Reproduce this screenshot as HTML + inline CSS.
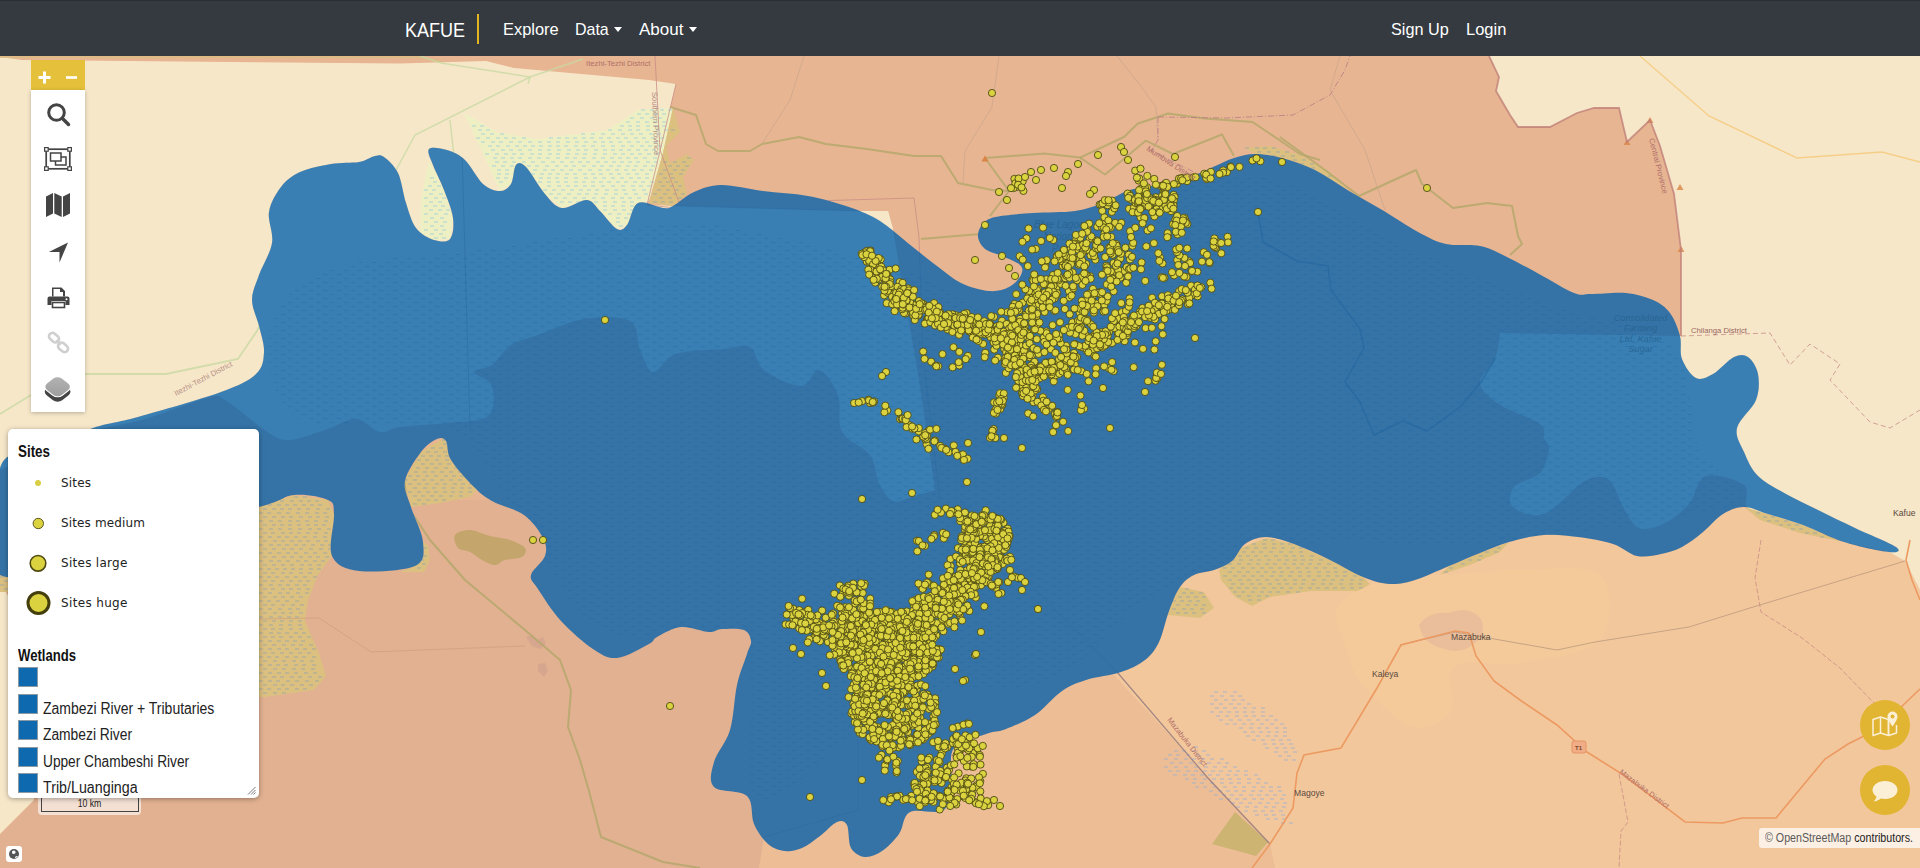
<!DOCTYPE html>
<html lang="en">
<head>
<meta charset="utf-8">
<title>Kafue</title>
<style>
html,body{margin:0;padding:0;}
body{width:1920px;height:868px;overflow:hidden;position:relative;background:#e7b592;font-family:"Liberation Sans",sans-serif;}
#map{position:absolute;left:0;top:0;display:block;}
#nav{position:absolute;left:0;top:0;width:1920px;height:56px;background:#343a40;border-top:1px solid #2a2e33;box-sizing:border-box;}
#nav span{position:absolute;color:#fff;white-space:nowrap;transform-origin:0 50%;line-height:20px;}
#nav .brand{font-size:20px;left:405px;top:18.5px;transform:scaleX(.9);}
#nav .lnk{font-size:17px;top:19px;}
#nav .bar{left:477px;top:12.5px;width:2px;height:30px;background:#e2b420;}
.caret{position:absolute;top:25.5px;width:0;height:0;border-left:4.5px solid transparent;border-right:4.5px solid transparent;border-top:5px solid #fff;}
#tools{position:absolute;left:31px;top:60px;width:54px;}
#zoom{height:30px;background:#e5c03b;position:relative;}
#panel{height:322px;background:#fff;box-shadow:0 1px 4px rgba(0,0,0,.25);position:relative;}
#panel svg{position:absolute;}
#legend{position:absolute;left:8px;top:429px;width:251px;height:369px;background:#fff;border-radius:5px;box-shadow:0 1px 5px rgba(0,0,0,.35);overflow:hidden;}
#legend span{position:absolute;white-space:nowrap;transform-origin:0 50%;}
#legend .h{font-weight:bold;font-size:16px;color:#111;line-height:18px;}
#legend .t{font-size:16px;color:#222;line-height:18px;transform:scaleX(.874);}
#legend .d{font-family:"DejaVu Sans",sans-serif;font-size:12px;color:#222;line-height:14px;letter-spacing:.1px;}
#legend i{position:absolute;left:10px;width:19px;height:19px;background:#0f69af;border:1px solid #8c9aa5;box-sizing:border-box;width:20px;height:20px;}
#scale{position:absolute;left:38px;top:797px;width:103px;height:18px;background:rgba(255,255,255,.6);border-radius:0 0 4px 4px;}
#scale div{position:absolute;left:3px;top:0;width:96px;height:14px;border:1px solid #444;border-top:none;}
#scale span{position:absolute;left:0;width:103px;top:1px;text-align:center;font-size:10px;color:#222;line-height:12px;transform:scaleX(.87);}
#attr{position:absolute;left:1759px;top:828px;width:161px;height:20px;background:rgba(255,255,255,.72);border-radius:3px 0 0 3px;}
#attr span{position:absolute;left:6px;top:3px;font-size:12px;line-height:14px;white-space:nowrap;color:#222;transform:scaleX(.89);transform-origin:0 50%;}
#attr b{font-weight:normal;color:#5a5a5a;}
.fab{position:absolute;left:1860px;width:50px;height:50px;border-radius:25px;background:#e1b431;}
#globe{position:absolute;left:6px;top:846px;width:16px;height:16px;background:#fff;border-radius:3px;}
</style>
</head>
<body>
<svg id="map" width="1920" height="868" viewBox="0 0 1920 868">
<rect width="1920" height="868" fill="#e7b592"/>
<polygon points="0,575 258,500 500,500 858,568 858,810 764,837 759,868 0,868" fill="#e1b191"/>
<polygon points="759,868 764,837 858,810 858,600 1025,579 1270,844 1275,868" fill="#edbd95"/>
<polygon points="1025,579 1100,520 1300,500 1480,470 1513,507 1544,514 1585,481 1609,480 1623,507 1639,528 1665,523 1689,504 1706,476 1744,485 1747,507 1768,514 1803,525 1844,542 1889,552 1905,561 1920,590 1920,868 1275,868 1270,844" fill="#f3c79c"/>
<polygon points="0,580 10,600 34,800 0,834" fill="#f6e7c9"/>
<polygon points="861,211 888,211 893,229 861,229" fill="#f6e7c9"/>
<path d="M93,430 L0,470 L0,57 L22,60 L400,63.5 L486,61 L514,68 L649,80 L676,84 L647,205 L861,211 L888,211 L893,230 L919,380 L935,490 C931.2,491.2 919.0,495.2 912.0,497.0C905.0,498.8 898.5,503.3 893.0,501.0C887.5,498.7 882.8,490.7 879.0,483.0C875.2,475.3 876.2,463.5 870.0,455.0C863.8,446.5 847.3,442.0 842.0,432.0C836.7,422.0 841.8,405.3 838.0,395.0C834.2,384.7 825.2,371.5 819.0,370.0C812.8,368.5 810.2,386.0 801.0,386.0C791.8,386.0 772.5,376.5 764.0,370.0C755.5,363.5 756.8,350.5 750.0,347.0C743.2,343.5 735.3,347.8 723.0,349.0C710.7,350.2 687.7,350.2 676.0,354.0C664.3,357.8 659.0,372.8 653.0,372.0C647.0,371.2 643.8,357.5 640.0,349.0C636.2,340.5 639.3,326.0 630.0,321.0C620.7,316.0 599.3,316.7 584.0,319.0C568.7,321.3 550.2,330.7 538.0,335.0C525.8,339.3 518.7,340.0 511.0,345.0C503.3,350.0 498.2,360.5 492.0,365.0C485.8,369.5 474.0,368.5 474.0,372.0C474.0,375.5 489.7,378.7 492.0,386.0C494.3,393.3 495.7,409.8 488.0,416.0C480.3,422.2 460.7,421.2 446.0,423.0C431.3,424.8 411.0,425.5 400.0,427.0C389.0,428.5 387.3,433.3 380.0,432.0C372.7,430.7 365.2,419.3 356.0,419.0C346.8,418.7 336.5,426.5 325.0,430.0C313.5,433.5 297.5,440.3 287.0,440.0C276.5,439.7 272.3,434.7 262.0,428.0C251.7,421.3 234.2,405.0 225.0,400.0C215.8,395.0 220.3,394.8 207.0,398.0C193.7,401.2 164.0,413.7 145.0,419.0C126.0,424.3 101.7,428.2 93.0,430.0Z" fill="#f6e7c9"/>
<path d="M1768,514 L1803,525 L1844,542 L1889,552 L1905,561 L1920,590 L1920,56 L1489,56 L1499,77 L1496,91 L1510,115 L1518,127 L1550,127 L1577,113 L1594,108 L1619,108 L1627,142 L1650,120 L1660,146 L1674,194 L1681,250 L1681,336 L1500,333 C1499.2,337.3 1498.3,350.7 1495.0,359.0C1491.7,367.3 1479.3,375.5 1480.0,383.0C1480.7,390.5 1489.0,397.2 1499.0,404.0C1509.0,410.8 1532.5,418.3 1540.0,424.0C1547.5,429.7 1542.5,433.8 1544.0,438.0C1545.5,442.2 1549.7,443.2 1549.0,449.0C1548.3,454.8 1545.8,466.7 1540.0,473.0C1534.2,479.3 1518.5,481.3 1514.0,487.0C1509.5,492.7 1508.0,502.5 1513.0,507.0C1518.0,511.5 1532.0,518.3 1544.0,514.0C1556.0,509.7 1574.2,486.7 1585.0,481.0C1595.8,475.3 1602.7,475.7 1609.0,480.0C1615.3,484.3 1618.0,499.0 1623.0,507.0C1628.0,515.0 1632.0,525.3 1639.0,528.0C1646.0,530.7 1656.7,527.0 1665.0,523.0C1673.3,519.0 1682.2,511.8 1689.0,504.0C1695.8,496.2 1696.8,479.2 1706.0,476.0C1715.2,472.8 1737.2,479.8 1744.0,485.0C1750.8,490.2 1743.0,502.2 1747.0,507.0C1751.0,511.8 1764.5,512.8 1768.0,514.0Z" fill="#f6e7c9"/>
<polygon points="464,113 497,132 538,139 607,130 638,110 673,108 663,153 649,201 638,203 627,225 617,229 600,211 587,200 562,208 545,194 526,167 516,165 511,184 500,191" fill="#eef0c4"/>
<path d="M641,110h4M650,110h4M660,110h4M668,110h4M637,114h4M645,114h4M654,114h4M662,114h4M630,118h4M640,118h4M650,118h4M658,118h4M626,122h4M636,122h4M645,122h4M653,122h4M662,122h4M472,126h4M480,126h4M620,126h4M628,126h4M636,126h4M646,126h4M654,126h4M662,126h4M478,130h4M486,130h4M608,130h4M618,130h4M628,130h4M636,130h4M646,130h4M656,130h4M664,130h4M481,134h4M490,134h4M500,134h4M581,134h4M591,134h4M601,134h4M611,134h4M621,134h4M630,134h4M639,134h4M649,134h4M657,134h4M476,138h4M486,138h4M496,138h4M504,138h4M512,138h4M522,138h4M549,138h4M557,138h4M565,138h4M573,138h4M582,138h4M590,138h4M599,138h4M607,138h4M616,138h4M624,138h4M634,138h4M642,138h4M651,138h4M660,138h4M481,142h4M491,142h4M499,142h4M509,142h4M518,142h4M528,142h4M538,142h4M547,142h4M556,142h4M566,142h4M575,142h4M584,142h4M593,142h4M601,142h4M609,142h4M618,142h4M627,142h4M636,142h4M645,142h4M653,142h4M488,146h4M496,146h4M506,146h4M515,146h4M523,146h4M531,146h4M539,146h4M548,146h4M556,146h4M564,146h4M574,146h4M582,146h4M591,146h4M601,146h4M611,146h4M621,146h4M630,146h4M640,146h4M648,146h4M658,146h4M491,150h4M501,150h4M509,150h4M518,150h4M528,150h4M538,150h4M547,150h4M557,150h4M567,150h4M576,150h4M584,150h4M594,150h4M603,150h4M611,150h4M619,150h4M627,150h4M636,150h4M644,150h4M652,150h4M485,154h4M495,154h4M504,154h4M512,154h4M520,154h4M530,154h4M538,154h4M548,154h4M556,154h4M566,154h4M575,154h4M583,154h4M593,154h4M603,154h4M613,154h4M621,154h4M630,154h4M638,154h4M647,154h4M655,154h4M493,158h4M501,158h4M510,158h4M518,158h4M528,158h4M537,158h4M546,158h4M556,158h4M565,158h4M573,158h4M582,158h4M592,158h4M601,158h4M610,158h4M618,158h4M626,158h4M634,158h4M643,158h4M653,158h4M495,162h4M503,162h4M512,162h4M522,162h4M531,162h4M541,162h4M551,162h4M560,162h4M570,162h4M578,162h4M586,162h4M596,162h4M604,162h4M612,162h4M620,162h4M628,162h4M636,162h4M646,162h4M654,162h4M492,166h4M501,166h4M510,166h4M527,166h4M535,166h4M545,166h4M555,166h4M564,166h4M572,166h4M582,166h4M592,166h4M600,166h4M609,166h4M617,166h4M626,166h4M634,166h4M643,166h4M651,166h4M497,170h4M505,170h4M533,170h4M543,170h4M551,170h4M560,170h4M569,170h4M578,170h4M588,170h4M598,170h4M606,170h4M615,170h4M624,170h4M632,170h4M640,170h4M649,170h4M497,174h4M505,174h4M531,174h4M540,174h4M548,174h4M556,174h4M565,174h4M573,174h4M583,174h4M591,174h4M599,174h4M609,174h4M617,174h4M626,174h4M635,174h4M645,174h4M496,178h4M504,178h4M539,178h4M547,178h4M555,178h4M564,178h4M574,178h4M584,178h4M593,178h4M602,178h4M611,178h4M620,178h4M629,178h4M637,178h4M645,178h4M499,182h4M538,182h4M547,182h4M556,182h4M564,182h4M574,182h4M582,182h4M591,182h4M599,182h4M607,182h4M616,182h4M624,182h4M633,182h4M641,182h4M650,182h4M547,186h4M557,186h4M566,186h4M574,186h4M583,186h4M591,186h4M601,186h4M611,186h4M621,186h4M631,186h4M639,186h4M647,186h4M543,190h4M552,190h4M561,190h4M570,190h4M579,190h4M587,190h4M595,190h4M605,190h4M614,190h4M622,190h4M632,190h4M642,190h4M549,194h4M557,194h4M567,194h4M577,194h4M585,194h4M594,194h4M604,194h4M614,194h4M624,194h4M634,194h4M644,194h4M554,198h4M563,198h4M573,198h4M582,198h4M592,198h4M601,198h4M611,198h4M620,198h4M628,198h4M637,198h4M560,202h4M568,202h4M576,202h4M594,202h4M603,202h4M613,202h4M622,202h4M630,202h4M603,206h4M611,206h4M621,206h4M630,206h4M603,210h4M613,210h4M622,210h4M630,210h4M608,214h4M617,214h4M627,214h4M616,218h4M624,218h4M616,222h4M619,226h4" stroke="#a9d3d6" stroke-width="1" fill="none"/>
<polygon points="429,160 444,190 453,218 450,239 434,240 420,232 421,200" fill="#eef0c4"/>
<path d="M430,178h4M433,182h4M428,186h4M437,186h4M424,190h4M432,190h4M429,194h4M439,194h4M424,198h4M434,198h4M442,198h4M429,202h4M438,202h4M424,206h4M433,206h4M441,206h4M429,210h4M438,210h4M446,210h4M424,214h4M434,214h4M444,214h4M430,218h4M440,218h4M424,222h4M434,222h4M443,222h4M430,226h4M440,226h4M424,230h4M434,230h4M442,230h4M430,234h4M439,234h4M434,238h4M442,238h4" stroke="#a9d3d6" stroke-width="1" fill="none"/>
<polygon points="673,108 680,132 666,146 670,163 687,154 694,160 683,177 687,194 673,206 649,203 663,153" fill="#dcc080"/>
<path d="M671,130h4M687,158h4M663,162h4M673,162h4M682,162h4M668,166h4M676,166h4M685,166h4M663,170h4M673,170h4M681,170h4M659,174h4M669,174h4M679,174h4M663,178h4M671,178h4M658,182h4M666,182h4M674,182h4M661,186h4M670,186h4M678,186h4M657,190h4M666,190h4M675,190h4M653,194h4M663,194h4M673,194h4M681,194h4M659,198h4M668,198h4M678,198h4M653,202h4M661,202h4M669,202h4" stroke="#a3a9a0" stroke-width="1" fill="none"/>
<polygon points="259,507 294,495 328,500 334,514 332,556 318,575 308,600 305,621 319,653 326,676 314,690 264,697 259,697" fill="#dcc080"/>
<path d="M294,497h4M303,497h4M280,501h4M290,501h4M299,501h4M307,501h4M315,501h4M268,505h4M277,505h4M285,505h4M293,505h4M302,505h4M310,505h4M318,505h4M263,509h4M272,509h4M280,509h4M288,509h4M297,509h4M306,509h4M316,509h4M326,509h4M259,513h4M267,513h4M277,513h4M286,513h4M296,513h4M305,513h4M315,513h4M323,513h4M263,517h4M272,517h4M281,517h4M289,517h4M299,517h4M308,517h4M316,517h4M325,517h4M259,521h4M269,521h4M278,521h4M288,521h4M296,521h4M305,521h4M314,521h4M324,521h4M263,525h4M272,525h4M280,525h4M288,525h4M297,525h4M306,525h4M314,525h4M322,525h4M259,529h4M269,529h4M278,529h4M288,529h4M298,529h4M308,529h4M317,529h4M327,529h4M263,533h4M271,533h4M281,533h4M289,533h4M297,533h4M306,533h4M314,533h4M324,533h4M259,537h4M268,537h4M277,537h4M285,537h4M294,537h4M303,537h4M313,537h4M323,537h4M263,541h4M273,541h4M281,541h4M290,541h4M298,541h4M306,541h4M316,541h4M324,541h4M259,545h4M269,545h4M277,545h4M285,545h4M294,545h4M302,545h4M311,545h4M320,545h4M328,545h4M263,549h4M272,549h4M282,549h4M290,549h4M299,549h4M309,549h4M319,549h4M328,549h4M259,553h4M268,553h4M277,553h4M286,553h4M294,553h4M304,553h4M313,553h4M323,553h4M263,557h4M272,557h4M282,557h4M290,557h4M299,557h4M308,557h4M316,557h4M325,557h4M259,561h4M269,561h4M277,561h4M286,561h4M296,561h4M304,561h4M313,561h4M321,561h4M263,565h4M272,565h4M281,565h4M290,565h4M300,565h4M308,565h4M317,565h4M259,569h4M267,569h4M275,569h4M283,569h4M291,569h4M299,569h4M309,569h4M317,569h4M263,573h4M271,573h4M281,573h4M289,573h4M299,573h4M308,573h4M259,577h4M267,577h4M275,577h4M285,577h4M294,577h4M303,577h4M313,577h4M263,581h4M271,581h4M280,581h4M289,581h4M298,581h4M306,581h4M259,585h4M269,585h4M278,585h4M286,585h4M295,585h4M303,585h4M263,589h4M271,589h4M281,589h4M289,589h4M297,589h4M306,589h4M259,593h4M268,593h4M278,593h4M286,593h4M296,593h4M305,593h4M263,597h4M273,597h4M281,597h4M290,597h4M299,597h4M259,601h4M267,601h4M276,601h4M285,601h4M295,601h4M263,605h4M271,605h4M281,605h4M291,605h4M300,605h4M259,609h4M268,609h4M278,609h4M288,609h4M296,609h4M263,613h4M273,613h4M281,613h4M289,613h4M299,613h4M259,617h4M269,617h4M278,617h4M287,617h4M295,617h4M263,621h4M272,621h4M280,621h4M289,621h4M298,621h4M259,625h4M269,625h4M279,625h4M288,625h4M298,625h4M263,629h4M271,629h4M279,629h4M289,629h4M299,629h4M259,633h4M269,633h4M277,633h4M285,633h4M294,633h4M302,633h4M263,637h4M271,637h4M279,637h4M289,637h4M298,637h4M307,637h4M259,641h4M268,641h4M277,641h4M285,641h4M293,641h4M301,641h4M263,645h4M272,645h4M282,645h4M291,645h4M299,645h4M309,645h4M259,649h4M268,649h4M277,649h4M285,649h4M295,649h4M303,649h4M312,649h4M263,653h4M271,653h4M280,653h4M289,653h4M298,653h4M307,653h4M259,657h4M267,657h4M275,657h4M285,657h4M294,657h4M302,657h4M312,657h4M263,661h4M273,661h4M282,661h4M292,661h4M300,661h4M310,661h4M259,665h4M268,665h4M276,665h4M284,665h4M294,665h4M302,665h4M312,665h4M263,669h4M273,669h4M282,669h4M292,669h4M301,669h4M311,669h4M259,673h4M268,673h4M277,673h4M285,673h4M294,673h4M304,673h4M313,673h4M263,677h4M272,677h4M280,677h4M290,677h4M298,677h4M308,677h4M318,677h4M259,681h4M268,681h4M276,681h4M286,681h4M295,681h4M305,681h4M315,681h4M263,685h4M273,685h4M281,685h4M290,685h4M300,685h4M309,685h4M259,689h4M267,689h4M277,689h4M285,689h4M295,689h4M303,689h4M263,693h4M273,693h4M282,693h4" stroke="#a3a9a0" stroke-width="1" fill="none"/>
<polygon points="404,480 421,452 444,438 453,445 480,487 470,497 440,503 411,507" fill="#dcc080"/>
<path d="M442,440h4M443,444h4M431,448h4M439,448h4M449,448h4M426,452h4M434,452h4M443,452h4M451,452h4M421,456h4M429,456h4M437,456h4M445,456h4M453,456h4M417,460h4M425,460h4M435,460h4M445,460h4M455,460h4M421,464h4M430,464h4M438,464h4M447,464h4M456,464h4M416,468h4M425,468h4M434,468h4M444,468h4M454,468h4M462,468h4M414,472h4M423,472h4M431,472h4M440,472h4M449,472h4M458,472h4M408,476h4M416,476h4M425,476h4M434,476h4M444,476h4M452,476h4M460,476h4M404,480h4M413,480h4M422,480h4M430,480h4M440,480h4M449,480h4M458,480h4M467,480h4M408,484h4M417,484h4M425,484h4M435,484h4M443,484h4M453,484h4M461,484h4M469,484h4M413,488h4M423,488h4M432,488h4M442,488h4M451,488h4M460,488h4M468,488h4M408,492h4M417,492h4M426,492h4M434,492h4M443,492h4M451,492h4M459,492h4M468,492h4M413,496h4M421,496h4M430,496h4M439,496h4M449,496h4M459,496h4M417,500h4M426,500h4M434,500h4M442,500h4M413,504h4M422,504h4" stroke="#a3a9a0" stroke-width="1" fill="none"/>
<polygon points="1219,570 1238,549 1266,538 1294,544 1328,559 1363,577 1370,584 1359,591 1311,591 1270,597 1252,606 1235,597 1221,580" fill="#dcc080"/>
<path d="M1263,540h4M1271,540h4M1252,544h4M1262,544h4M1272,544h4M1280,544h4M1288,544h4M1245,548h4M1254,548h4M1263,548h4M1272,548h4M1281,548h4M1291,548h4M1299,548h4M1242,552h4M1251,552h4M1259,552h4M1269,552h4M1279,552h4M1289,552h4M1299,552h4M1238,556h4M1246,556h4M1254,556h4M1264,556h4M1274,556h4M1284,556h4M1292,556h4M1300,556h4M1310,556h4M1231,560h4M1239,560h4M1249,560h4M1257,560h4M1267,560h4M1277,560h4M1285,560h4M1293,560h4M1301,560h4M1309,560h4M1319,560h4M1228,564h4M1237,564h4M1247,564h4M1256,564h4M1265,564h4M1273,564h4M1283,564h4M1292,564h4M1300,564h4M1308,564h4M1317,564h4M1327,564h4M1223,568h4M1231,568h4M1241,568h4M1251,568h4M1260,568h4M1269,568h4M1278,568h4M1286,568h4M1296,568h4M1305,568h4M1314,568h4M1323,568h4M1333,568h4M1228,572h4M1237,572h4M1246,572h4M1256,572h4M1264,572h4M1272,572h4M1280,572h4M1290,572h4M1298,572h4M1307,572h4M1317,572h4M1326,572h4M1334,572h4M1343,572h4M1223,576h4M1233,576h4M1242,576h4M1251,576h4M1260,576h4M1270,576h4M1279,576h4M1288,576h4M1298,576h4M1307,576h4M1317,576h4M1326,576h4M1335,576h4M1343,576h4M1353,576h4M1228,580h4M1238,580h4M1247,580h4M1256,580h4M1265,580h4M1275,580h4M1283,580h4M1293,580h4M1302,580h4M1312,580h4M1322,580h4M1331,580h4M1340,580h4M1350,580h4M1359,580h4M1231,584h4M1240,584h4M1250,584h4M1258,584h4M1268,584h4M1277,584h4M1285,584h4M1293,584h4M1301,584h4M1311,584h4M1321,584h4M1329,584h4M1339,584h4M1349,584h4M1358,584h4M1229,588h4M1237,588h4M1245,588h4M1253,588h4M1262,588h4M1272,588h4M1280,588h4M1289,588h4M1299,588h4M1308,588h4M1316,588h4M1325,588h4M1333,588h4M1341,588h4M1350,588h4M1359,588h4M1233,592h4M1241,592h4M1251,592h4M1260,592h4M1268,592h4M1276,592h4M1286,592h4M1296,592h4M1237,596h4M1247,596h4M1257,596h4M1265,596h4M1248,600h4M1257,600h4" stroke="#a3a9a0" stroke-width="1" fill="none"/>
<polygon points="1180,587 1204,592 1214,608 1200,618 1168,615 1169,605" fill="#dcc080"/>
<path d="M1185,589h4M1182,593h4M1190,593h4M1199,593h4M1178,597h4M1186,597h4M1194,597h4M1202,597h4M1172,601h4M1180,601h4M1188,601h4M1196,601h4M1176,605h4M1186,605h4M1194,605h4M1202,605h4M1172,609h4M1182,609h4M1190,609h4M1200,609h4M1176,613h4M1184,613h4M1192,613h4M1202,613h4" stroke="#a3a9a0" stroke-width="1" fill="none"/>
<polygon points="1449,566 1480,553 1509,542 1500,552 1470,565 1440,575" fill="#dcc080"/>
<path d="M1497,548h4M1485,552h4M1494,552h4M1479,556h4M1468,560h4M1477,560h4M1461,564h4M1449,568h4M1444,572h4" stroke="#a3a9a0" stroke-width="1" fill="none"/>
<polygon points="1744,507 1768,514 1803,525 1844,542 1800,533 1760,520" fill="#dcc080"/>
<path d="M1756,513h4M1763,517h4M1771,517h4M1767,521h4M1775,521h4M1784,521h4M1779,525h4M1787,525h4M1795,525h4M1791,529h4M1799,529h4M1805,533h4M1813,533h4M1820,537h4" stroke="#a3a9a0" stroke-width="1" fill="none"/>
<polygon points="1255,154 1282,158 1315,170 1349,191 1330,172 1300,155 1270,146 1245,148" fill="#dcc080"/>
<path d="M1245,148h4M1255,148h4M1263,148h4M1272,148h4M1257,152h4M1267,152h4M1276,152h4M1285,152h4M1272,156h4M1281,156h4M1291,156h4M1293,160h4M1302,160h4M1300,164h4M1310,164h4M1311,168h4M1328,176h4" stroke="#a3a9a0" stroke-width="1" fill="none"/>
<polygon points="0,575 10,575 10,592 0,592" fill="#dcc080"/>
<path d="M0,577h4M4,581h4M0,585h4M4,589h4" stroke="#a3a9a0" stroke-width="1" fill="none"/>
<polygon points="415,566 423,542 428,545 430,560 424,572 400,572" fill="#dcc080"/>
<path d="M423,548h4M423,556h4M420,560h4M422,564h4M417,568h4" stroke="#a3a9a0" stroke-width="1" fill="none"/>
<path d="M455.0,535.0C457.0,532.0 464.2,529.8 470.0,530.0C475.8,530.2 483.3,534.3 490.0,536.0C496.7,537.7 504.2,538.0 510.0,540.0C515.8,542.0 523.0,545.2 525.0,548.0C527.0,550.8 525.3,555.0 522.0,557.0C518.7,559.0 509.5,558.7 505.0,560.0C500.5,561.3 498.8,565.0 495.0,565.0C491.2,565.0 486.2,562.2 482.0,560.0C477.8,557.8 474.0,554.0 470.0,552.0C466.0,550.0 460.5,550.8 458.0,548.0C455.5,545.2 453.0,538.0 455.0,535.0Z" fill="#c4a56c"/>
<polygon points="1235,812 1268,842 1256,856 1212,844" fill="#cdb473"/>
<path d="M1338.0,606.0C1344.5,595.3 1364.5,586.3 1384.0,581.0C1403.5,575.7 1432.3,575.8 1455.0,574.0C1477.7,572.2 1495.8,569.8 1520.0,570.0C1544.2,570.2 1586.7,563.3 1600.0,575.0C1613.3,586.7 1613.3,625.3 1600.0,640.0C1586.7,654.7 1544.2,658.7 1520.0,663.0C1495.8,667.3 1466.5,657.8 1455.0,666.0C1443.5,674.2 1458.2,701.8 1451.0,712.0C1443.8,722.2 1426.8,731.7 1412.0,727.0C1397.2,722.3 1373.2,697.7 1362.0,684.0C1350.8,670.3 1349.0,658.0 1345.0,645.0C1341.0,632.0 1331.5,616.7 1338.0,606.0Z" fill="#f4ca9a"/>
<path d="M1214,692h4M1223,692h4M1233,692h4M1210,696h4M1220,696h4M1230,696h4M1238,696h4M1214,700h4M1224,700h4M1232,700h4M1241,700h4M1210,704h4M1219,704h4M1229,704h4M1237,704h4M1247,704h4M1215,708h4M1223,708h4M1233,708h4M1243,708h4M1252,708h4M1261,708h4M1210,712h4M1219,712h4M1227,712h4M1235,712h4M1243,712h4M1251,712h4M1261,712h4M1216,716h4M1225,716h4M1235,716h4M1244,716h4M1252,716h4M1261,716h4M1269,716h4M1219,720h4M1229,720h4M1238,720h4M1247,720h4M1256,720h4M1265,720h4M1274,720h4M1225,724h4M1233,724h4M1242,724h4M1250,724h4M1260,724h4M1270,724h4M1280,724h4M1239,728h4M1249,728h4M1257,728h4M1265,728h4M1275,728h4M1283,728h4M1243,732h4M1251,732h4M1259,732h4M1267,732h4M1275,732h4M1283,732h4M1246,736h4M1256,736h4M1266,736h4M1274,736h4M1283,736h4M1252,740h4M1261,740h4M1271,740h4M1279,740h4M1287,740h4M1263,744h4M1272,744h4M1280,744h4M1289,744h4M1265,748h4M1275,748h4M1283,748h4M1291,748h4M1274,752h4M1284,752h4M1293,752h4M1278,756h4M1287,756h4M1284,760h4M1292,760h4" stroke="#a9b3c4" stroke-width="1" fill="none"/>
<path d="M1194,747h4M1174,751h4M1182,751h4M1192,751h4M1202,751h4M1168,755h4M1176,755h4M1186,755h4M1196,755h4M1206,755h4M1164,759h4M1174,759h4M1184,759h4M1192,759h4M1201,759h4M1210,759h4M1220,759h4M1170,763h4M1179,763h4M1189,763h4M1198,763h4M1207,763h4M1217,763h4M1225,763h4M1164,767h4M1174,767h4M1184,767h4M1194,767h4M1204,767h4M1213,767h4M1223,767h4M1233,767h4M1168,771h4M1176,771h4M1186,771h4M1194,771h4M1203,771h4M1211,771h4M1219,771h4M1228,771h4M1236,771h4M1244,771h4M1173,775h4M1183,775h4M1191,775h4M1200,775h4M1208,775h4M1216,775h4M1226,775h4M1234,775h4M1244,775h4M1254,775h4M1185,779h4M1193,779h4M1203,779h4M1212,779h4M1220,779h4M1228,779h4M1237,779h4M1247,779h4M1257,779h4M1192,783h4M1200,783h4M1210,783h4M1220,783h4M1229,783h4M1237,783h4M1247,783h4M1256,783h4M1264,783h4M1195,787h4M1203,787h4M1213,787h4M1223,787h4M1233,787h4M1242,787h4M1252,787h4M1261,787h4M1269,787h4M1277,787h4M1209,791h4M1218,791h4M1226,791h4M1234,791h4M1242,791h4M1251,791h4M1259,791h4M1269,791h4M1278,791h4M1214,795h4M1222,795h4M1230,795h4M1239,795h4M1249,795h4M1257,795h4M1265,795h4M1273,795h4M1282,795h4M1219,799h4M1227,799h4M1235,799h4M1243,799h4M1252,799h4M1260,799h4M1270,799h4M1280,799h4M1231,803h4M1239,803h4M1248,803h4M1258,803h4M1266,803h4M1275,803h4M1283,803h4M1236,807h4M1245,807h4M1254,807h4M1264,807h4M1272,807h4M1282,807h4M1244,811h4M1253,811h4M1261,811h4M1270,811h4M1279,811h4M1255,815h4M1264,815h4M1272,815h4M1281,815h4M1266,819h4M1274,819h4M1282,819h4M1281,823h4M1289,823h4" stroke="#a9b3c4" stroke-width="1" fill="none"/>
<path d="M1419,625q10,-14 30,-12q20,-8 32,6q6,14 -6,24q-14,12 -30,6q-22,-4 -26,-24z" fill="#e6b99a" opacity=".7"/>
<path d="M526,637l6,-2l5,5l6,-3l3,7l-6,5l-8,-3zM538,664l7,-1l3,8l-4,6l-6,-6z" fill="#cfa08c" opacity=".6"/>

<path d="M0,57.200H420L441,61" stroke="#d9be7c" stroke-width="1.600" fill="none" stroke-opacity=".8"/>
<g fill="none" stroke="#b3a76a" stroke-width="2" stroke-opacity=".82" stroke-linejoin="round">
<polyline points="670,107 696,115 706,144 718,151 750,151 762,144 799,137 826,144 867,149 914,156 941,156 958,183 992,190 1009,191 990,216"/>
<polyline points="1009,191 985,158 1044,153.500 1080,157.600 1105,174.500 1146,140.600 1173,154 1222,134.500 1234,156"/>
<polyline points="1080,157.600 1124,137 1137.500,123.700 1168,113.500 1205,118.600 1252.600,122 1300,154 1320,160"/>
<polyline points="921,239 980,234"/>
<polyline points="1280,137 1325,170 1359,196 1394,180 1416,170 1422,184 1453,208 1487,203 1512,206 1518,236 1522,244 1510,255"/>
<polyline points="408,507 430,540 465,580 525,630 560,660 571,690 568,727 580,760 589,791 601,837 663,862 700,868" stroke-width="2"/>
<polyline points="409,452 404,480 408,507"/>
</g>
<path d="M985,155.500l3.500,6h-7z" fill="#d98445"/>
<path d="M1627,139l3.500,6h-7zM1650,117l3.500,6h-7zM1680,184l3.500,6h-7zM1681,246l3.500,6h-7z" fill="#d98445" opacity=".8"/>
<g fill="none" stroke="#c9a58c" stroke-width="1" stroke-opacity=".7">
<polyline points="804,56 790,100 762,144"/>
<polyline points="999,56 992,107 965,151 963,183"/>
<polyline points="1117,56 1140,85 1156,107 1158,140"/>
<polyline points="1340,56 1330,90 1365,150 1385,210"/>
</g>
<g fill="none" stroke="#b97c84" stroke-width="1" stroke-opacity=".8" stroke-dasharray="6 2 1 2">
<polyline points="1158,117 1158,140 1151,151 1198,174"/>
<polyline points="1158,117 1226,118 1293,115 1330,95 1345,70 1350,56"/>
</g>
<g fill="none" stroke="#c9d9a4" stroke-width="1.5" stroke-opacity=".8">
<polyline points="583,59 530,77 415,135 395,172"/>
<polyline points="420,56 441,63 530,77 528,84"/>
<polyline points="450,120 455,165"/>
<polyline points="0,414 31,395 85,374 166,374 238,359 257,331 262,320" stroke-width="1.8"/>
</g>
<g fill="none" stroke="#c98d86" stroke-width="1" stroke-opacity=".8">
<polyline points="676,84 647,205 892,230"/>
<polyline points="655,56 660,150 680,205 914,198 919,237 923,356"/>
<polyline points="1489,56 1499,77 1496,91 1510,115 1518,127 1550,127 1577,113 1594,108 1619,108 1627,142 1650,120 1660,146 1674,194 1681,250 1681,336" stroke-width="1.8" stroke="#c08078"/>
<polyline points="1640,56 1709,116 1797,158 1882,152 1920,162" stroke="#f6c878" stroke-width="1.4" stroke-opacity=".8"/>
<polyline points="1681,336 1770,333 1790,365 1810,344 1840,364 1830,380 1870,422 1890,428 1920,410" stroke-dasharray="5 3"/>
<polyline points="1117,672 1207,777 1270,844" stroke="#8d767c" stroke-width="1.2"/>
<polyline points="1400,645 1455,632 1500,640 1557,650 1595,642 1689,627 1750,608 1905,561" stroke="#b99a7e"/>
<polyline points="1761,540 1755,578 1761,612 1802,638 1840,668 1874,703" stroke-dasharray="5 2"/>
<polyline points="1619,774 1628,822 1621,831 1619,868" stroke-dasharray="5 2"/>
<polyline points="259,619 319,618 371,652 525,646" stroke="#cfa083"/>
</g>
<g fill="none" stroke="#ec9a62" stroke-width="1.6">
<polyline points="1252,868 1270,844 1293,808 1297,773 1304,755 1341,748 1377,688 1401,645 1455,631 1469,633 1476,656 1494,681 1520,700 1557,725 1587,752 1625,776 1685,822 1723,823 1742,818 1776,818 1825,759 1848,744 1878,729 1920,689"/>
<polyline points="1920,600 1912,580 1906,560 1910,540"/>
</g>
<rect x="1572" y="741" width="14" height="12" rx="2" fill="#f1ad85" stroke="#e59467" stroke-width="1"/>

<clipPath id="bc"><path d="M0.0,468.0C6.7,447.2 24.5,456.7 40.0,450.0C55.5,443.3 76.7,433.5 93.0,428.0C109.3,422.5 116.7,423.0 138.0,417.0C159.3,411.0 201.3,399.2 221.0,392.0C240.7,384.8 248.8,380.7 256.0,374.0C263.2,367.3 263.5,360.0 264.0,352.0C264.5,344.0 261.0,334.7 259.0,326.0C257.0,317.3 252.0,308.5 252.0,300.0C252.0,291.5 255.7,284.5 259.0,275.0C262.3,265.5 270.3,253.5 272.0,243.0C273.7,232.5 267.5,221.3 269.0,212.0C270.5,202.7 275.8,193.7 281.0,187.0C286.2,180.3 291.7,175.8 300.0,172.0C308.3,168.2 321.2,165.7 331.0,164.0C340.8,162.3 351.7,163.3 359.0,162.0C366.3,160.7 370.8,156.8 375.0,156.0C379.2,155.2 380.2,154.2 384.0,157.0C387.8,159.8 394.3,165.3 398.0,173.0C401.7,180.7 403.0,193.8 406.0,203.0C409.0,212.2 411.3,221.8 416.0,228.0C420.7,234.2 428.3,238.2 434.0,240.0C439.7,241.8 446.8,242.7 450.0,239.0C453.2,235.3 454.0,226.2 453.0,218.0C452.0,209.8 447.3,198.8 444.0,190.0C440.7,181.2 435.5,171.8 433.0,165.0C430.5,158.2 426.7,151.5 429.0,149.0C431.3,146.5 441.0,148.2 447.0,150.0C453.0,151.8 459.0,154.3 465.0,160.0C471.0,165.7 477.2,178.8 483.0,184.0C488.8,189.2 495.3,191.0 500.0,191.0C504.7,191.0 508.3,188.3 511.0,184.0C513.7,179.7 513.5,167.8 516.0,165.0C518.5,162.2 521.2,162.2 526.0,167.0C530.8,171.8 539.0,187.2 545.0,194.0C551.0,200.8 555.0,207.0 562.0,208.0C569.0,209.0 580.7,199.5 587.0,200.0C593.3,200.5 595.0,206.2 600.0,211.0C605.0,215.8 612.5,226.7 617.0,229.0C621.5,231.3 623.5,229.3 627.0,225.0C630.5,220.7 632.0,205.8 638.0,203.0C644.0,200.2 657.2,207.5 663.0,208.0C668.8,208.5 667.8,208.7 673.0,206.0C678.2,203.3 686.0,195.5 694.0,192.0C702.0,188.5 709.5,185.2 721.0,185.0C732.5,184.8 748.5,189.2 763.0,191.0C777.5,192.8 793.7,193.3 808.0,196.0C822.3,198.7 837.0,202.8 849.0,207.0C861.0,211.2 870.0,214.8 880.0,221.0C890.0,227.2 899.5,236.5 909.0,244.0C918.5,251.5 928.3,259.5 937.0,266.0C945.7,272.5 952.3,278.8 961.0,283.0C969.7,287.2 981.0,290.3 989.0,291.0C997.0,291.7 1003.7,289.7 1009.0,287.0C1014.3,284.3 1019.2,278.7 1021.0,275.0C1022.8,271.3 1023.2,268.2 1020.0,265.0C1016.8,261.8 1007.8,258.7 1002.0,256.0C996.2,253.3 989.0,252.2 985.0,249.0C981.0,245.8 978.5,241.0 978.0,237.0C977.5,233.0 979.2,228.3 982.0,225.0C984.8,221.7 986.5,219.0 995.0,217.0C1003.5,215.0 1019.7,214.0 1033.0,213.0C1046.3,212.0 1063.3,212.7 1075.0,211.0C1086.7,209.3 1094.3,206.3 1103.0,203.0C1111.7,199.7 1119.0,193.8 1127.0,191.0C1135.0,188.2 1141.3,188.0 1151.0,186.0C1160.7,184.0 1174.7,182.2 1185.0,179.0C1195.3,175.8 1204.8,170.5 1213.0,167.0C1221.2,163.5 1227.0,160.2 1234.0,158.0C1241.0,155.8 1247.0,154.0 1255.0,154.0C1263.0,154.0 1272.0,155.3 1282.0,158.0C1292.0,160.7 1303.8,164.5 1315.0,170.0C1326.2,175.5 1337.5,184.2 1349.0,191.0C1360.5,197.8 1372.5,204.2 1384.0,211.0C1395.5,217.8 1407.7,226.5 1418.0,232.0C1428.3,237.5 1435.7,241.7 1446.0,244.0C1456.3,246.3 1470.2,244.0 1480.0,246.0C1489.8,248.0 1495.2,251.3 1505.0,256.0C1514.8,260.7 1527.5,267.8 1539.0,274.0C1550.5,280.2 1565.3,289.7 1574.0,293.0C1582.7,296.3 1582.3,294.0 1591.0,294.0C1599.7,294.0 1615.7,292.0 1626.0,293.0C1636.3,294.0 1645.7,296.7 1653.0,300.0C1660.3,303.3 1665.5,307.0 1670.0,313.0C1674.5,319.0 1678.0,328.3 1680.0,336.0C1682.0,343.7 1679.3,352.0 1682.0,359.0C1684.7,366.0 1690.8,375.5 1696.0,378.0C1701.2,380.5 1706.7,377.5 1713.0,374.0C1719.3,370.5 1728.2,359.8 1734.0,357.0C1739.8,354.2 1744.0,354.2 1748.0,357.0C1752.0,359.8 1756.7,366.8 1758.0,374.0C1759.3,381.2 1759.5,391.0 1756.0,400.0C1752.5,409.0 1739.0,419.3 1737.0,428.0C1735.0,436.7 1740.5,444.0 1744.0,452.0C1747.5,460.0 1751.0,469.0 1758.0,476.0C1765.0,483.0 1775.7,488.2 1786.0,494.0C1796.3,499.8 1808.5,505.3 1820.0,511.0C1831.5,516.7 1842.3,522.0 1855.0,528.0C1867.7,534.0 1890.3,543.0 1896.0,547.0C1901.7,551.0 1897.7,552.8 1889.0,552.0C1880.3,551.2 1858.3,546.5 1844.0,542.0C1829.7,537.5 1815.7,529.7 1803.0,525.0C1790.3,520.3 1777.8,517.0 1768.0,514.0C1758.2,511.0 1751.5,507.0 1744.0,507.0C1736.5,507.0 1729.8,509.8 1723.0,514.0C1716.2,518.2 1709.8,526.5 1703.0,532.0C1696.2,537.5 1689.0,543.3 1682.0,547.0C1675.0,550.7 1668.5,552.5 1661.0,554.0C1653.5,555.5 1645.0,557.7 1637.0,556.0C1629.0,554.3 1622.8,547.2 1613.0,544.0C1603.2,540.8 1589.5,538.5 1578.0,537.0C1566.5,535.5 1555.5,534.2 1544.0,535.0C1532.5,535.8 1519.7,539.0 1509.0,542.0C1498.3,545.0 1490.0,549.0 1480.0,553.0C1470.0,557.0 1459.8,561.5 1449.0,566.0C1438.2,570.5 1424.8,577.0 1415.0,580.0C1405.2,583.0 1398.7,584.5 1390.0,584.0C1381.3,583.5 1373.3,581.2 1363.0,577.0C1352.7,572.8 1339.5,564.5 1328.0,559.0C1316.5,553.5 1304.3,547.7 1294.0,544.0C1283.7,540.3 1274.2,537.0 1266.0,537.0C1257.8,537.0 1250.7,540.0 1245.0,544.0C1239.3,548.0 1237.2,556.7 1232.0,561.0C1226.8,565.3 1220.3,567.7 1214.0,570.0C1207.7,572.3 1199.7,572.2 1194.0,575.0C1188.3,577.8 1184.2,581.0 1180.0,587.0C1175.8,593.0 1172.5,601.8 1169.0,611.0C1165.5,620.2 1163.0,633.8 1159.0,642.0C1155.0,650.2 1151.3,655.0 1145.0,660.0C1138.7,665.0 1130.8,668.7 1121.0,672.0C1111.2,675.3 1095.8,676.8 1086.0,680.0C1076.2,683.2 1070.5,685.2 1062.0,691.0C1053.5,696.8 1044.3,708.7 1035.0,715.0C1025.7,721.3 1014.2,725.8 1006.0,729.0C997.8,732.2 994.7,730.8 986.0,734.0C977.3,737.2 959.8,740.3 954.0,748.0C948.2,755.7 952.7,769.7 951.0,780.0C949.3,790.3 950.8,804.7 944.0,810.0C937.2,815.3 917.5,808.0 910.0,812.0C902.5,816.0 903.7,827.5 899.0,834.0C894.3,840.5 887.7,847.2 882.0,851.0C876.3,854.8 870.2,857.5 865.0,857.0C859.8,856.5 854.0,853.3 851.0,848.0C848.0,842.7 849.3,829.3 847.0,825.0C844.7,820.7 841.5,820.2 837.0,822.0C832.5,823.8 825.8,831.7 820.0,836.0C814.2,840.3 807.8,845.5 802.0,848.0C796.2,850.5 790.7,851.7 785.0,851.0C779.3,850.3 773.2,848.5 768.0,844.0C762.8,839.5 757.5,832.0 754.0,824.0C750.5,816.0 753.7,802.2 747.0,796.0C740.3,789.8 719.5,792.7 714.0,787.0C708.5,781.3 711.3,771.5 714.0,762.0C716.7,752.5 726.2,742.8 730.0,730.0C733.8,717.2 734.2,697.7 737.0,685.0C739.8,672.3 744.7,661.3 747.0,654.0C749.3,646.7 751.5,645.0 751.0,641.0C750.5,637.0 748.8,632.0 744.0,630.0C739.2,628.0 727.8,628.7 722.0,629.0C716.2,629.3 715.8,632.3 709.0,632.0C702.2,631.7 689.7,626.2 681.0,627.0C672.3,627.8 662.3,634.2 657.0,637.0C651.7,639.8 655.7,640.5 649.0,644.0C642.3,647.5 626.3,657.2 617.0,658.0C607.7,658.8 602.3,655.2 593.0,649.0C583.7,642.8 570.2,631.0 561.0,621.0C551.8,611.0 543.0,596.7 538.0,589.0C533.0,581.3 529.8,580.5 531.0,575.0C532.2,569.5 543.0,562.2 545.0,556.0C547.0,549.8 546.5,544.8 543.0,538.0C539.5,531.2 532.5,521.2 524.0,515.0C515.5,508.8 500.3,505.7 492.0,501.0C483.7,496.3 480.8,493.8 474.0,487.0C467.2,480.2 455.7,467.7 451.0,460.0C446.3,452.3 448.3,444.5 446.0,441.0C443.7,437.5 441.2,437.2 437.0,439.0C432.8,440.8 426.3,445.0 421.0,452.0C415.7,459.0 406.7,471.8 405.0,481.0C403.3,490.2 408.0,496.8 411.0,507.0C414.0,517.2 422.3,532.2 423.0,542.0C423.7,551.8 425.7,561.2 415.0,566.0C404.3,570.8 372.8,572.7 359.0,571.0C345.2,569.3 336.2,565.5 332.0,556.0C327.8,546.5 334.7,523.3 334.0,514.0C333.3,504.7 334.7,503.2 328.0,500.0C321.3,496.8 305.5,493.8 294.0,495.0C282.5,496.2 286.3,499.5 259.0,507.0C231.7,514.5 173.2,528.7 130.0,540.0C86.8,551.3 21.7,587.0 0.0,575.0C-21.7,563.0 -6.7,488.8 0.0,468.0Z"/></clipPath>
<g clip-path="url(#bc)"><rect width="1920" height="868" fill="#e6b492"/><polygon points="0,580 10,600 34,800 0,834" fill="#f6e7c9"/><polygon points="861,211 888,211 893,229 861,229" fill="#f6e7c9"/><path d="M93,430 L0,470 L0,57 L22,60 L400,63.5 L486,61 L514,68 L649,80 L676,84 L647,205 L861,211 L888,211 L893,230 L919,380 L935,490 C931.2,491.2 919.0,495.2 912.0,497.0C905.0,498.8 898.5,503.3 893.0,501.0C887.5,498.7 882.8,490.7 879.0,483.0C875.2,475.3 876.2,463.5 870.0,455.0C863.8,446.5 847.3,442.0 842.0,432.0C836.7,422.0 841.8,405.3 838.0,395.0C834.2,384.7 825.2,371.5 819.0,370.0C812.8,368.5 810.2,386.0 801.0,386.0C791.8,386.0 772.5,376.5 764.0,370.0C755.5,363.5 756.8,350.5 750.0,347.0C743.2,343.5 735.3,347.8 723.0,349.0C710.7,350.2 687.7,350.2 676.0,354.0C664.3,357.8 659.0,372.8 653.0,372.0C647.0,371.2 643.8,357.5 640.0,349.0C636.2,340.5 639.3,326.0 630.0,321.0C620.7,316.0 599.3,316.7 584.0,319.0C568.7,321.3 550.2,330.7 538.0,335.0C525.8,339.3 518.7,340.0 511.0,345.0C503.3,350.0 498.2,360.5 492.0,365.0C485.8,369.5 474.0,368.5 474.0,372.0C474.0,375.5 489.7,378.7 492.0,386.0C494.3,393.3 495.7,409.8 488.0,416.0C480.3,422.2 460.7,421.2 446.0,423.0C431.3,424.8 411.0,425.5 400.0,427.0C389.0,428.5 387.3,433.3 380.0,432.0C372.7,430.7 365.2,419.3 356.0,419.0C346.8,418.7 336.5,426.5 325.0,430.0C313.5,433.5 297.5,440.3 287.0,440.0C276.5,439.7 272.3,434.7 262.0,428.0C251.7,421.3 234.2,405.0 225.0,400.0C215.8,395.0 220.3,394.8 207.0,398.0C193.7,401.2 164.0,413.7 145.0,419.0C126.0,424.3 101.7,428.2 93.0,430.0Z" fill="#f6e7c9"/><path d="M1768,514 L1803,525 L1844,542 L1889,552 L1905,561 L1920,590 L1920,56 L1489,56 L1499,77 L1496,91 L1510,115 L1518,127 L1550,127 L1577,113 L1594,108 L1619,108 L1627,142 L1650,120 L1660,146 L1674,194 L1681,250 L1681,336 L1500,333 C1499.2,337.3 1498.3,350.7 1495.0,359.0C1491.7,367.3 1479.3,375.5 1480.0,383.0C1480.7,390.5 1489.0,397.2 1499.0,404.0C1509.0,410.8 1532.5,418.3 1540.0,424.0C1547.5,429.7 1542.5,433.8 1544.0,438.0C1545.5,442.2 1549.7,443.2 1549.0,449.0C1548.3,454.8 1545.8,466.7 1540.0,473.0C1534.2,479.3 1518.5,481.3 1514.0,487.0C1509.5,492.7 1508.0,502.5 1513.0,507.0C1518.0,511.5 1532.0,518.3 1544.0,514.0C1556.0,509.7 1574.2,486.7 1585.0,481.0C1595.8,475.3 1602.7,475.7 1609.0,480.0C1615.3,484.3 1618.0,499.0 1623.0,507.0C1628.0,515.0 1632.0,525.3 1639.0,528.0C1646.0,530.7 1656.7,527.0 1665.0,523.0C1673.3,519.0 1682.2,511.8 1689.0,504.0C1695.8,496.2 1696.8,479.2 1706.0,476.0C1715.2,472.8 1737.2,479.8 1744.0,485.0C1750.8,490.2 1743.0,502.2 1747.0,507.0C1751.0,511.8 1764.5,512.8 1768.0,514.0Z" fill="#f6e7c9"/><g fill="none" stroke="#b08a86" stroke-width="1" stroke-opacity=".5"><polyline points="462,150 470,430"/><polyline points="914,198 919,237 923,356 940,500"/><polyline points="647,205 861,211"/><polyline points="1117,672 1025,579 960,500"/><polyline points="858,568 858,810 764,837"/></g></g>
<path d="M0.0,468.0C6.7,447.2 24.5,456.7 40.0,450.0C55.5,443.3 76.7,433.5 93.0,428.0C109.3,422.5 116.7,423.0 138.0,417.0C159.3,411.0 201.3,399.2 221.0,392.0C240.7,384.8 248.8,380.7 256.0,374.0C263.2,367.3 263.5,360.0 264.0,352.0C264.5,344.0 261.0,334.7 259.0,326.0C257.0,317.3 252.0,308.5 252.0,300.0C252.0,291.5 255.7,284.5 259.0,275.0C262.3,265.5 270.3,253.5 272.0,243.0C273.7,232.5 267.5,221.3 269.0,212.0C270.5,202.7 275.8,193.7 281.0,187.0C286.2,180.3 291.7,175.8 300.0,172.0C308.3,168.2 321.2,165.7 331.0,164.0C340.8,162.3 351.7,163.3 359.0,162.0C366.3,160.7 370.8,156.8 375.0,156.0C379.2,155.2 380.2,154.2 384.0,157.0C387.8,159.8 394.3,165.3 398.0,173.0C401.7,180.7 403.0,193.8 406.0,203.0C409.0,212.2 411.3,221.8 416.0,228.0C420.7,234.2 428.3,238.2 434.0,240.0C439.7,241.8 446.8,242.7 450.0,239.0C453.2,235.3 454.0,226.2 453.0,218.0C452.0,209.8 447.3,198.8 444.0,190.0C440.7,181.2 435.5,171.8 433.0,165.0C430.5,158.2 426.7,151.5 429.0,149.0C431.3,146.5 441.0,148.2 447.0,150.0C453.0,151.8 459.0,154.3 465.0,160.0C471.0,165.7 477.2,178.8 483.0,184.0C488.8,189.2 495.3,191.0 500.0,191.0C504.7,191.0 508.3,188.3 511.0,184.0C513.7,179.7 513.5,167.8 516.0,165.0C518.5,162.2 521.2,162.2 526.0,167.0C530.8,171.8 539.0,187.2 545.0,194.0C551.0,200.8 555.0,207.0 562.0,208.0C569.0,209.0 580.7,199.5 587.0,200.0C593.3,200.5 595.0,206.2 600.0,211.0C605.0,215.8 612.5,226.7 617.0,229.0C621.5,231.3 623.5,229.3 627.0,225.0C630.5,220.7 632.0,205.8 638.0,203.0C644.0,200.2 657.2,207.5 663.0,208.0C668.8,208.5 667.8,208.7 673.0,206.0C678.2,203.3 686.0,195.5 694.0,192.0C702.0,188.5 709.5,185.2 721.0,185.0C732.5,184.8 748.5,189.2 763.0,191.0C777.5,192.8 793.7,193.3 808.0,196.0C822.3,198.7 837.0,202.8 849.0,207.0C861.0,211.2 870.0,214.8 880.0,221.0C890.0,227.2 899.5,236.5 909.0,244.0C918.5,251.5 928.3,259.5 937.0,266.0C945.7,272.5 952.3,278.8 961.0,283.0C969.7,287.2 981.0,290.3 989.0,291.0C997.0,291.7 1003.7,289.7 1009.0,287.0C1014.3,284.3 1019.2,278.7 1021.0,275.0C1022.8,271.3 1023.2,268.2 1020.0,265.0C1016.8,261.8 1007.8,258.7 1002.0,256.0C996.2,253.3 989.0,252.2 985.0,249.0C981.0,245.8 978.5,241.0 978.0,237.0C977.5,233.0 979.2,228.3 982.0,225.0C984.8,221.7 986.5,219.0 995.0,217.0C1003.5,215.0 1019.7,214.0 1033.0,213.0C1046.3,212.0 1063.3,212.7 1075.0,211.0C1086.7,209.3 1094.3,206.3 1103.0,203.0C1111.7,199.7 1119.0,193.8 1127.0,191.0C1135.0,188.2 1141.3,188.0 1151.0,186.0C1160.7,184.0 1174.7,182.2 1185.0,179.0C1195.3,175.8 1204.8,170.5 1213.0,167.0C1221.2,163.5 1227.0,160.2 1234.0,158.0C1241.0,155.8 1247.0,154.0 1255.0,154.0C1263.0,154.0 1272.0,155.3 1282.0,158.0C1292.0,160.7 1303.8,164.5 1315.0,170.0C1326.2,175.5 1337.5,184.2 1349.0,191.0C1360.5,197.8 1372.5,204.2 1384.0,211.0C1395.5,217.8 1407.7,226.5 1418.0,232.0C1428.3,237.5 1435.7,241.7 1446.0,244.0C1456.3,246.3 1470.2,244.0 1480.0,246.0C1489.8,248.0 1495.2,251.3 1505.0,256.0C1514.8,260.7 1527.5,267.8 1539.0,274.0C1550.5,280.2 1565.3,289.7 1574.0,293.0C1582.7,296.3 1582.3,294.0 1591.0,294.0C1599.7,294.0 1615.7,292.0 1626.0,293.0C1636.3,294.0 1645.7,296.7 1653.0,300.0C1660.3,303.3 1665.5,307.0 1670.0,313.0C1674.5,319.0 1678.0,328.3 1680.0,336.0C1682.0,343.7 1679.3,352.0 1682.0,359.0C1684.7,366.0 1690.8,375.5 1696.0,378.0C1701.2,380.5 1706.7,377.5 1713.0,374.0C1719.3,370.5 1728.2,359.8 1734.0,357.0C1739.8,354.2 1744.0,354.2 1748.0,357.0C1752.0,359.8 1756.7,366.8 1758.0,374.0C1759.3,381.2 1759.5,391.0 1756.0,400.0C1752.5,409.0 1739.0,419.3 1737.0,428.0C1735.0,436.7 1740.5,444.0 1744.0,452.0C1747.5,460.0 1751.0,469.0 1758.0,476.0C1765.0,483.0 1775.7,488.2 1786.0,494.0C1796.3,499.8 1808.5,505.3 1820.0,511.0C1831.5,516.7 1842.3,522.0 1855.0,528.0C1867.7,534.0 1890.3,543.0 1896.0,547.0C1901.7,551.0 1897.7,552.8 1889.0,552.0C1880.3,551.2 1858.3,546.5 1844.0,542.0C1829.7,537.5 1815.7,529.7 1803.0,525.0C1790.3,520.3 1777.8,517.0 1768.0,514.0C1758.2,511.0 1751.5,507.0 1744.0,507.0C1736.5,507.0 1729.8,509.8 1723.0,514.0C1716.2,518.2 1709.8,526.5 1703.0,532.0C1696.2,537.5 1689.0,543.3 1682.0,547.0C1675.0,550.7 1668.5,552.5 1661.0,554.0C1653.5,555.5 1645.0,557.7 1637.0,556.0C1629.0,554.3 1622.8,547.2 1613.0,544.0C1603.2,540.8 1589.5,538.5 1578.0,537.0C1566.5,535.5 1555.5,534.2 1544.0,535.0C1532.5,535.8 1519.7,539.0 1509.0,542.0C1498.3,545.0 1490.0,549.0 1480.0,553.0C1470.0,557.0 1459.8,561.5 1449.0,566.0C1438.2,570.5 1424.8,577.0 1415.0,580.0C1405.2,583.0 1398.7,584.5 1390.0,584.0C1381.3,583.5 1373.3,581.2 1363.0,577.0C1352.7,572.8 1339.5,564.5 1328.0,559.0C1316.5,553.5 1304.3,547.7 1294.0,544.0C1283.7,540.3 1274.2,537.0 1266.0,537.0C1257.8,537.0 1250.7,540.0 1245.0,544.0C1239.3,548.0 1237.2,556.7 1232.0,561.0C1226.8,565.3 1220.3,567.7 1214.0,570.0C1207.7,572.3 1199.7,572.2 1194.0,575.0C1188.3,577.8 1184.2,581.0 1180.0,587.0C1175.8,593.0 1172.5,601.8 1169.0,611.0C1165.5,620.2 1163.0,633.8 1159.0,642.0C1155.0,650.2 1151.3,655.0 1145.0,660.0C1138.7,665.0 1130.8,668.7 1121.0,672.0C1111.2,675.3 1095.8,676.8 1086.0,680.0C1076.2,683.2 1070.5,685.2 1062.0,691.0C1053.5,696.8 1044.3,708.7 1035.0,715.0C1025.7,721.3 1014.2,725.8 1006.0,729.0C997.8,732.2 994.7,730.8 986.0,734.0C977.3,737.2 959.8,740.3 954.0,748.0C948.2,755.7 952.7,769.7 951.0,780.0C949.3,790.3 950.8,804.7 944.0,810.0C937.2,815.3 917.5,808.0 910.0,812.0C902.5,816.0 903.7,827.5 899.0,834.0C894.3,840.5 887.7,847.2 882.0,851.0C876.3,854.8 870.2,857.5 865.0,857.0C859.8,856.5 854.0,853.3 851.0,848.0C848.0,842.7 849.3,829.3 847.0,825.0C844.7,820.7 841.5,820.2 837.0,822.0C832.5,823.8 825.8,831.7 820.0,836.0C814.2,840.3 807.8,845.5 802.0,848.0C796.2,850.5 790.7,851.7 785.0,851.0C779.3,850.3 773.2,848.5 768.0,844.0C762.8,839.5 757.5,832.0 754.0,824.0C750.5,816.0 753.7,802.2 747.0,796.0C740.3,789.8 719.5,792.7 714.0,787.0C708.5,781.3 711.3,771.5 714.0,762.0C716.7,752.5 726.2,742.8 730.0,730.0C733.8,717.2 734.2,697.7 737.0,685.0C739.8,672.3 744.7,661.3 747.0,654.0C749.3,646.7 751.5,645.0 751.0,641.0C750.5,637.0 748.8,632.0 744.0,630.0C739.2,628.0 727.8,628.7 722.0,629.0C716.2,629.3 715.8,632.3 709.0,632.0C702.2,631.7 689.7,626.2 681.0,627.0C672.3,627.8 662.3,634.2 657.0,637.0C651.7,639.8 655.7,640.5 649.0,644.0C642.3,647.5 626.3,657.2 617.0,658.0C607.7,658.8 602.3,655.2 593.0,649.0C583.7,642.8 570.2,631.0 561.0,621.0C551.8,611.0 543.0,596.7 538.0,589.0C533.0,581.3 529.8,580.5 531.0,575.0C532.2,569.5 543.0,562.2 545.0,556.0C547.0,549.8 546.5,544.8 543.0,538.0C539.5,531.2 532.5,521.2 524.0,515.0C515.5,508.8 500.3,505.7 492.0,501.0C483.7,496.3 480.8,493.8 474.0,487.0C467.2,480.2 455.7,467.7 451.0,460.0C446.3,452.3 448.3,444.5 446.0,441.0C443.7,437.5 441.2,437.2 437.0,439.0C432.8,440.8 426.3,445.0 421.0,452.0C415.7,459.0 406.7,471.8 405.0,481.0C403.3,490.2 408.0,496.8 411.0,507.0C414.0,517.2 422.3,532.2 423.0,542.0C423.7,551.8 425.7,561.2 415.0,566.0C404.3,570.8 372.8,572.7 359.0,571.0C345.2,569.3 336.2,565.5 332.0,556.0C327.8,546.5 334.7,523.3 334.0,514.0C333.3,504.7 334.7,503.2 328.0,500.0C321.3,496.8 305.5,493.8 294.0,495.0C282.5,496.2 286.3,499.5 259.0,507.0C231.7,514.5 173.2,528.7 130.0,540.0C86.8,551.3 21.7,587.0 0.0,575.0C-21.7,563.0 -6.7,488.8 0.0,468.0Z" fill="#005fac" fill-opacity="0.77"/>
<pattern id="hp" width="14" height="8" patternUnits="userSpaceOnUse"><path d="M1,2.500h4.500M8,6.500h4.500" stroke="#1561a4" stroke-width="1" stroke-opacity=".3"/></pattern>
<g clip-path="url(#bc)"><path d="M330.0,270.0C365.0,256.7 418.3,257.5 480.0,250.0C541.7,242.5 630.0,221.7 700.0,225.0C770.0,228.3 850.0,255.8 900.0,270.0C950.0,284.2 966.7,316.7 1000.0,310.0C1033.3,303.3 1058.3,252.5 1100.0,230.0C1141.7,207.5 1200.0,172.5 1250.0,175.0C1300.0,177.5 1350.0,223.3 1400.0,245.0C1450.0,266.7 1505.0,288.3 1550.0,305.0C1595.0,321.7 1645.0,320.8 1670.0,345.0C1695.0,369.2 1688.3,424.2 1700.0,450.0C1711.7,475.8 1756.7,486.7 1740.0,500.0C1723.3,513.3 1648.3,522.5 1600.0,530.0C1551.7,537.5 1500.0,542.5 1450.0,545.0C1400.0,547.5 1350.0,535.8 1300.0,545.0C1250.0,554.2 1191.7,577.5 1150.0,600.0C1108.3,622.5 1091.7,663.3 1050.0,680.0C1008.3,696.7 948.3,680.0 900.0,700.0C851.7,720.0 786.7,808.3 760.0,800.0C733.3,791.7 766.7,678.3 740.0,650.0C713.3,621.7 636.7,651.7 600.0,630.0C563.3,608.3 545.0,553.3 520.0,520.0C495.0,486.7 486.7,446.7 450.0,430.0C413.3,413.3 330.0,436.7 300.0,420.0C270.0,403.3 265.0,355.0 270.0,330.0C275.0,305.0 295.0,283.3 330.0,270.0Z" fill="url(#hp)"/></g>
<path d="M1258,213L1263,242L1297,261L1328,266L1331,290L1360,329L1364,348L1345,382L1360,402L1374,435L1403,421L1427,431L1461,406L1481,382L1495,359" fill="none" stroke="#1c5f9c" stroke-opacity=".4" stroke-width="1.500" stroke-linejoin="round"/>
<g font-family="'Liberation Sans',sans-serif" font-size="9.200" font-style="italic" fill="#245f8e" fill-opacity=".75" text-anchor="middle">
<text x="1640.500" y="320.500">Consolidated</text><text x="1640.500" y="331">Farming</text><text x="1640.500" y="341.500">Ltd. Kafue</text><text x="1640.500" y="352">Sugar</text>
<text x="1062" y="228" font-size="10">Blue Lagoon</text><text x="1062" y="240" font-size="10">National</text><text x="1062" y="252" font-size="10">Park</text>
</g>

<g fill="#dad23e" stroke="#4d4a14" stroke-width="0.9">
<circle cx="866.8" cy="261.7" r="3.6"/>
<circle cx="866.9" cy="250.8" r="3.6"/>
<circle cx="864.8" cy="252.4" r="3.6"/>
<circle cx="869.3" cy="261.9" r="3.6"/>
<circle cx="869.1" cy="260.7" r="3.6"/>
<circle cx="870.6" cy="250.5" r="3.6"/>
<circle cx="880.7" cy="259.4" r="3.6"/>
<circle cx="861.7" cy="253.7" r="3.6"/>
<circle cx="864.0" cy="257.1" r="3.6"/>
<circle cx="876.1" cy="270.9" r="3.6"/>
<circle cx="877.2" cy="263.3" r="3.6"/>
<circle cx="862.3" cy="255.1" r="3.6"/>
<circle cx="877.2" cy="263.9" r="3.6"/>
<circle cx="875.6" cy="261.8" r="3.6"/>
<circle cx="876.7" cy="266.6" r="3.6"/>
<circle cx="878.7" cy="258.0" r="3.6"/>
<circle cx="879.5" cy="267.4" r="3.6"/>
<circle cx="870.1" cy="251.3" r="3.6"/>
<circle cx="866.5" cy="254.3" r="3.6"/>
<circle cx="873.0" cy="264.5" r="3.6"/>
<circle cx="880.8" cy="269.3" r="3.6"/>
<circle cx="875.6" cy="260.9" r="3.6"/>
<circle cx="873.7" cy="271.2" r="3.6"/>
<circle cx="870.3" cy="269.6" r="3.6"/>
<circle cx="868.3" cy="269.7" r="3.6"/>
<circle cx="872.0" cy="255.7" r="3.6"/>
<circle cx="881.4" cy="266.7" r="3.6"/>
<circle cx="873.7" cy="278.1" r="3.6"/>
<circle cx="881.9" cy="273.1" r="3.6"/>
<circle cx="893.3" cy="296.7" r="3.6"/>
<circle cx="882.2" cy="286.7" r="3.6"/>
<circle cx="899.0" cy="293.0" r="3.6"/>
<circle cx="875.2" cy="282.6" r="3.6"/>
<circle cx="880.5" cy="274.3" r="3.6"/>
<circle cx="889.5" cy="269.8" r="3.6"/>
<circle cx="878.9" cy="279.3" r="3.6"/>
<circle cx="895.7" cy="268.5" r="3.6"/>
<circle cx="899.6" cy="282.0" r="3.6"/>
<circle cx="884.1" cy="295.4" r="3.6"/>
<circle cx="887.8" cy="292.7" r="3.6"/>
<circle cx="888.7" cy="278.0" r="3.6"/>
<circle cx="890.5" cy="287.2" r="3.6"/>
<circle cx="881.2" cy="276.7" r="3.6"/>
<circle cx="876.5" cy="271.6" r="3.6"/>
<circle cx="881.1" cy="270.5" r="3.6"/>
<circle cx="898.8" cy="290.4" r="3.6"/>
<circle cx="887.0" cy="274.1" r="3.6"/>
<circle cx="869.2" cy="274.6" r="3.6"/>
<circle cx="890.3" cy="279.5" r="3.6"/>
<circle cx="883.0" cy="270.2" r="3.6"/>
<circle cx="895.9" cy="291.9" r="3.6"/>
<circle cx="901.4" cy="292.4" r="3.6"/>
<circle cx="884.5" cy="288.0" r="3.6"/>
<circle cx="893.5" cy="297.5" r="3.6"/>
<circle cx="886.2" cy="274.4" r="3.6"/>
<circle cx="902.6" cy="282.8" r="3.6"/>
<circle cx="885.8" cy="280.9" r="3.6"/>
<circle cx="892.9" cy="297.6" r="3.6"/>
<circle cx="895.4" cy="289.7" r="3.6"/>
<circle cx="890.3" cy="282.2" r="3.6"/>
<circle cx="880.1" cy="269.3" r="3.6"/>
<circle cx="888.0" cy="290.9" r="3.6"/>
<circle cx="886.7" cy="303.2" r="3.6"/>
<circle cx="886.2" cy="279.7" r="3.6"/>
<circle cx="882.0" cy="276.9" r="3.6"/>
<circle cx="893.8" cy="294.1" r="3.6"/>
<circle cx="891.3" cy="286.2" r="3.6"/>
<circle cx="884.5" cy="290.6" r="3.6"/>
<circle cx="897.5" cy="286.8" r="3.6"/>
<circle cx="901.3" cy="289.0" r="3.6"/>
<circle cx="903.9" cy="293.1" r="3.6"/>
<circle cx="898.6" cy="293.3" r="3.6"/>
<circle cx="876.8" cy="278.7" r="3.6"/>
<circle cx="892.0" cy="296.9" r="3.6"/>
<circle cx="901.1" cy="292.5" r="3.6"/>
<circle cx="889.7" cy="284.0" r="3.6"/>
<circle cx="901.7" cy="291.1" r="3.6"/>
<circle cx="908.2" cy="288.4" r="3.6"/>
<circle cx="896.1" cy="292.9" r="3.6"/>
<circle cx="885.5" cy="278.4" r="3.6"/>
<circle cx="886.2" cy="273.9" r="3.6"/>
<circle cx="902.2" cy="292.2" r="3.6"/>
<circle cx="886.1" cy="286.7" r="3.6"/>
<circle cx="904.0" cy="289.1" r="3.6"/>
<circle cx="884.6" cy="286.8" r="3.6"/>
<circle cx="873.6" cy="279.8" r="3.6"/>
<circle cx="908.9" cy="290.4" r="3.6"/>
<circle cx="916.6" cy="304.2" r="3.6"/>
<circle cx="912.0" cy="305.6" r="3.6"/>
<circle cx="914.2" cy="306.7" r="3.6"/>
<circle cx="923.5" cy="304.1" r="3.6"/>
<circle cx="914.3" cy="313.7" r="3.6"/>
<circle cx="918.9" cy="301.1" r="3.6"/>
<circle cx="921.6" cy="303.4" r="3.6"/>
<circle cx="904.8" cy="310.3" r="3.6"/>
<circle cx="918.6" cy="315.5" r="3.6"/>
<circle cx="905.5" cy="313.5" r="3.6"/>
<circle cx="899.9" cy="301.4" r="3.6"/>
<circle cx="900.4" cy="296.1" r="3.6"/>
<circle cx="911.5" cy="307.9" r="3.6"/>
<circle cx="901.3" cy="294.2" r="3.6"/>
<circle cx="892.2" cy="304.2" r="3.6"/>
<circle cx="900.0" cy="302.8" r="3.6"/>
<circle cx="904.0" cy="313.0" r="3.6"/>
<circle cx="907.1" cy="292.8" r="3.6"/>
<circle cx="907.3" cy="303.4" r="3.6"/>
<circle cx="913.1" cy="315.3" r="3.6"/>
<circle cx="906.8" cy="307.6" r="3.6"/>
<circle cx="916.1" cy="305.4" r="3.6"/>
<circle cx="918.6" cy="314.8" r="3.6"/>
<circle cx="901.3" cy="296.4" r="3.6"/>
<circle cx="920.0" cy="310.6" r="3.6"/>
<circle cx="902.2" cy="309.2" r="3.6"/>
<circle cx="902.7" cy="307.7" r="3.6"/>
<circle cx="913.3" cy="304.9" r="3.6"/>
<circle cx="899.6" cy="292.2" r="3.6"/>
<circle cx="894.4" cy="301.1" r="3.6"/>
<circle cx="914.8" cy="320.0" r="3.6"/>
<circle cx="896.0" cy="297.9" r="3.6"/>
<circle cx="914.1" cy="290.1" r="3.6"/>
<circle cx="903.4" cy="304.6" r="3.6"/>
<circle cx="903.3" cy="301.6" r="3.6"/>
<circle cx="899.6" cy="297.2" r="3.6"/>
<circle cx="904.9" cy="299.7" r="3.6"/>
<circle cx="911.2" cy="307.3" r="3.6"/>
<circle cx="898.7" cy="294.6" r="3.6"/>
<circle cx="919.8" cy="306.3" r="3.6"/>
<circle cx="908.9" cy="305.8" r="3.6"/>
<circle cx="924.7" cy="306.7" r="3.6"/>
<circle cx="925.0" cy="307.9" r="3.6"/>
<circle cx="913.1" cy="312.6" r="3.6"/>
<circle cx="919.9" cy="308.2" r="3.6"/>
<circle cx="910.0" cy="301.9" r="3.6"/>
<circle cx="897.0" cy="304.5" r="3.6"/>
<circle cx="904.6" cy="300.8" r="3.6"/>
<circle cx="915.4" cy="315.3" r="3.6"/>
<circle cx="906.6" cy="301.0" r="3.6"/>
<circle cx="909.5" cy="307.5" r="3.6"/>
<circle cx="894.6" cy="311.2" r="3.6"/>
<circle cx="916.1" cy="308.8" r="3.6"/>
<circle cx="906.5" cy="300.4" r="3.6"/>
<circle cx="912.9" cy="296.7" r="3.6"/>
<circle cx="903.8" cy="297.7" r="3.6"/>
<circle cx="902.8" cy="304.2" r="3.6"/>
<circle cx="896.2" cy="299.0" r="3.6"/>
<circle cx="907.3" cy="293.2" r="3.6"/>
<circle cx="919.6" cy="304.2" r="3.6"/>
<circle cx="925.1" cy="309.9" r="3.6"/>
<circle cx="975.3" cy="330.4" r="3.6"/>
<circle cx="956.0" cy="331.5" r="3.6"/>
<circle cx="968.9" cy="317.4" r="3.6"/>
<circle cx="966.3" cy="327.6" r="3.6"/>
<circle cx="946.7" cy="324.5" r="3.6"/>
<circle cx="966.6" cy="313.1" r="3.6"/>
<circle cx="958.3" cy="320.3" r="3.6"/>
<circle cx="927.0" cy="319.0" r="3.6"/>
<circle cx="927.8" cy="319.2" r="3.6"/>
<circle cx="955.8" cy="315.2" r="3.6"/>
<circle cx="947.6" cy="329.5" r="3.6"/>
<circle cx="963.7" cy="315.8" r="3.6"/>
<circle cx="957.4" cy="329.9" r="3.6"/>
<circle cx="937.4" cy="321.4" r="3.6"/>
<circle cx="963.5" cy="325.3" r="3.6"/>
<circle cx="974.9" cy="319.5" r="3.6"/>
<circle cx="947.2" cy="315.6" r="3.6"/>
<circle cx="955.6" cy="319.7" r="3.6"/>
<circle cx="935.1" cy="316.8" r="3.6"/>
<circle cx="940.3" cy="317.2" r="3.6"/>
<circle cx="930.6" cy="315.1" r="3.6"/>
<circle cx="958.8" cy="319.7" r="3.6"/>
<circle cx="952.4" cy="314.3" r="3.6"/>
<circle cx="929.7" cy="318.9" r="3.6"/>
<circle cx="973.6" cy="325.7" r="3.6"/>
<circle cx="942.9" cy="324.8" r="3.6"/>
<circle cx="948.7" cy="319.3" r="3.6"/>
<circle cx="974.0" cy="326.6" r="3.6"/>
<circle cx="934.1" cy="303.1" r="3.6"/>
<circle cx="929.3" cy="318.7" r="3.6"/>
<circle cx="968.4" cy="322.5" r="3.6"/>
<circle cx="970.2" cy="322.8" r="3.6"/>
<circle cx="926.5" cy="309.2" r="3.6"/>
<circle cx="940.6" cy="321.4" r="3.6"/>
<circle cx="940.7" cy="318.3" r="3.6"/>
<circle cx="961.6" cy="323.8" r="3.6"/>
<circle cx="968.5" cy="320.9" r="3.6"/>
<circle cx="941.4" cy="314.4" r="3.6"/>
<circle cx="975.0" cy="320.5" r="3.6"/>
<circle cx="947.0" cy="319.1" r="3.6"/>
<circle cx="928.5" cy="318.0" r="3.6"/>
<circle cx="973.0" cy="324.6" r="3.6"/>
<circle cx="951.6" cy="322.3" r="3.6"/>
<circle cx="969.4" cy="331.5" r="3.6"/>
<circle cx="952.4" cy="331.9" r="3.6"/>
<circle cx="952.0" cy="320.1" r="3.6"/>
<circle cx="964.2" cy="313.9" r="3.6"/>
<circle cx="957.8" cy="321.2" r="3.6"/>
<circle cx="971.8" cy="328.8" r="3.6"/>
<circle cx="945.2" cy="316.3" r="3.6"/>
<circle cx="976.3" cy="324.7" r="3.6"/>
<circle cx="940.5" cy="312.8" r="3.6"/>
<circle cx="933.9" cy="318.8" r="3.6"/>
<circle cx="971.1" cy="320.3" r="3.6"/>
<circle cx="969.1" cy="330.0" r="3.6"/>
<circle cx="932.5" cy="317.4" r="3.6"/>
<circle cx="942.1" cy="321.9" r="3.6"/>
<circle cx="938.5" cy="307.1" r="3.6"/>
<circle cx="964.3" cy="317.9" r="3.6"/>
<circle cx="952.9" cy="316.9" r="3.6"/>
<circle cx="932.8" cy="314.0" r="3.6"/>
<circle cx="932.8" cy="308.6" r="3.6"/>
<circle cx="969.2" cy="324.8" r="3.6"/>
<circle cx="939.4" cy="313.0" r="3.6"/>
<circle cx="968.7" cy="330.4" r="3.6"/>
<circle cx="924.9" cy="323.6" r="3.6"/>
<circle cx="971.6" cy="317.0" r="3.6"/>
<circle cx="929.3" cy="305.9" r="3.6"/>
<circle cx="961.1" cy="331.5" r="3.6"/>
<circle cx="937.5" cy="320.0" r="3.6"/>
<circle cx="948.7" cy="314.2" r="3.6"/>
<circle cx="960.0" cy="316.3" r="3.6"/>
<circle cx="948.0" cy="318.1" r="3.6"/>
<circle cx="967.5" cy="324.9" r="3.6"/>
<circle cx="958.3" cy="320.7" r="3.6"/>
<circle cx="936.8" cy="311.7" r="3.6"/>
<circle cx="930.3" cy="322.2" r="3.6"/>
<circle cx="955.5" cy="318.1" r="3.6"/>
<circle cx="954.2" cy="325.6" r="3.6"/>
<circle cx="945.9" cy="327.0" r="3.6"/>
<circle cx="970.2" cy="320.0" r="3.6"/>
<circle cx="935.1" cy="325.5" r="3.6"/>
<circle cx="939.4" cy="324.4" r="3.6"/>
<circle cx="960.1" cy="318.2" r="3.6"/>
<circle cx="957.2" cy="325.0" r="3.6"/>
<circle cx="928.7" cy="312.7" r="3.6"/>
<circle cx="961.2" cy="325.5" r="3.6"/>
<circle cx="962.7" cy="318.7" r="3.6"/>
<circle cx="977.0" cy="321.5" r="3.6"/>
<circle cx="938.9" cy="319.5" r="3.6"/>
<circle cx="938.0" cy="323.9" r="3.6"/>
<circle cx="935.8" cy="318.1" r="3.6"/>
<circle cx="957.4" cy="324.5" r="3.6"/>
<circle cx="948.3" cy="323.1" r="3.6"/>
<circle cx="931.9" cy="318.3" r="3.6"/>
<circle cx="940.9" cy="327.5" r="3.6"/>
<circle cx="959.1" cy="334.8" r="3.6"/>
<circle cx="944.0" cy="324.0" r="3.6"/>
<circle cx="961.2" cy="330.4" r="3.6"/>
<circle cx="945.6" cy="315.6" r="3.6"/>
<circle cx="978.4" cy="331.7" r="3.6"/>
<circle cx="984.5" cy="332.2" r="3.6"/>
<circle cx="1005.8" cy="339.5" r="3.6"/>
<circle cx="997.8" cy="337.6" r="3.6"/>
<circle cx="979.0" cy="320.5" r="3.6"/>
<circle cx="1004.2" cy="339.4" r="3.6"/>
<circle cx="1000.8" cy="342.4" r="3.6"/>
<circle cx="999.6" cy="335.5" r="3.6"/>
<circle cx="972.7" cy="337.5" r="3.6"/>
<circle cx="979.5" cy="326.7" r="3.6"/>
<circle cx="990.5" cy="329.2" r="3.6"/>
<circle cx="997.0" cy="333.5" r="3.6"/>
<circle cx="985.0" cy="329.1" r="3.6"/>
<circle cx="994.4" cy="341.1" r="3.6"/>
<circle cx="1002.8" cy="341.3" r="3.6"/>
<circle cx="983.1" cy="343.9" r="3.6"/>
<circle cx="988.8" cy="330.7" r="3.6"/>
<circle cx="988.5" cy="334.4" r="3.6"/>
<circle cx="997.1" cy="333.4" r="3.6"/>
<circle cx="999.6" cy="330.8" r="3.6"/>
<circle cx="989.7" cy="323.8" r="3.6"/>
<circle cx="978.8" cy="330.1" r="3.6"/>
<circle cx="982.3" cy="329.6" r="3.6"/>
<circle cx="999.2" cy="326.8" r="3.6"/>
<circle cx="1000.5" cy="340.8" r="3.6"/>
<circle cx="976.5" cy="331.9" r="3.6"/>
<circle cx="999.0" cy="330.6" r="3.6"/>
<circle cx="988.7" cy="323.7" r="3.6"/>
<circle cx="994.2" cy="338.6" r="3.6"/>
<circle cx="976.5" cy="328.6" r="3.6"/>
<circle cx="997.2" cy="326.9" r="3.6"/>
<circle cx="982.4" cy="328.2" r="3.6"/>
<circle cx="976.0" cy="331.8" r="3.6"/>
<circle cx="994.0" cy="316.8" r="3.6"/>
<circle cx="993.2" cy="334.0" r="3.6"/>
<circle cx="994.1" cy="336.0" r="3.6"/>
<circle cx="985.0" cy="334.4" r="3.6"/>
<circle cx="1001.8" cy="341.5" r="3.6"/>
<circle cx="980.5" cy="333.8" r="3.6"/>
<circle cx="990.4" cy="337.1" r="3.6"/>
<circle cx="1004.0" cy="332.4" r="3.6"/>
<circle cx="997.8" cy="337.5" r="3.6"/>
<circle cx="993.9" cy="329.6" r="3.6"/>
<circle cx="986.3" cy="332.5" r="3.6"/>
<circle cx="984.2" cy="321.2" r="3.6"/>
<circle cx="979.4" cy="332.6" r="3.6"/>
<circle cx="996.6" cy="336.3" r="3.6"/>
<circle cx="978.5" cy="328.8" r="3.6"/>
<circle cx="976.1" cy="330.7" r="3.6"/>
<circle cx="992.1" cy="330.4" r="3.6"/>
<circle cx="979.3" cy="324.5" r="3.6"/>
<circle cx="989.7" cy="325.4" r="3.6"/>
<circle cx="986.0" cy="324.0" r="3.6"/>
<circle cx="978.5" cy="340.9" r="3.6"/>
<circle cx="987.6" cy="333.7" r="3.6"/>
<circle cx="976.5" cy="339.6" r="3.6"/>
<circle cx="985.6" cy="332.3" r="3.6"/>
<circle cx="1003.9" cy="333.4" r="3.6"/>
<circle cx="977.9" cy="317.4" r="3.6"/>
<circle cx="1001.7" cy="343.9" r="3.6"/>
<circle cx="1006.9" cy="324.0" r="3.6"/>
<circle cx="991.2" cy="316.1" r="3.6"/>
<circle cx="990.1" cy="324.0" r="3.6"/>
<circle cx="1031.3" cy="308.1" r="3.6"/>
<circle cx="1036.3" cy="316.9" r="3.6"/>
<circle cx="1007.3" cy="345.2" r="3.6"/>
<circle cx="1014.5" cy="303.9" r="3.6"/>
<circle cx="1004.6" cy="337.3" r="3.6"/>
<circle cx="1016.9" cy="337.3" r="3.6"/>
<circle cx="1009.0" cy="333.1" r="3.6"/>
<circle cx="1013.4" cy="319.6" r="3.6"/>
<circle cx="1000.7" cy="334.3" r="3.6"/>
<circle cx="988.4" cy="329.6" r="3.6"/>
<circle cx="1002.2" cy="341.5" r="3.6"/>
<circle cx="1007.2" cy="312.2" r="3.6"/>
<circle cx="1001.9" cy="320.7" r="3.6"/>
<circle cx="1006.6" cy="324.0" r="3.6"/>
<circle cx="1023.7" cy="334.3" r="3.6"/>
<circle cx="1019.3" cy="321.1" r="3.6"/>
<circle cx="1019.2" cy="309.8" r="3.6"/>
<circle cx="1017.9" cy="326.4" r="3.6"/>
<circle cx="1020.8" cy="330.6" r="3.6"/>
<circle cx="1026.2" cy="331.6" r="3.6"/>
<circle cx="997.7" cy="339.9" r="3.6"/>
<circle cx="1024.4" cy="329.7" r="3.6"/>
<circle cx="1014.8" cy="331.4" r="3.6"/>
<circle cx="1037.6" cy="322.7" r="3.6"/>
<circle cx="1037.1" cy="313.8" r="3.6"/>
<circle cx="1029.4" cy="339.5" r="3.6"/>
<circle cx="1004.5" cy="343.2" r="3.6"/>
<circle cx="997.3" cy="328.1" r="3.6"/>
<circle cx="1008.5" cy="340.1" r="3.6"/>
<circle cx="1031.8" cy="316.0" r="3.6"/>
<circle cx="1030.6" cy="309.3" r="3.6"/>
<circle cx="1014.8" cy="322.0" r="3.6"/>
<circle cx="1018.7" cy="337.9" r="3.6"/>
<circle cx="1023.2" cy="321.6" r="3.6"/>
<circle cx="1032.0" cy="318.5" r="3.6"/>
<circle cx="1012.7" cy="306.8" r="3.6"/>
<circle cx="1001.2" cy="311.7" r="3.6"/>
<circle cx="1013.4" cy="346.2" r="3.6"/>
<circle cx="1012.0" cy="330.2" r="3.6"/>
<circle cx="1022.6" cy="302.7" r="3.6"/>
<circle cx="1019.1" cy="310.4" r="3.6"/>
<circle cx="1036.5" cy="326.1" r="3.6"/>
<circle cx="989.5" cy="324.1" r="3.6"/>
<circle cx="1012.8" cy="319.3" r="3.6"/>
<circle cx="1004.4" cy="343.4" r="3.6"/>
<circle cx="1011.4" cy="311.2" r="3.6"/>
<circle cx="1031.5" cy="312.5" r="3.6"/>
<circle cx="1020.1" cy="318.9" r="3.6"/>
<circle cx="1017.3" cy="332.0" r="3.6"/>
<circle cx="996.8" cy="326.3" r="3.6"/>
<circle cx="998.5" cy="329.6" r="3.6"/>
<circle cx="1008.6" cy="340.8" r="3.6"/>
<circle cx="1014.8" cy="341.2" r="3.6"/>
<circle cx="1025.6" cy="314.8" r="3.6"/>
<circle cx="1018.8" cy="340.7" r="3.6"/>
<circle cx="1012.9" cy="313.1" r="3.6"/>
<circle cx="1023.2" cy="336.8" r="3.6"/>
<circle cx="1008.9" cy="333.8" r="3.6"/>
<circle cx="1012.2" cy="317.4" r="3.6"/>
<circle cx="1001.6" cy="338.6" r="3.6"/>
<circle cx="1019.9" cy="325.7" r="3.6"/>
<circle cx="997.6" cy="328.8" r="3.6"/>
<circle cx="1019.9" cy="321.7" r="3.6"/>
<circle cx="1009.2" cy="328.5" r="3.6"/>
<circle cx="1026.0" cy="316.3" r="3.6"/>
<circle cx="1004.3" cy="349.1" r="3.6"/>
<circle cx="1011.3" cy="326.7" r="3.6"/>
<circle cx="1011.9" cy="335.4" r="3.6"/>
<circle cx="997.7" cy="329.8" r="3.6"/>
<circle cx="1024.8" cy="325.9" r="3.6"/>
<circle cx="999.8" cy="325.2" r="3.6"/>
<circle cx="1017.7" cy="309.0" r="3.6"/>
<circle cx="1024.0" cy="323.7" r="3.6"/>
<circle cx="1032.3" cy="316.0" r="3.6"/>
<circle cx="1001.5" cy="336.9" r="3.6"/>
<circle cx="1019.0" cy="304.9" r="3.6"/>
<circle cx="1015.3" cy="325.3" r="3.6"/>
<circle cx="1012.3" cy="318.8" r="3.6"/>
<circle cx="1016.2" cy="294.2" r="3.6"/>
<circle cx="1024.2" cy="323.3" r="3.6"/>
<circle cx="1015.3" cy="311.7" r="3.6"/>
<circle cx="1003.7" cy="331.7" r="3.6"/>
<circle cx="1028.8" cy="310.5" r="3.6"/>
<circle cx="1008.5" cy="342.9" r="3.6"/>
<circle cx="1006.5" cy="337.1" r="3.6"/>
<circle cx="1010.8" cy="312.8" r="3.6"/>
<circle cx="1032.2" cy="322.7" r="3.6"/>
<circle cx="1042.6" cy="305.5" r="3.6"/>
<circle cx="1071.3" cy="292.7" r="3.6"/>
<circle cx="1060.2" cy="284.0" r="3.6"/>
<circle cx="1037.9" cy="302.1" r="3.6"/>
<circle cx="1056.3" cy="289.0" r="3.6"/>
<circle cx="1049.6" cy="280.3" r="3.6"/>
<circle cx="1044.6" cy="312.0" r="3.6"/>
<circle cx="1035.1" cy="295.9" r="3.6"/>
<circle cx="1032.1" cy="304.4" r="3.6"/>
<circle cx="1048.7" cy="280.6" r="3.6"/>
<circle cx="1045.3" cy="265.1" r="3.6"/>
<circle cx="1056.0" cy="295.9" r="3.6"/>
<circle cx="1042.0" cy="297.2" r="3.6"/>
<circle cx="1046.1" cy="282.0" r="3.6"/>
<circle cx="1068.9" cy="291.1" r="3.6"/>
<circle cx="1039.8" cy="306.9" r="3.6"/>
<circle cx="1053.5" cy="285.6" r="3.6"/>
<circle cx="1032.5" cy="279.8" r="3.6"/>
<circle cx="1029.2" cy="294.9" r="3.6"/>
<circle cx="1059.0" cy="276.7" r="3.6"/>
<circle cx="1044.1" cy="298.1" r="3.6"/>
<circle cx="1054.5" cy="298.5" r="3.6"/>
<circle cx="1031.7" cy="310.4" r="3.6"/>
<circle cx="1047.6" cy="280.9" r="3.6"/>
<circle cx="1033.3" cy="280.7" r="3.6"/>
<circle cx="1033.5" cy="306.0" r="3.6"/>
<circle cx="1039.6" cy="295.3" r="3.6"/>
<circle cx="1037.6" cy="278.7" r="3.6"/>
<circle cx="1029.4" cy="291.0" r="3.6"/>
<circle cx="1049.7" cy="288.3" r="3.6"/>
<circle cx="1039.7" cy="293.9" r="3.6"/>
<circle cx="1046.3" cy="279.3" r="3.6"/>
<circle cx="1025.4" cy="289.3" r="3.6"/>
<circle cx="1054.5" cy="294.2" r="3.6"/>
<circle cx="1058.3" cy="280.3" r="3.6"/>
<circle cx="1031.2" cy="298.1" r="3.6"/>
<circle cx="1038.9" cy="304.2" r="3.6"/>
<circle cx="1035.5" cy="293.5" r="3.6"/>
<circle cx="1052.3" cy="299.5" r="3.6"/>
<circle cx="1069.4" cy="297.5" r="3.6"/>
<circle cx="1022.3" cy="284.6" r="3.6"/>
<circle cx="1050.8" cy="285.4" r="3.6"/>
<circle cx="1033.0" cy="299.9" r="3.6"/>
<circle cx="1035.2" cy="299.2" r="3.6"/>
<circle cx="1041.5" cy="301.3" r="3.6"/>
<circle cx="1038.0" cy="288.8" r="3.6"/>
<circle cx="1027.3" cy="298.4" r="3.6"/>
<circle cx="1057.2" cy="293.1" r="3.6"/>
<circle cx="1044.9" cy="292.5" r="3.6"/>
<circle cx="1030.0" cy="302.0" r="3.6"/>
<circle cx="1045.0" cy="284.1" r="3.6"/>
<circle cx="1043.7" cy="284.1" r="3.6"/>
<circle cx="1036.5" cy="296.3" r="3.6"/>
<circle cx="1041.5" cy="300.4" r="3.6"/>
<circle cx="1051.1" cy="286.5" r="3.6"/>
<circle cx="1037.0" cy="290.0" r="3.6"/>
<circle cx="1053.7" cy="292.1" r="3.6"/>
<circle cx="1048.7" cy="291.3" r="3.6"/>
<circle cx="1046.5" cy="294.9" r="3.6"/>
<circle cx="1055.9" cy="294.8" r="3.6"/>
<circle cx="1054.9" cy="276.5" r="3.6"/>
<circle cx="1035.7" cy="280.1" r="3.6"/>
<circle cx="1033.9" cy="286.5" r="3.6"/>
<circle cx="1034.2" cy="274.4" r="3.6"/>
<circle cx="1031.5" cy="299.9" r="3.6"/>
<circle cx="1071.6" cy="295.6" r="3.6"/>
<circle cx="1046.5" cy="301.5" r="3.6"/>
<circle cx="1049.4" cy="302.7" r="3.6"/>
<circle cx="1038.6" cy="294.5" r="3.6"/>
<circle cx="1043.3" cy="297.8" r="3.6"/>
<circle cx="1053.1" cy="275.0" r="3.6"/>
<circle cx="1051.2" cy="279.0" r="3.6"/>
<circle cx="1032.1" cy="309.2" r="3.6"/>
<circle cx="1040.8" cy="279.0" r="3.6"/>
<circle cx="1042.6" cy="307.4" r="3.6"/>
<circle cx="1078.8" cy="264.7" r="3.6"/>
<circle cx="1071.2" cy="258.1" r="3.6"/>
<circle cx="1065.2" cy="278.2" r="3.6"/>
<circle cx="1082.1" cy="247.3" r="3.6"/>
<circle cx="1062.7" cy="265.9" r="3.6"/>
<circle cx="1057.7" cy="278.9" r="3.6"/>
<circle cx="1065.3" cy="265.6" r="3.6"/>
<circle cx="1062.0" cy="261.1" r="3.6"/>
<circle cx="1080.4" cy="277.5" r="3.6"/>
<circle cx="1065.6" cy="285.8" r="3.6"/>
<circle cx="1090.6" cy="255.5" r="3.6"/>
<circle cx="1076.9" cy="257.9" r="3.6"/>
<circle cx="1079.7" cy="245.7" r="3.6"/>
<circle cx="1066.7" cy="275.9" r="3.6"/>
<circle cx="1077.8" cy="249.6" r="3.6"/>
<circle cx="1082.8" cy="250.3" r="3.6"/>
<circle cx="1070.8" cy="243.6" r="3.6"/>
<circle cx="1084.9" cy="265.8" r="3.6"/>
<circle cx="1086.9" cy="249.9" r="3.6"/>
<circle cx="1071.1" cy="262.5" r="3.6"/>
<circle cx="1076.3" cy="245.4" r="3.6"/>
<circle cx="1072.7" cy="272.4" r="3.6"/>
<circle cx="1057.7" cy="272.9" r="3.6"/>
<circle cx="1063.4" cy="255.0" r="3.6"/>
<circle cx="1095.4" cy="259.8" r="3.6"/>
<circle cx="1061.0" cy="256.3" r="3.6"/>
<circle cx="1076.9" cy="244.7" r="3.6"/>
<circle cx="1094.2" cy="251.8" r="3.6"/>
<circle cx="1086.0" cy="263.8" r="3.6"/>
<circle cx="1082.3" cy="260.7" r="3.6"/>
<circle cx="1076.2" cy="239.5" r="3.6"/>
<circle cx="1094.1" cy="256.1" r="3.6"/>
<circle cx="1070.8" cy="248.0" r="3.6"/>
<circle cx="1060.8" cy="258.9" r="3.6"/>
<circle cx="1082.8" cy="251.8" r="3.6"/>
<circle cx="1056.9" cy="255.8" r="3.6"/>
<circle cx="1069.3" cy="272.9" r="3.6"/>
<circle cx="1073.4" cy="258.0" r="3.6"/>
<circle cx="1074.8" cy="243.5" r="3.6"/>
<circle cx="1067.1" cy="263.5" r="3.6"/>
<circle cx="1064.2" cy="255.2" r="3.6"/>
<circle cx="1055.1" cy="279.2" r="3.6"/>
<circle cx="1079.8" cy="263.8" r="3.6"/>
<circle cx="1069.5" cy="277.8" r="3.6"/>
<circle cx="1065.9" cy="255.9" r="3.6"/>
<circle cx="1073.7" cy="244.2" r="3.6"/>
<circle cx="1070.4" cy="257.6" r="3.6"/>
<circle cx="1081.9" cy="254.3" r="3.6"/>
<circle cx="1071.0" cy="264.1" r="3.6"/>
<circle cx="1077.2" cy="280.3" r="3.6"/>
<circle cx="1077.7" cy="246.6" r="3.6"/>
<circle cx="1080.6" cy="255.1" r="3.6"/>
<circle cx="1065.7" cy="265.5" r="3.6"/>
<circle cx="1059.6" cy="259.1" r="3.6"/>
<circle cx="1092.8" cy="252.9" r="3.6"/>
<circle cx="1096.1" cy="248.4" r="3.6"/>
<circle cx="1104.4" cy="233.6" r="3.6"/>
<circle cx="1080.4" cy="237.8" r="3.6"/>
<circle cx="1115.2" cy="222.9" r="3.6"/>
<circle cx="1103.7" cy="236.9" r="3.6"/>
<circle cx="1091.2" cy="238.9" r="3.6"/>
<circle cx="1083.1" cy="244.7" r="3.6"/>
<circle cx="1121.3" cy="222.8" r="3.6"/>
<circle cx="1098.2" cy="248.9" r="3.6"/>
<circle cx="1089.7" cy="238.6" r="3.6"/>
<circle cx="1085.3" cy="247.6" r="3.6"/>
<circle cx="1105.4" cy="219.8" r="3.6"/>
<circle cx="1097.3" cy="226.7" r="3.6"/>
<circle cx="1111.9" cy="211.9" r="3.6"/>
<circle cx="1104.0" cy="224.3" r="3.6"/>
<circle cx="1101.7" cy="227.0" r="3.6"/>
<circle cx="1091.4" cy="236.4" r="3.6"/>
<circle cx="1104.4" cy="217.3" r="3.6"/>
<circle cx="1087.6" cy="230.0" r="3.6"/>
<circle cx="1110.8" cy="227.7" r="3.6"/>
<circle cx="1087.1" cy="231.7" r="3.6"/>
<circle cx="1089.1" cy="223.6" r="3.6"/>
<circle cx="1108.4" cy="220.4" r="3.6"/>
<circle cx="1109.3" cy="247.2" r="3.6"/>
<circle cx="1103.9" cy="227.5" r="3.6"/>
<circle cx="1111.2" cy="236.9" r="3.6"/>
<circle cx="1099.2" cy="223.2" r="3.6"/>
<circle cx="1102.2" cy="210.8" r="3.6"/>
<circle cx="1107.2" cy="236.4" r="3.6"/>
<circle cx="1096.9" cy="240.5" r="3.6"/>
<circle cx="1084.4" cy="226.0" r="3.6"/>
<circle cx="1119.2" cy="226.8" r="3.6"/>
<circle cx="1109.2" cy="226.9" r="3.6"/>
<circle cx="1096.2" cy="245.0" r="3.6"/>
<circle cx="1106.2" cy="229.4" r="3.6"/>
<circle cx="1075.9" cy="234.9" r="3.6"/>
<circle cx="1086.5" cy="243.3" r="3.6"/>
<circle cx="1082.2" cy="233.7" r="3.6"/>
<circle cx="1014.6" cy="351.5" r="3.6"/>
<circle cx="1015.5" cy="355.8" r="3.6"/>
<circle cx="1004.4" cy="335.6" r="3.6"/>
<circle cx="1027.4" cy="333.2" r="3.6"/>
<circle cx="1029.9" cy="357.4" r="3.6"/>
<circle cx="1015.6" cy="355.0" r="3.6"/>
<circle cx="1013.7" cy="337.2" r="3.6"/>
<circle cx="1025.7" cy="350.4" r="3.6"/>
<circle cx="985.3" cy="352.8" r="3.6"/>
<circle cx="1006.1" cy="352.1" r="3.6"/>
<circle cx="1014.3" cy="363.9" r="3.6"/>
<circle cx="1015.8" cy="344.6" r="3.6"/>
<circle cx="993.6" cy="342.4" r="3.6"/>
<circle cx="1021.5" cy="346.4" r="3.6"/>
<circle cx="1038.5" cy="353.9" r="3.6"/>
<circle cx="1007.9" cy="355.8" r="3.6"/>
<circle cx="1007.8" cy="345.2" r="3.6"/>
<circle cx="1010.0" cy="341.8" r="3.6"/>
<circle cx="1009.5" cy="352.3" r="3.6"/>
<circle cx="1018.6" cy="364.0" r="3.6"/>
<circle cx="1020.9" cy="352.4" r="3.6"/>
<circle cx="1023.3" cy="366.8" r="3.6"/>
<circle cx="1005.3" cy="358.0" r="3.6"/>
<circle cx="1019.6" cy="345.4" r="3.6"/>
<circle cx="1015.6" cy="366.2" r="3.6"/>
<circle cx="1011.7" cy="338.4" r="3.6"/>
<circle cx="1006.6" cy="364.6" r="3.6"/>
<circle cx="1006.1" cy="333.8" r="3.6"/>
<circle cx="1014.9" cy="355.5" r="3.6"/>
<circle cx="1008.7" cy="333.7" r="3.6"/>
<circle cx="1022.8" cy="357.2" r="3.6"/>
<circle cx="1013.8" cy="361.4" r="3.6"/>
<circle cx="1007.1" cy="347.5" r="3.6"/>
<circle cx="1012.2" cy="341.6" r="3.6"/>
<circle cx="1005.0" cy="360.9" r="3.6"/>
<circle cx="994.2" cy="349.6" r="3.6"/>
<circle cx="996.5" cy="345.7" r="3.6"/>
<circle cx="1015.7" cy="366.1" r="3.6"/>
<circle cx="995.9" cy="341.6" r="3.6"/>
<circle cx="1025.1" cy="351.6" r="3.6"/>
<circle cx="1031.7" cy="355.5" r="3.6"/>
<circle cx="1011.5" cy="340.3" r="3.6"/>
<circle cx="1022.8" cy="354.2" r="3.6"/>
<circle cx="1022.4" cy="363.3" r="3.6"/>
<circle cx="1015.9" cy="343.6" r="3.6"/>
<circle cx="1010.2" cy="349.5" r="3.6"/>
<circle cx="1010.2" cy="345.2" r="3.6"/>
<circle cx="1005.9" cy="372.9" r="3.6"/>
<circle cx="1016.8" cy="358.7" r="3.6"/>
<circle cx="1014.4" cy="345.2" r="3.6"/>
<circle cx="984.7" cy="357.2" r="3.6"/>
<circle cx="1015.9" cy="366.2" r="3.6"/>
<circle cx="1008.7" cy="368.3" r="3.6"/>
<circle cx="1012.0" cy="344.3" r="3.6"/>
<circle cx="1022.6" cy="359.4" r="3.6"/>
<circle cx="1003.9" cy="334.4" r="3.6"/>
<circle cx="1030.0" cy="336.0" r="3.6"/>
<circle cx="1016.5" cy="339.3" r="3.6"/>
<circle cx="1008.9" cy="337.2" r="3.6"/>
<circle cx="1009.4" cy="342.7" r="3.6"/>
<circle cx="1024.0" cy="350.6" r="3.6"/>
<circle cx="1021.4" cy="334.6" r="3.6"/>
<circle cx="1024.3" cy="356.6" r="3.6"/>
<circle cx="1010.7" cy="334.0" r="3.6"/>
<circle cx="1005.0" cy="363.9" r="3.6"/>
<circle cx="1003.2" cy="344.5" r="3.6"/>
<circle cx="997.9" cy="357.6" r="3.6"/>
<circle cx="1010.6" cy="349.7" r="3.6"/>
<circle cx="1007.5" cy="340.1" r="3.6"/>
<circle cx="1020.7" cy="339.2" r="3.6"/>
<circle cx="1018.9" cy="331.2" r="3.6"/>
<circle cx="1007.7" cy="357.0" r="3.6"/>
<circle cx="1014.3" cy="359.8" r="3.6"/>
<circle cx="1029.9" cy="355.1" r="3.6"/>
<circle cx="994.5" cy="338.2" r="3.6"/>
<circle cx="1026.1" cy="345.5" r="3.6"/>
<circle cx="995.1" cy="360.6" r="3.6"/>
<circle cx="1011.5" cy="343.4" r="3.6"/>
<circle cx="1011.9" cy="342.3" r="3.6"/>
<circle cx="1012.3" cy="335.6" r="3.6"/>
<circle cx="1018.3" cy="330.1" r="3.6"/>
<circle cx="1017.0" cy="349.1" r="3.6"/>
<circle cx="1020.7" cy="360.1" r="3.6"/>
<circle cx="1021.4" cy="334.9" r="3.6"/>
<circle cx="1007.9" cy="347.6" r="3.6"/>
<circle cx="1024.5" cy="330.8" r="3.6"/>
<circle cx="1023.5" cy="332.6" r="3.6"/>
<circle cx="1000.8" cy="338.3" r="3.6"/>
<circle cx="1029.6" cy="343.3" r="3.6"/>
<circle cx="1033.5" cy="348.1" r="3.6"/>
<circle cx="1023.2" cy="358.6" r="3.6"/>
<circle cx="1036.8" cy="339.2" r="3.6"/>
<circle cx="1005.6" cy="362.0" r="3.6"/>
<circle cx="1011.1" cy="365.2" r="3.6"/>
<circle cx="1015.4" cy="365.3" r="3.6"/>
<circle cx="1029.9" cy="373.5" r="3.6"/>
<circle cx="1021.3" cy="382.6" r="3.6"/>
<circle cx="1023.5" cy="380.1" r="3.6"/>
<circle cx="1027.4" cy="387.6" r="3.6"/>
<circle cx="1022.0" cy="380.1" r="3.6"/>
<circle cx="1021.9" cy="392.9" r="3.6"/>
<circle cx="1026.4" cy="369.9" r="3.6"/>
<circle cx="1018.8" cy="381.4" r="3.6"/>
<circle cx="1031.4" cy="368.9" r="3.6"/>
<circle cx="1033.4" cy="391.8" r="3.6"/>
<circle cx="1022.7" cy="386.7" r="3.6"/>
<circle cx="1036.7" cy="388.8" r="3.6"/>
<circle cx="1030.2" cy="376.0" r="3.6"/>
<circle cx="1020.0" cy="370.9" r="3.6"/>
<circle cx="1027.8" cy="377.0" r="3.6"/>
<circle cx="1034.5" cy="361.8" r="3.6"/>
<circle cx="1036.3" cy="377.1" r="3.6"/>
<circle cx="1025.0" cy="367.6" r="3.6"/>
<circle cx="1032.6" cy="376.3" r="3.6"/>
<circle cx="1025.4" cy="374.9" r="3.6"/>
<circle cx="1034.2" cy="378.2" r="3.6"/>
<circle cx="1031.1" cy="365.5" r="3.6"/>
<circle cx="1031.2" cy="368.0" r="3.6"/>
<circle cx="1019.3" cy="374.6" r="3.6"/>
<circle cx="1028.6" cy="387.0" r="3.6"/>
<circle cx="1033.0" cy="388.0" r="3.6"/>
<circle cx="1036.3" cy="373.0" r="3.6"/>
<circle cx="1022.3" cy="373.8" r="3.6"/>
<circle cx="1026.6" cy="387.7" r="3.6"/>
<circle cx="1028.7" cy="370.6" r="3.6"/>
<circle cx="1026.3" cy="387.1" r="3.6"/>
<circle cx="1028.6" cy="381.5" r="3.6"/>
<circle cx="1023.4" cy="375.6" r="3.6"/>
<circle cx="1022.9" cy="396.0" r="3.6"/>
<circle cx="1020.2" cy="362.8" r="3.6"/>
<circle cx="1018.4" cy="380.9" r="3.6"/>
<circle cx="1021.9" cy="373.4" r="3.6"/>
<circle cx="1033.9" cy="380.9" r="3.6"/>
<circle cx="1026.9" cy="375.4" r="3.6"/>
<circle cx="1031.7" cy="372.6" r="3.6"/>
<circle cx="1020.9" cy="371.1" r="3.6"/>
<circle cx="1031.1" cy="377.5" r="3.6"/>
<circle cx="1020.5" cy="377.2" r="3.6"/>
<circle cx="1016.1" cy="387.7" r="3.6"/>
<circle cx="1017.1" cy="373.2" r="3.6"/>
<circle cx="1030.4" cy="393.6" r="3.6"/>
<circle cx="1029.1" cy="390.4" r="3.6"/>
<circle cx="1042.4" cy="374.9" r="3.6"/>
<circle cx="1051.9" cy="375.8" r="3.6"/>
<circle cx="1037.0" cy="375.0" r="3.6"/>
<circle cx="1032.2" cy="375.5" r="3.6"/>
<circle cx="1015.8" cy="377.0" r="3.6"/>
<circle cx="1022.5" cy="382.2" r="3.6"/>
<circle cx="1033.6" cy="371.9" r="3.6"/>
<circle cx="1023.2" cy="391.0" r="3.6"/>
<circle cx="1040.2" cy="366.5" r="3.6"/>
<circle cx="1037.0" cy="369.2" r="3.6"/>
<circle cx="1033.1" cy="371.8" r="3.6"/>
<circle cx="1033.4" cy="386.1" r="3.6"/>
<circle cx="1034.2" cy="384.1" r="3.6"/>
<circle cx="1026.2" cy="392.3" r="3.6"/>
<circle cx="1026.4" cy="370.8" r="3.6"/>
<circle cx="1025.9" cy="380.4" r="3.6"/>
<circle cx="1032.8" cy="379.1" r="3.6"/>
<circle cx="1033.0" cy="390.9" r="3.6"/>
<circle cx="1032.6" cy="395.3" r="3.6"/>
<circle cx="1033.5" cy="402.2" r="3.6"/>
<circle cx="1042.9" cy="397.2" r="3.6"/>
<circle cx="1037.1" cy="389.1" r="3.6"/>
<circle cx="1034.8" cy="390.4" r="3.6"/>
<circle cx="1043.3" cy="400.7" r="3.6"/>
<circle cx="1028.6" cy="396.1" r="3.6"/>
<circle cx="1029.4" cy="393.4" r="3.6"/>
<circle cx="1031.7" cy="397.6" r="3.6"/>
<circle cx="1037.5" cy="401.8" r="3.6"/>
<circle cx="993.6" cy="429.0" r="3.6"/>
<circle cx="997.0" cy="408.5" r="3.6"/>
<circle cx="999.2" cy="395.2" r="3.6"/>
<circle cx="1000.3" cy="409.0" r="3.6"/>
<circle cx="1000.0" cy="393.2" r="3.6"/>
<circle cx="992.5" cy="437.5" r="3.6"/>
<circle cx="994.1" cy="402.3" r="3.6"/>
<circle cx="992.6" cy="433.3" r="3.6"/>
<circle cx="992.4" cy="430.8" r="3.6"/>
<circle cx="995.4" cy="438.0" r="3.6"/>
<circle cx="1002.3" cy="404.8" r="3.6"/>
<circle cx="1001.3" cy="404.1" r="3.6"/>
<circle cx="995.9" cy="413.6" r="3.6"/>
<circle cx="1001.4" cy="400.6" r="3.6"/>
<circle cx="989.9" cy="437.8" r="3.6"/>
<circle cx="1003.7" cy="397.8" r="3.6"/>
<circle cx="996.2" cy="410.4" r="3.6"/>
<circle cx="992.4" cy="430.7" r="3.6"/>
<circle cx="1000.5" cy="401.4" r="3.6"/>
<circle cx="1003.8" cy="393.4" r="3.6"/>
<circle cx="1001.2" cy="399.0" r="3.6"/>
<circle cx="998.7" cy="403.9" r="3.6"/>
<circle cx="994.9" cy="410.6" r="3.6"/>
<circle cx="1002.8" cy="400.9" r="3.6"/>
<circle cx="996.2" cy="408.7" r="3.6"/>
<circle cx="991.4" cy="436.3" r="3.6"/>
<circle cx="993.9" cy="412.9" r="3.6"/>
<circle cx="997.0" cy="402.6" r="3.6"/>
<circle cx="997.5" cy="409.9" r="3.6"/>
<circle cx="999.3" cy="401.3" r="3.6"/>
<circle cx="1055.0" cy="413.7" r="3.6"/>
<circle cx="1063.1" cy="421.7" r="3.6"/>
<circle cx="1056.1" cy="416.9" r="3.6"/>
<circle cx="1041.3" cy="405.5" r="3.6"/>
<circle cx="1048.7" cy="408.9" r="3.6"/>
<circle cx="1056.9" cy="416.0" r="3.6"/>
<circle cx="1046.1" cy="410.7" r="3.6"/>
<circle cx="1044.0" cy="409.8" r="3.6"/>
<circle cx="1052.2" cy="405.8" r="3.6"/>
<circle cx="1056.0" cy="425.2" r="3.6"/>
<circle cx="1037.2" cy="373.8" r="3.6"/>
<circle cx="1062.3" cy="356.8" r="3.6"/>
<circle cx="1046.3" cy="362.6" r="3.6"/>
<circle cx="1043.3" cy="375.1" r="3.6"/>
<circle cx="1064.2" cy="361.2" r="3.6"/>
<circle cx="1074.0" cy="353.0" r="3.6"/>
<circle cx="1034.3" cy="380.3" r="3.6"/>
<circle cx="1040.9" cy="369.6" r="3.6"/>
<circle cx="1032.7" cy="372.3" r="3.6"/>
<circle cx="1039.6" cy="378.3" r="3.6"/>
<circle cx="1069.1" cy="356.7" r="3.6"/>
<circle cx="1065.6" cy="358.6" r="3.6"/>
<circle cx="1072.3" cy="356.3" r="3.6"/>
<circle cx="1033.0" cy="383.0" r="3.6"/>
<circle cx="1033.4" cy="376.3" r="3.6"/>
<circle cx="1077.0" cy="357.1" r="3.6"/>
<circle cx="1074.8" cy="364.4" r="3.6"/>
<circle cx="1046.9" cy="368.7" r="3.6"/>
<circle cx="1053.8" cy="381.4" r="3.6"/>
<circle cx="1055.5" cy="375.3" r="3.6"/>
<circle cx="1068.4" cy="362.7" r="3.6"/>
<circle cx="1059.3" cy="373.8" r="3.6"/>
<circle cx="1044.4" cy="352.1" r="3.6"/>
<circle cx="1036.2" cy="374.9" r="3.6"/>
<circle cx="1066.1" cy="360.7" r="3.6"/>
<circle cx="1062.6" cy="371.6" r="3.6"/>
<circle cx="1058.9" cy="362.4" r="3.6"/>
<circle cx="1047.4" cy="364.1" r="3.6"/>
<circle cx="1051.7" cy="374.4" r="3.6"/>
<circle cx="1066.4" cy="358.8" r="3.6"/>
<circle cx="1050.9" cy="349.2" r="3.6"/>
<circle cx="1049.8" cy="362.3" r="3.6"/>
<circle cx="1034.0" cy="369.3" r="3.6"/>
<circle cx="1066.1" cy="345.7" r="3.6"/>
<circle cx="1034.4" cy="370.3" r="3.6"/>
<circle cx="1051.1" cy="368.1" r="3.6"/>
<circle cx="1036.9" cy="372.5" r="3.6"/>
<circle cx="1043.8" cy="376.6" r="3.6"/>
<circle cx="1037.2" cy="371.5" r="3.6"/>
<circle cx="1036.0" cy="370.7" r="3.6"/>
<circle cx="1050.1" cy="368.7" r="3.6"/>
<circle cx="1035.9" cy="388.0" r="3.6"/>
<circle cx="1027.4" cy="374.8" r="3.6"/>
<circle cx="1063.6" cy="367.0" r="3.6"/>
<circle cx="1056.3" cy="367.5" r="3.6"/>
<circle cx="1033.3" cy="386.2" r="3.6"/>
<circle cx="1066.0" cy="369.2" r="3.6"/>
<circle cx="1044.1" cy="370.5" r="3.6"/>
<circle cx="1028.9" cy="380.9" r="3.6"/>
<circle cx="1049.7" cy="371.9" r="3.6"/>
<circle cx="1075.3" cy="357.9" r="3.6"/>
<circle cx="1070.8" cy="362.4" r="3.6"/>
<circle cx="1052.6" cy="371.8" r="3.6"/>
<circle cx="1045.5" cy="362.8" r="3.6"/>
<circle cx="1049.2" cy="370.5" r="3.6"/>
<circle cx="1026.8" cy="369.5" r="3.6"/>
<circle cx="1066.8" cy="353.4" r="3.6"/>
<circle cx="1075.3" cy="344.3" r="3.6"/>
<circle cx="1039.2" cy="369.8" r="3.6"/>
<circle cx="1032.4" cy="374.9" r="3.6"/>
<circle cx="1054.3" cy="368.3" r="3.6"/>
<circle cx="1030.5" cy="372.9" r="3.6"/>
<circle cx="1074.0" cy="369.5" r="3.6"/>
<circle cx="1073.4" cy="356.6" r="3.6"/>
<circle cx="1040.7" cy="367.2" r="3.6"/>
<circle cx="1051.7" cy="361.8" r="3.6"/>
<circle cx="1064.4" cy="367.4" r="3.6"/>
<circle cx="1039.5" cy="370.5" r="3.6"/>
<circle cx="1059.0" cy="359.3" r="3.6"/>
<circle cx="1034.6" cy="371.6" r="3.6"/>
<circle cx="1127.1" cy="335.4" r="3.6"/>
<circle cx="1127.5" cy="332.9" r="3.6"/>
<circle cx="1122.0" cy="336.5" r="3.6"/>
<circle cx="1109.0" cy="331.7" r="3.6"/>
<circle cx="1118.9" cy="318.6" r="3.6"/>
<circle cx="1094.1" cy="335.0" r="3.6"/>
<circle cx="1087.1" cy="351.0" r="3.6"/>
<circle cx="1106.2" cy="344.7" r="3.6"/>
<circle cx="1094.5" cy="336.5" r="3.6"/>
<circle cx="1101.4" cy="332.3" r="3.6"/>
<circle cx="1092.6" cy="350.0" r="3.6"/>
<circle cx="1112.1" cy="343.0" r="3.6"/>
<circle cx="1097.0" cy="348.3" r="3.6"/>
<circle cx="1089.1" cy="337.1" r="3.6"/>
<circle cx="1090.1" cy="342.3" r="3.6"/>
<circle cx="1102.7" cy="335.6" r="3.6"/>
<circle cx="1103.2" cy="344.4" r="3.6"/>
<circle cx="1113.8" cy="321.1" r="3.6"/>
<circle cx="1124.6" cy="341.2" r="3.6"/>
<circle cx="1119.3" cy="338.8" r="3.6"/>
<circle cx="1106.0" cy="344.4" r="3.6"/>
<circle cx="1105.6" cy="336.8" r="3.6"/>
<circle cx="1117.9" cy="333.9" r="3.6"/>
<circle cx="1102.2" cy="347.5" r="3.6"/>
<circle cx="1092.0" cy="340.8" r="3.6"/>
<circle cx="1102.1" cy="345.7" r="3.6"/>
<circle cx="1111.9" cy="318.3" r="3.6"/>
<circle cx="1124.1" cy="331.2" r="3.6"/>
<circle cx="1094.7" cy="343.5" r="3.6"/>
<circle cx="1120.6" cy="332.3" r="3.6"/>
<circle cx="1117.5" cy="339.9" r="3.6"/>
<circle cx="1082.3" cy="347.3" r="3.6"/>
<circle cx="1105.4" cy="337.5" r="3.6"/>
<circle cx="1119.7" cy="325.7" r="3.6"/>
<circle cx="1085.8" cy="335.3" r="3.6"/>
<circle cx="1107.7" cy="336.2" r="3.6"/>
<circle cx="1086.4" cy="348.8" r="3.6"/>
<circle cx="1107.0" cy="332.8" r="3.6"/>
<circle cx="1104.7" cy="345.6" r="3.6"/>
<circle cx="1100.5" cy="334.6" r="3.6"/>
<circle cx="1125.7" cy="330.9" r="3.6"/>
<circle cx="1082.3" cy="335.7" r="3.6"/>
<circle cx="1118.5" cy="333.1" r="3.6"/>
<circle cx="1114.5" cy="328.1" r="3.6"/>
<circle cx="1108.2" cy="342.1" r="3.6"/>
<circle cx="1100.3" cy="346.0" r="3.6"/>
<circle cx="1085.2" cy="345.8" r="3.6"/>
<circle cx="1119.4" cy="326.5" r="3.6"/>
<circle cx="1088.5" cy="341.2" r="3.6"/>
<circle cx="1105.6" cy="331.3" r="3.6"/>
<circle cx="1079.2" cy="346.1" r="3.6"/>
<circle cx="1075.5" cy="334.1" r="3.6"/>
<circle cx="1088.5" cy="352.5" r="3.6"/>
<circle cx="1095.0" cy="341.2" r="3.6"/>
<circle cx="1089.1" cy="338.1" r="3.6"/>
<circle cx="1123.9" cy="327.5" r="3.6"/>
<circle cx="1103.8" cy="339.2" r="3.6"/>
<circle cx="1110.8" cy="326.7" r="3.6"/>
<circle cx="1099.3" cy="337.5" r="3.6"/>
<circle cx="1122.9" cy="336.0" r="3.6"/>
<circle cx="1092.9" cy="344.6" r="3.6"/>
<circle cx="1100.9" cy="334.7" r="3.6"/>
<circle cx="1105.1" cy="334.5" r="3.6"/>
<circle cx="1096.7" cy="332.3" r="3.6"/>
<circle cx="1102.1" cy="334.9" r="3.6"/>
<circle cx="1134.2" cy="317.8" r="3.6"/>
<circle cx="1126.2" cy="329.5" r="3.6"/>
<circle cx="1140.0" cy="311.5" r="3.6"/>
<circle cx="1134.5" cy="325.1" r="3.6"/>
<circle cx="1134.8" cy="318.3" r="3.6"/>
<circle cx="1162.0" cy="296.3" r="3.6"/>
<circle cx="1150.4" cy="314.8" r="3.6"/>
<circle cx="1150.8" cy="317.2" r="3.6"/>
<circle cx="1152.1" cy="297.7" r="3.6"/>
<circle cx="1121.9" cy="312.1" r="3.6"/>
<circle cx="1136.3" cy="318.7" r="3.6"/>
<circle cx="1133.5" cy="319.1" r="3.6"/>
<circle cx="1132.8" cy="317.0" r="3.6"/>
<circle cx="1150.1" cy="317.7" r="3.6"/>
<circle cx="1128.1" cy="321.5" r="3.6"/>
<circle cx="1155.0" cy="319.4" r="3.6"/>
<circle cx="1159.9" cy="303.8" r="3.6"/>
<circle cx="1126.0" cy="310.8" r="3.6"/>
<circle cx="1151.9" cy="314.4" r="3.6"/>
<circle cx="1135.8" cy="319.0" r="3.6"/>
<circle cx="1138.8" cy="314.7" r="3.6"/>
<circle cx="1126.8" cy="322.2" r="3.6"/>
<circle cx="1149.9" cy="307.2" r="3.6"/>
<circle cx="1150.5" cy="310.6" r="3.6"/>
<circle cx="1127.9" cy="331.2" r="3.6"/>
<circle cx="1169.0" cy="309.7" r="3.6"/>
<circle cx="1154.0" cy="307.6" r="3.6"/>
<circle cx="1136.4" cy="326.0" r="3.6"/>
<circle cx="1128.3" cy="326.0" r="3.6"/>
<circle cx="1142.4" cy="308.0" r="3.6"/>
<circle cx="1148.4" cy="307.2" r="3.6"/>
<circle cx="1156.9" cy="306.9" r="3.6"/>
<circle cx="1154.6" cy="309.7" r="3.6"/>
<circle cx="1158.8" cy="313.9" r="3.6"/>
<circle cx="1128.8" cy="306.8" r="3.6"/>
<circle cx="1133.7" cy="328.0" r="3.6"/>
<circle cx="1150.2" cy="312.2" r="3.6"/>
<circle cx="1167.9" cy="303.0" r="3.6"/>
<circle cx="1130.3" cy="325.7" r="3.6"/>
<circle cx="1123.7" cy="317.0" r="3.6"/>
<circle cx="1134.3" cy="326.0" r="3.6"/>
<circle cx="1135.4" cy="324.2" r="3.6"/>
<circle cx="1162.6" cy="305.2" r="3.6"/>
<circle cx="1161.0" cy="306.1" r="3.6"/>
<circle cx="1142.1" cy="311.5" r="3.6"/>
<circle cx="1154.9" cy="302.7" r="3.6"/>
<circle cx="1166.4" cy="310.9" r="3.6"/>
<circle cx="1124.6" cy="321.0" r="3.6"/>
<circle cx="1163.8" cy="311.9" r="3.6"/>
<circle cx="1145.6" cy="328.1" r="3.6"/>
<circle cx="1151.6" cy="311.2" r="3.6"/>
<circle cx="1134.0" cy="315.5" r="3.6"/>
<circle cx="1131.1" cy="322.2" r="3.6"/>
<circle cx="1138.9" cy="322.1" r="3.6"/>
<circle cx="1153.6" cy="316.8" r="3.6"/>
<circle cx="1161.9" cy="303.5" r="3.6"/>
<circle cx="1158.8" cy="305.2" r="3.6"/>
<circle cx="1145.2" cy="317.1" r="3.6"/>
<circle cx="1148.7" cy="305.8" r="3.6"/>
<circle cx="1148.9" cy="315.3" r="3.6"/>
<circle cx="1191.1" cy="285.6" r="3.6"/>
<circle cx="1195.0" cy="294.5" r="3.6"/>
<circle cx="1195.0" cy="289.6" r="3.6"/>
<circle cx="1168.6" cy="302.2" r="3.6"/>
<circle cx="1196.1" cy="294.7" r="3.6"/>
<circle cx="1171.2" cy="304.3" r="3.6"/>
<circle cx="1167.9" cy="295.2" r="3.6"/>
<circle cx="1188.0" cy="304.3" r="3.6"/>
<circle cx="1168.8" cy="302.3" r="3.6"/>
<circle cx="1188.4" cy="299.2" r="3.6"/>
<circle cx="1171.4" cy="297.9" r="3.6"/>
<circle cx="1167.3" cy="306.8" r="3.6"/>
<circle cx="1194.1" cy="295.0" r="3.6"/>
<circle cx="1168.3" cy="298.5" r="3.6"/>
<circle cx="1189.3" cy="297.8" r="3.6"/>
<circle cx="1182.3" cy="299.4" r="3.6"/>
<circle cx="1180.9" cy="300.5" r="3.6"/>
<circle cx="1174.9" cy="309.8" r="3.6"/>
<circle cx="1187.6" cy="292.7" r="3.6"/>
<circle cx="1173.6" cy="300.7" r="3.6"/>
<circle cx="1179.1" cy="291.1" r="3.6"/>
<circle cx="1179.0" cy="305.2" r="3.6"/>
<circle cx="1181.7" cy="289.1" r="3.6"/>
<circle cx="1189.4" cy="303.4" r="3.6"/>
<circle cx="1185.8" cy="290.1" r="3.6"/>
<circle cx="1179.3" cy="302.1" r="3.6"/>
<circle cx="1176.0" cy="295.7" r="3.6"/>
<circle cx="1197.7" cy="296.3" r="3.6"/>
<circle cx="1210.3" cy="282.7" r="3.6"/>
<circle cx="1201.4" cy="287.2" r="3.6"/>
<circle cx="1196.8" cy="293.4" r="3.6"/>
<circle cx="1211.6" cy="288.7" r="3.6"/>
<circle cx="1197.5" cy="285.5" r="3.6"/>
<circle cx="1199.8" cy="287.9" r="3.6"/>
<circle cx="1093.9" cy="312.6" r="3.6"/>
<circle cx="1087.2" cy="319.5" r="3.6"/>
<circle cx="1082.5" cy="314.4" r="3.6"/>
<circle cx="1084.4" cy="300.6" r="3.6"/>
<circle cx="1079.7" cy="312.8" r="3.6"/>
<circle cx="1079.8" cy="308.8" r="3.6"/>
<circle cx="1086.5" cy="308.2" r="3.6"/>
<circle cx="1072.4" cy="322.4" r="3.6"/>
<circle cx="1077.9" cy="320.9" r="3.6"/>
<circle cx="1092.9" cy="288.9" r="3.6"/>
<circle cx="1079.6" cy="321.6" r="3.6"/>
<circle cx="1060.7" cy="343.3" r="3.6"/>
<circle cx="1088.0" cy="322.0" r="3.6"/>
<circle cx="1104.3" cy="304.9" r="3.6"/>
<circle cx="1096.2" cy="303.6" r="3.6"/>
<circle cx="1059.3" cy="338.5" r="3.6"/>
<circle cx="1070.0" cy="332.7" r="3.6"/>
<circle cx="1081.4" cy="327.0" r="3.6"/>
<circle cx="1100.5" cy="291.8" r="3.6"/>
<circle cx="1076.5" cy="327.5" r="3.6"/>
<circle cx="1054.0" cy="338.7" r="3.6"/>
<circle cx="1080.9" cy="317.5" r="3.6"/>
<circle cx="1068.1" cy="327.8" r="3.6"/>
<circle cx="1058.8" cy="335.1" r="3.6"/>
<circle cx="1057.3" cy="338.5" r="3.6"/>
<circle cx="1072.0" cy="326.8" r="3.6"/>
<circle cx="1043.9" cy="337.6" r="3.6"/>
<circle cx="1052.6" cy="325.2" r="3.6"/>
<circle cx="1083.1" cy="311.7" r="3.6"/>
<circle cx="1069.7" cy="314.3" r="3.6"/>
<circle cx="1060.0" cy="322.3" r="3.6"/>
<circle cx="1092.3" cy="297.3" r="3.6"/>
<circle cx="1085.0" cy="319.8" r="3.6"/>
<circle cx="1100.2" cy="294.0" r="3.6"/>
<circle cx="1086.1" cy="308.9" r="3.6"/>
<circle cx="1087.5" cy="298.4" r="3.6"/>
<circle cx="1084.3" cy="330.7" r="3.6"/>
<circle cx="1044.3" cy="341.9" r="3.6"/>
<circle cx="1077.3" cy="327.3" r="3.6"/>
<circle cx="1080.1" cy="328.0" r="3.6"/>
<circle cx="1064.8" cy="309.0" r="3.6"/>
<circle cx="1084.6" cy="312.0" r="3.6"/>
<circle cx="1046.6" cy="344.5" r="3.6"/>
<circle cx="1091.8" cy="306.3" r="3.6"/>
<circle cx="1074.2" cy="344.3" r="3.6"/>
<circle cx="1066.4" cy="349.6" r="3.6"/>
<circle cx="1091.1" cy="324.4" r="3.6"/>
<circle cx="1087.0" cy="306.0" r="3.6"/>
<circle cx="1081.8" cy="300.8" r="3.6"/>
<circle cx="1106.7" cy="300.9" r="3.6"/>
<circle cx="1056.1" cy="334.0" r="3.6"/>
<circle cx="1055.4" cy="352.8" r="3.6"/>
<circle cx="1063.9" cy="330.1" r="3.6"/>
<circle cx="1089.2" cy="293.6" r="3.6"/>
<circle cx="1078.8" cy="329.0" r="3.6"/>
<circle cx="1123.6" cy="270.9" r="3.6"/>
<circle cx="1110.9" cy="284.1" r="3.6"/>
<circle cx="1112.6" cy="272.1" r="3.6"/>
<circle cx="1110.2" cy="275.3" r="3.6"/>
<circle cx="1126.6" cy="267.1" r="3.6"/>
<circle cx="1120.5" cy="277.6" r="3.6"/>
<circle cx="1110.9" cy="271.4" r="3.6"/>
<circle cx="1111.9" cy="278.8" r="3.6"/>
<circle cx="1106.9" cy="284.4" r="3.6"/>
<circle cx="1106.3" cy="265.8" r="3.6"/>
<circle cx="1114.9" cy="279.8" r="3.6"/>
<circle cx="1112.4" cy="278.7" r="3.6"/>
<circle cx="1128.9" cy="269.3" r="3.6"/>
<circle cx="1113.7" cy="291.3" r="3.6"/>
<circle cx="1113.6" cy="263.0" r="3.6"/>
<circle cx="1118.2" cy="270.1" r="3.6"/>
<circle cx="1130.3" cy="268.7" r="3.6"/>
<circle cx="1111.2" cy="286.6" r="3.6"/>
<circle cx="1157.5" cy="203.6" r="3.6"/>
<circle cx="1155.7" cy="197.3" r="3.6"/>
<circle cx="1153.8" cy="199.5" r="3.6"/>
<circle cx="1156.6" cy="209.0" r="3.6"/>
<circle cx="1140.6" cy="202.0" r="3.6"/>
<circle cx="1138.1" cy="198.4" r="3.6"/>
<circle cx="1163.6" cy="191.0" r="3.6"/>
<circle cx="1129.1" cy="208.8" r="3.6"/>
<circle cx="1143.4" cy="206.4" r="3.6"/>
<circle cx="1153.8" cy="199.6" r="3.6"/>
<circle cx="1129.2" cy="193.9" r="3.6"/>
<circle cx="1142.3" cy="199.5" r="3.6"/>
<circle cx="1163.3" cy="206.4" r="3.6"/>
<circle cx="1165.5" cy="202.9" r="3.6"/>
<circle cx="1139.3" cy="195.5" r="3.6"/>
<circle cx="1146.0" cy="202.4" r="3.6"/>
<circle cx="1144.7" cy="205.7" r="3.6"/>
<circle cx="1148.6" cy="202.3" r="3.6"/>
<circle cx="1137.1" cy="211.2" r="3.6"/>
<circle cx="1135.7" cy="203.6" r="3.6"/>
<circle cx="1150.5" cy="204.6" r="3.6"/>
<circle cx="1162.2" cy="195.5" r="3.6"/>
<circle cx="1139.2" cy="197.0" r="3.6"/>
<circle cx="1158.9" cy="201.9" r="3.6"/>
<circle cx="1140.7" cy="208.2" r="3.6"/>
<circle cx="1127.6" cy="193.6" r="3.6"/>
<circle cx="1149.4" cy="197.7" r="3.6"/>
<circle cx="1149.4" cy="206.5" r="3.6"/>
<circle cx="1130.2" cy="198.3" r="3.6"/>
<circle cx="1140.0" cy="199.4" r="3.6"/>
<circle cx="1133.9" cy="207.7" r="3.6"/>
<circle cx="1158.6" cy="202.3" r="3.6"/>
<circle cx="1136.8" cy="212.4" r="3.6"/>
<circle cx="1130.0" cy="195.8" r="3.6"/>
<circle cx="1131.0" cy="199.6" r="3.6"/>
<circle cx="1146.1" cy="194.1" r="3.6"/>
<circle cx="1134.5" cy="199.0" r="3.6"/>
<circle cx="1135.6" cy="203.0" r="3.6"/>
<circle cx="1146.0" cy="200.8" r="3.6"/>
<circle cx="1160.9" cy="186.0" r="3.6"/>
<circle cx="1147.2" cy="198.1" r="3.6"/>
<circle cx="1157.2" cy="200.4" r="3.6"/>
<circle cx="1128.3" cy="197.9" r="3.6"/>
<circle cx="1138.0" cy="203.7" r="3.6"/>
<circle cx="1151.5" cy="199.7" r="3.6"/>
<circle cx="1179.6" cy="220.4" r="3.6"/>
<circle cx="1173.7" cy="194.8" r="3.6"/>
<circle cx="1164.5" cy="192.6" r="3.6"/>
<circle cx="1185.7" cy="220.8" r="3.6"/>
<circle cx="1171.0" cy="211.1" r="3.6"/>
<circle cx="1187.4" cy="224.0" r="3.6"/>
<circle cx="1163.5" cy="200.9" r="3.6"/>
<circle cx="1175.6" cy="220.2" r="3.6"/>
<circle cx="1163.2" cy="202.0" r="3.6"/>
<circle cx="1154.4" cy="216.4" r="3.6"/>
<circle cx="1184.5" cy="217.9" r="3.6"/>
<circle cx="1173.1" cy="224.2" r="3.6"/>
<circle cx="1175.4" cy="219.3" r="3.6"/>
<circle cx="1180.4" cy="222.9" r="3.6"/>
<circle cx="1179.8" cy="218.5" r="3.6"/>
<circle cx="1185.8" cy="222.8" r="3.6"/>
<circle cx="1157.1" cy="201.3" r="3.6"/>
<circle cx="1181.1" cy="222.5" r="3.6"/>
<circle cx="1183.1" cy="218.2" r="3.6"/>
<circle cx="1177.1" cy="221.4" r="3.6"/>
<circle cx="1162.5" cy="208.9" r="3.6"/>
<circle cx="1177.5" cy="234.4" r="3.6"/>
<circle cx="1181.5" cy="223.4" r="3.6"/>
<circle cx="1165.4" cy="205.8" r="3.6"/>
<circle cx="1174.6" cy="197.0" r="3.6"/>
<circle cx="1177.2" cy="216.0" r="3.6"/>
<circle cx="1176.6" cy="220.6" r="3.6"/>
<circle cx="1180.9" cy="226.5" r="3.6"/>
<circle cx="1165.1" cy="193.6" r="3.6"/>
<circle cx="1173.7" cy="200.8" r="3.6"/>
<circle cx="1175.3" cy="225.0" r="3.6"/>
<circle cx="1156.0" cy="202.2" r="3.6"/>
<circle cx="1173.3" cy="205.9" r="3.6"/>
<circle cx="1168.4" cy="208.5" r="3.6"/>
<circle cx="1183.0" cy="220.5" r="3.6"/>
<circle cx="1164.4" cy="200.0" r="3.6"/>
<circle cx="1173.4" cy="205.4" r="3.6"/>
<circle cx="1163.2" cy="199.2" r="3.6"/>
<circle cx="1141.3" cy="188.6" r="3.6"/>
<circle cx="1144.2" cy="191.2" r="3.6"/>
<circle cx="1147.0" cy="187.2" r="3.6"/>
<circle cx="1147.3" cy="175.9" r="3.6"/>
<circle cx="1138.6" cy="180.5" r="3.6"/>
<circle cx="1140.5" cy="189.2" r="3.6"/>
<circle cx="1135.2" cy="170.6" r="3.6"/>
<circle cx="1139.3" cy="178.5" r="3.6"/>
<circle cx="1136.9" cy="177.7" r="3.6"/>
<circle cx="1145.1" cy="188.0" r="3.6"/>
<circle cx="1139.1" cy="190.2" r="3.6"/>
<circle cx="1140.5" cy="168.7" r="3.6"/>
<circle cx="1145.8" cy="191.4" r="3.6"/>
<circle cx="1143.9" cy="183.4" r="3.6"/>
<circle cx="1177.1" cy="183.6" r="3.6"/>
<circle cx="1164.7" cy="184.1" r="3.6"/>
<circle cx="1182.1" cy="178.0" r="3.6"/>
<circle cx="1166.1" cy="182.8" r="3.6"/>
<circle cx="1178.9" cy="180.2" r="3.6"/>
<circle cx="1165.6" cy="187.8" r="3.6"/>
<circle cx="1187.1" cy="181.1" r="3.6"/>
<circle cx="1173.9" cy="184.1" r="3.6"/>
<circle cx="1179.0" cy="178.6" r="3.6"/>
<circle cx="1181.4" cy="178.7" r="3.6"/>
<circle cx="1167.5" cy="186.9" r="3.6"/>
<circle cx="1181.2" cy="178.4" r="3.6"/>
<circle cx="1187.0" cy="177.4" r="3.6"/>
<circle cx="1162.5" cy="185.6" r="3.6"/>
<circle cx="1182.4" cy="180.3" r="3.6"/>
<circle cx="1154.2" cy="178.9" r="3.6"/>
<circle cx="1155.9" cy="184.7" r="3.6"/>
<circle cx="1163.2" cy="185.8" r="3.6"/>
<circle cx="1144.1" cy="218.1" r="3.6"/>
<circle cx="1140.5" cy="217.4" r="3.6"/>
<circle cx="1134.9" cy="200.0" r="3.6"/>
<circle cx="1146.9" cy="194.0" r="3.6"/>
<circle cx="1138.0" cy="202.0" r="3.6"/>
<circle cx="1144.3" cy="218.0" r="3.6"/>
<circle cx="1138.3" cy="196.7" r="3.6"/>
<circle cx="1170.4" cy="203.6" r="3.6"/>
<circle cx="1166.9" cy="208.8" r="3.6"/>
<circle cx="1163.9" cy="199.8" r="3.6"/>
<circle cx="1132.6" cy="212.2" r="3.6"/>
<circle cx="1148.5" cy="206.6" r="3.6"/>
<circle cx="1158.5" cy="212.1" r="3.6"/>
<circle cx="1138.8" cy="201.2" r="3.6"/>
<circle cx="1170.9" cy="205.8" r="3.6"/>
<circle cx="1139.4" cy="208.6" r="3.6"/>
<circle cx="1138.0" cy="212.6" r="3.6"/>
<circle cx="1153.3" cy="200.9" r="3.6"/>
<circle cx="1172.0" cy="198.4" r="3.6"/>
<circle cx="1152.4" cy="212.1" r="3.6"/>
<circle cx="1158.9" cy="202.6" r="3.6"/>
<circle cx="1165.4" cy="194.1" r="3.6"/>
<circle cx="1140.3" cy="209.1" r="3.6"/>
<circle cx="1173.4" cy="208.7" r="3.6"/>
<circle cx="1159.6" cy="212.7" r="3.6"/>
<circle cx="1206.8" cy="179.1" r="3.6"/>
<circle cx="1204.3" cy="173.7" r="3.6"/>
<circle cx="1206.1" cy="177.8" r="3.6"/>
<circle cx="1210.9" cy="171.9" r="3.6"/>
<circle cx="1226.9" cy="172.1" r="3.6"/>
<circle cx="1193.4" cy="177.3" r="3.6"/>
<circle cx="1223.2" cy="170.4" r="3.6"/>
<circle cx="1206.2" cy="174.6" r="3.6"/>
<circle cx="1223.1" cy="172.7" r="3.6"/>
<circle cx="1195.6" cy="177.2" r="3.6"/>
<circle cx="1210.6" cy="178.5" r="3.6"/>
<circle cx="1219.5" cy="174.0" r="3.6"/>
<circle cx="1260.4" cy="161.2" r="3.6"/>
<circle cx="1252.5" cy="160.5" r="3.6"/>
<circle cx="1230.6" cy="166.6" r="3.6"/>
<circle cx="1239.5" cy="166.9" r="3.6"/>
<circle cx="1230.9" cy="167.1" r="3.6"/>
<circle cx="1256.5" cy="158.3" r="3.6"/>
<circle cx="1282.0" cy="162.0" r="3.6"/>
<circle cx="1258.0" cy="212.0" r="3.6"/>
<circle cx="1427.0" cy="188.0" r="3.6"/>
<circle cx="992.0" cy="93.0" r="3.6"/>
<circle cx="1121.0" cy="147.0" r="3.6"/>
<circle cx="1124.0" cy="152.0" r="3.6"/>
<circle cx="1128.0" cy="160.0" r="3.6"/>
<circle cx="1175.0" cy="157.0" r="3.6"/>
<circle cx="1098.0" cy="155.0" r="3.6"/>
<circle cx="1078.0" cy="164.0" r="3.6"/>
<circle cx="1068.0" cy="172.0" r="3.6"/>
<circle cx="1066.0" cy="176.0" r="3.6"/>
<circle cx="1054.0" cy="168.0" r="3.6"/>
<circle cx="1041.0" cy="170.0" r="3.6"/>
<circle cx="1031.0" cy="172.0" r="3.6"/>
<circle cx="1036.0" cy="180.0" r="3.6"/>
<circle cx="1020.1" cy="180.2" r="3.6"/>
<circle cx="1014.4" cy="178.9" r="3.6"/>
<circle cx="1017.1" cy="186.9" r="3.6"/>
<circle cx="1013.6" cy="188.1" r="3.6"/>
<circle cx="1015.4" cy="183.3" r="3.6"/>
<circle cx="1019.1" cy="181.5" r="3.6"/>
<circle cx="1022.7" cy="181.3" r="3.6"/>
<circle cx="1023.4" cy="190.9" r="3.6"/>
<circle cx="1018.6" cy="178.5" r="3.6"/>
<circle cx="1018.1" cy="184.8" r="3.6"/>
<circle cx="1011.0" cy="188.1" r="3.6"/>
<circle cx="1021.6" cy="187.4" r="3.6"/>
<circle cx="999.0" cy="192.0" r="3.6"/>
<circle cx="1007.0" cy="200.0" r="3.6"/>
<circle cx="1025.0" cy="177.0" r="3.6"/>
<circle cx="1094.0" cy="190.0" r="3.6"/>
<circle cx="1090.0" cy="194.0" r="3.6"/>
<circle cx="1062.0" cy="188.0" r="3.6"/>
<circle cx="985.0" cy="225.0" r="3.6"/>
<circle cx="975.0" cy="260.0" r="3.6"/>
<circle cx="1009.0" cy="268.0" r="3.6"/>
<circle cx="1015.0" cy="276.0" r="3.6"/>
<circle cx="1002.0" cy="256.0" r="3.6"/>
<circle cx="1107.6" cy="205.2" r="3.6"/>
<circle cx="1112.1" cy="200.6" r="3.6"/>
<circle cx="1099.7" cy="204.6" r="3.6"/>
<circle cx="1101.2" cy="204.3" r="3.6"/>
<circle cx="1114.4" cy="208.3" r="3.6"/>
<circle cx="1108.9" cy="202.5" r="3.6"/>
<circle cx="1102.6" cy="203.4" r="3.6"/>
<circle cx="1104.8" cy="200.1" r="3.6"/>
<circle cx="1115.7" cy="205.3" r="3.6"/>
<circle cx="1108.5" cy="200.2" r="3.6"/>
<circle cx="1216.0" cy="247.9" r="3.6"/>
<circle cx="1203.8" cy="252.2" r="3.6"/>
<circle cx="1221.3" cy="253.3" r="3.6"/>
<circle cx="1215.0" cy="247.0" r="3.6"/>
<circle cx="1197.4" cy="271.7" r="3.6"/>
<circle cx="1213.6" cy="245.8" r="3.6"/>
<circle cx="1202.0" cy="261.6" r="3.6"/>
<circle cx="1227.6" cy="236.8" r="3.6"/>
<circle cx="1189.2" cy="261.3" r="3.6"/>
<circle cx="1218.2" cy="242.5" r="3.6"/>
<circle cx="1191.6" cy="271.2" r="3.6"/>
<circle cx="1209.6" cy="263.0" r="3.6"/>
<circle cx="1214.4" cy="238.4" r="3.6"/>
<circle cx="1192.0" cy="270.9" r="3.6"/>
<circle cx="1207.0" cy="254.8" r="3.6"/>
<circle cx="1186.5" cy="277.0" r="3.6"/>
<circle cx="1228.1" cy="242.4" r="3.6"/>
<circle cx="1213.7" cy="241.5" r="3.6"/>
<circle cx="1221.2" cy="243.0" r="3.6"/>
<circle cx="1190.1" cy="263.0" r="3.6"/>
<circle cx="1184.1" cy="276.5" r="3.6"/>
<circle cx="1209.4" cy="262.2" r="3.6"/>
<circle cx="1155.5" cy="380.7" r="3.6"/>
<circle cx="1157.4" cy="378.3" r="3.6"/>
<circle cx="1156.9" cy="375.5" r="3.6"/>
<circle cx="1161.9" cy="364.8" r="3.6"/>
<circle cx="1156.2" cy="377.9" r="3.6"/>
<circle cx="1148.0" cy="381.2" r="3.6"/>
<circle cx="1156.9" cy="372.5" r="3.6"/>
<circle cx="1161.0" cy="373.9" r="3.6"/>
<circle cx="1141.6" cy="262.4" r="3.6"/>
<circle cx="1168.0" cy="236.4" r="3.6"/>
<circle cx="1162.6" cy="263.5" r="3.6"/>
<circle cx="1147.6" cy="230.5" r="3.6"/>
<circle cx="1184.4" cy="257.9" r="3.6"/>
<circle cx="1141.0" cy="269.3" r="3.6"/>
<circle cx="1177.2" cy="260.0" r="3.6"/>
<circle cx="1164.4" cy="277.8" r="3.6"/>
<circle cx="1161.6" cy="277.2" r="3.6"/>
<circle cx="1130.1" cy="231.2" r="3.6"/>
<circle cx="1167.6" cy="233.2" r="3.6"/>
<circle cx="1175.8" cy="231.8" r="3.6"/>
<circle cx="1151.0" cy="228.3" r="3.6"/>
<circle cx="1174.1" cy="275.4" r="3.6"/>
<circle cx="1179.5" cy="255.4" r="3.6"/>
<circle cx="1177.0" cy="252.1" r="3.6"/>
<circle cx="1160.1" cy="257.7" r="3.6"/>
<circle cx="1112.6" cy="254.7" r="3.6"/>
<circle cx="1132.4" cy="245.8" r="3.6"/>
<circle cx="1176.2" cy="249.5" r="3.6"/>
<circle cx="1118.3" cy="261.0" r="3.6"/>
<circle cx="1125.4" cy="247.7" r="3.6"/>
<circle cx="1153.9" cy="243.2" r="3.6"/>
<circle cx="1115.9" cy="265.8" r="3.6"/>
<circle cx="1179.4" cy="272.9" r="3.6"/>
<circle cx="1116.5" cy="244.1" r="3.6"/>
<circle cx="1133.4" cy="267.7" r="3.6"/>
<circle cx="1120.4" cy="258.4" r="3.6"/>
<circle cx="1117.5" cy="263.5" r="3.6"/>
<circle cx="1158.3" cy="253.2" r="3.6"/>
<circle cx="1146.3" cy="246.4" r="3.6"/>
<circle cx="1159.3" cy="260.9" r="3.6"/>
<circle cx="1185.0" cy="266.0" r="3.6"/>
<circle cx="1178.3" cy="265.0" r="3.6"/>
<circle cx="1179.4" cy="247.8" r="3.6"/>
<circle cx="1181.8" cy="232.8" r="3.6"/>
<circle cx="1187.2" cy="248.5" r="3.6"/>
<circle cx="1167.3" cy="237.2" r="3.6"/>
<circle cx="1133.2" cy="242.9" r="3.6"/>
<circle cx="1135.3" cy="227.7" r="3.6"/>
<circle cx="1145.2" cy="280.9" r="3.6"/>
<circle cx="1162.9" cy="277.9" r="3.6"/>
<circle cx="1172.0" cy="272.2" r="3.6"/>
<circle cx="1131.0" cy="237.0" r="3.6"/>
<circle cx="1142.6" cy="223.3" r="3.6"/>
<circle cx="1073.5" cy="288.2" r="3.6"/>
<circle cx="1128.7" cy="254.7" r="3.6"/>
<circle cx="1116.6" cy="281.5" r="3.6"/>
<circle cx="1126.2" cy="282.7" r="3.6"/>
<circle cx="1097.6" cy="241.3" r="3.6"/>
<circle cx="1121.0" cy="253.8" r="3.6"/>
<circle cx="1105.2" cy="257.0" r="3.6"/>
<circle cx="1098.0" cy="292.9" r="3.6"/>
<circle cx="1067.9" cy="266.9" r="3.6"/>
<circle cx="1107.0" cy="267.3" r="3.6"/>
<circle cx="1130.0" cy="259.5" r="3.6"/>
<circle cx="1128.1" cy="276.4" r="3.6"/>
<circle cx="1072.0" cy="252.2" r="3.6"/>
<circle cx="1075.8" cy="277.9" r="3.6"/>
<circle cx="1090.0" cy="276.2" r="3.6"/>
<circle cx="1110.3" cy="279.8" r="3.6"/>
<circle cx="1115.3" cy="249.9" r="3.6"/>
<circle cx="1110.3" cy="247.6" r="3.6"/>
<circle cx="1106.5" cy="270.5" r="3.6"/>
<circle cx="1107.5" cy="270.9" r="3.6"/>
<circle cx="1110.6" cy="253.2" r="3.6"/>
<circle cx="1094.5" cy="293.2" r="3.6"/>
<circle cx="1110.0" cy="251.4" r="3.6"/>
<circle cx="1116.6" cy="245.7" r="3.6"/>
<circle cx="1063.0" cy="253.2" r="3.6"/>
<circle cx="1087.7" cy="276.4" r="3.6"/>
<circle cx="1090.6" cy="278.7" r="3.6"/>
<circle cx="1082.4" cy="284.9" r="3.6"/>
<circle cx="1073.1" cy="286.3" r="3.6"/>
<circle cx="1119.2" cy="275.2" r="3.6"/>
<circle cx="1067.6" cy="274.6" r="3.6"/>
<circle cx="1102.0" cy="274.7" r="3.6"/>
<circle cx="1069.4" cy="243.6" r="3.6"/>
<circle cx="1085.6" cy="274.1" r="3.6"/>
<circle cx="1100.6" cy="248.4" r="3.6"/>
<circle cx="1132.0" cy="256.8" r="3.6"/>
<circle cx="1112.8" cy="243.3" r="3.6"/>
<circle cx="1118.0" cy="250.1" r="3.6"/>
<circle cx="1084.3" cy="266.4" r="3.6"/>
<circle cx="1063.9" cy="249.9" r="3.6"/>
<circle cx="1118.7" cy="252.1" r="3.6"/>
<circle cx="1085.5" cy="280.9" r="3.6"/>
<circle cx="1072.9" cy="246.6" r="3.6"/>
<circle cx="1072.5" cy="258.1" r="3.6"/>
<circle cx="1084.2" cy="273.5" r="3.6"/>
<circle cx="1096.1" cy="368.3" r="3.6"/>
<circle cx="1037.1" cy="349.7" r="3.6"/>
<circle cx="1147.1" cy="311.1" r="3.6"/>
<circle cx="1034.1" cy="329.5" r="3.6"/>
<circle cx="1046.2" cy="331.4" r="3.6"/>
<circle cx="1129.6" cy="298.4" r="3.6"/>
<circle cx="1046.5" cy="333.2" r="3.6"/>
<circle cx="1054.3" cy="310.8" r="3.6"/>
<circle cx="1091.6" cy="300.6" r="3.6"/>
<circle cx="1039.5" cy="322.5" r="3.6"/>
<circle cx="1095.7" cy="374.3" r="3.6"/>
<circle cx="1107.7" cy="296.4" r="3.6"/>
<circle cx="1061.1" cy="357.0" r="3.6"/>
<circle cx="1108.8" cy="368.3" r="3.6"/>
<circle cx="1103.5" cy="311.6" r="3.6"/>
<circle cx="1053.9" cy="367.8" r="3.6"/>
<circle cx="1067.1" cy="373.2" r="3.6"/>
<circle cx="1094.5" cy="355.8" r="3.6"/>
<circle cx="1040.4" cy="330.8" r="3.6"/>
<circle cx="1074.5" cy="308.5" r="3.6"/>
<circle cx="1122.8" cy="322.5" r="3.6"/>
<circle cx="1097.4" cy="306.2" r="3.6"/>
<circle cx="1102.1" cy="292.2" r="3.6"/>
<circle cx="1095.8" cy="356.6" r="3.6"/>
<circle cx="1105.2" cy="311.1" r="3.6"/>
<circle cx="1099.9" cy="344.4" r="3.6"/>
<circle cx="1121.2" cy="303.1" r="3.6"/>
<circle cx="1133.7" cy="367.2" r="3.6"/>
<circle cx="1081.5" cy="371.2" r="3.6"/>
<circle cx="1055.4" cy="310.4" r="3.6"/>
<circle cx="1113.7" cy="371.1" r="3.6"/>
<circle cx="1035.0" cy="329.5" r="3.6"/>
<circle cx="1049.7" cy="307.2" r="3.6"/>
<circle cx="1134.9" cy="342.5" r="3.6"/>
<circle cx="1161.5" cy="326.2" r="3.6"/>
<circle cx="1096.8" cy="336.0" r="3.6"/>
<circle cx="1162.8" cy="334.3" r="3.6"/>
<circle cx="1060.3" cy="365.1" r="3.6"/>
<circle cx="1093.9" cy="310.4" r="3.6"/>
<circle cx="1164.6" cy="319.0" r="3.6"/>
<circle cx="1087.0" cy="320.9" r="3.6"/>
<circle cx="1082.4" cy="304.6" r="3.6"/>
<circle cx="1115.1" cy="313.2" r="3.6"/>
<circle cx="1093.6" cy="340.6" r="3.6"/>
<circle cx="1129.6" cy="302.4" r="3.6"/>
<circle cx="1063.7" cy="300.8" r="3.6"/>
<circle cx="1049.2" cy="337.0" r="3.6"/>
<circle cx="1111.4" cy="369.8" r="3.6"/>
<circle cx="1053.5" cy="342.7" r="3.6"/>
<circle cx="1093.3" cy="326.8" r="3.6"/>
<circle cx="1154.4" cy="349.6" r="3.6"/>
<circle cx="1067.7" cy="374.8" r="3.6"/>
<circle cx="1087.1" cy="294.6" r="3.6"/>
<circle cx="1151.9" cy="327.8" r="3.6"/>
<circle cx="1104.1" cy="366.4" r="3.6"/>
<circle cx="1143.0" cy="348.8" r="3.6"/>
<circle cx="1101.8" cy="300.5" r="3.6"/>
<circle cx="1064.1" cy="349.2" r="3.6"/>
<circle cx="1112.1" cy="362.1" r="3.6"/>
<circle cx="1155.7" cy="341.3" r="3.6"/>
<circle cx="1028.2" cy="413.4" r="3.6"/>
<circle cx="1035.6" cy="381.6" r="3.6"/>
<circle cx="1046.6" cy="401.7" r="3.6"/>
<circle cx="1077.7" cy="370.1" r="3.6"/>
<circle cx="1084.1" cy="408.7" r="3.6"/>
<circle cx="1057.2" cy="412.0" r="3.6"/>
<circle cx="1057.5" cy="412.5" r="3.6"/>
<circle cx="1080.9" cy="410.3" r="3.6"/>
<circle cx="1088.6" cy="381.3" r="3.6"/>
<circle cx="1053.1" cy="432.1" r="3.6"/>
<circle cx="1030.7" cy="393.6" r="3.6"/>
<circle cx="1033.2" cy="416.5" r="3.6"/>
<circle cx="1046.0" cy="411.4" r="3.6"/>
<circle cx="1086.7" cy="373.9" r="3.6"/>
<circle cx="1032.3" cy="380.0" r="3.6"/>
<circle cx="1023.6" cy="393.4" r="3.6"/>
<circle cx="1052.1" cy="370.4" r="3.6"/>
<circle cx="1068.2" cy="431.0" r="3.6"/>
<circle cx="1067.7" cy="389.9" r="3.6"/>
<circle cx="1080.4" cy="395.6" r="3.6"/>
<circle cx="1027.5" cy="398.7" r="3.6"/>
<circle cx="1026.1" cy="390.9" r="3.6"/>
<circle cx="1056.8" cy="257.1" r="3.6"/>
<circle cx="1046.7" cy="260.2" r="3.6"/>
<circle cx="1053.3" cy="240.0" r="3.6"/>
<circle cx="1027.8" cy="266.1" r="3.6"/>
<circle cx="1045.1" cy="267.5" r="3.6"/>
<circle cx="1058.8" cy="254.4" r="3.6"/>
<circle cx="1041.7" cy="261.3" r="3.6"/>
<circle cx="1028.6" cy="228.5" r="3.6"/>
<circle cx="1026.5" cy="238.3" r="3.6"/>
<circle cx="1022.4" cy="241.8" r="3.6"/>
<circle cx="1041.1" cy="241.0" r="3.6"/>
<circle cx="1035.9" cy="248.9" r="3.6"/>
<circle cx="1019.6" cy="256.2" r="3.6"/>
<circle cx="1049.8" cy="238.1" r="3.6"/>
<circle cx="1054.6" cy="261.4" r="3.6"/>
<circle cx="1032.1" cy="249.6" r="3.6"/>
<circle cx="1043.0" cy="227.6" r="3.6"/>
<circle cx="1022.7" cy="259.6" r="3.6"/>
<circle cx="1195.0" cy="338.0" r="3.6"/>
<circle cx="1110.0" cy="428.0" r="3.6"/>
<circle cx="1103.0" cy="388.0" r="3.6"/>
<circle cx="1082.0" cy="405.0" r="3.6"/>
<circle cx="1145.0" cy="392.0" r="3.6"/>
<circle cx="854.1" cy="403.0" r="3.6"/>
<circle cx="862.1" cy="401.2" r="3.6"/>
<circle cx="858.7" cy="402.5" r="3.6"/>
<circle cx="887.2" cy="410.6" r="3.6"/>
<circle cx="868.5" cy="399.7" r="3.6"/>
<circle cx="870.0" cy="403.0" r="3.6"/>
<circle cx="869.0" cy="400.4" r="3.6"/>
<circle cx="874.2" cy="401.5" r="3.6"/>
<circle cx="884.4" cy="412.3" r="3.6"/>
<circle cx="873.0" cy="402.6" r="3.6"/>
<circle cx="885.3" cy="405.7" r="3.6"/>
<circle cx="872.7" cy="402.0" r="3.6"/>
<circle cx="900.1" cy="419.2" r="3.6"/>
<circle cx="912.3" cy="428.8" r="3.6"/>
<circle cx="918.8" cy="431.4" r="3.6"/>
<circle cx="901.7" cy="418.7" r="3.6"/>
<circle cx="909.7" cy="425.3" r="3.6"/>
<circle cx="906.5" cy="427.1" r="3.6"/>
<circle cx="918.8" cy="428.1" r="3.6"/>
<circle cx="898.4" cy="412.2" r="3.6"/>
<circle cx="902.7" cy="418.6" r="3.6"/>
<circle cx="914.4" cy="428.6" r="3.6"/>
<circle cx="905.2" cy="418.5" r="3.6"/>
<circle cx="912.1" cy="426.5" r="3.6"/>
<circle cx="905.8" cy="420.2" r="3.6"/>
<circle cx="907.6" cy="415.1" r="3.6"/>
<circle cx="948.6" cy="452.2" r="3.6"/>
<circle cx="935.0" cy="440.4" r="3.6"/>
<circle cx="916.4" cy="439.5" r="3.6"/>
<circle cx="928.4" cy="430.9" r="3.6"/>
<circle cx="926.6" cy="444.2" r="3.6"/>
<circle cx="944.5" cy="448.6" r="3.6"/>
<circle cx="928.5" cy="448.8" r="3.6"/>
<circle cx="925.1" cy="433.1" r="3.6"/>
<circle cx="924.4" cy="436.2" r="3.6"/>
<circle cx="930.0" cy="429.7" r="3.6"/>
<circle cx="925.4" cy="439.5" r="3.6"/>
<circle cx="934.4" cy="441.3" r="3.6"/>
<circle cx="926.7" cy="439.1" r="3.6"/>
<circle cx="926.9" cy="436.0" r="3.6"/>
<circle cx="953.8" cy="445.4" r="3.6"/>
<circle cx="940.2" cy="445.9" r="3.6"/>
<circle cx="941.4" cy="447.9" r="3.6"/>
<circle cx="925.4" cy="437.8" r="3.6"/>
<circle cx="946.2" cy="449.9" r="3.6"/>
<circle cx="936.4" cy="428.9" r="3.6"/>
<circle cx="923.3" cy="436.6" r="3.6"/>
<circle cx="925.2" cy="435.2" r="3.6"/>
<circle cx="955.5" cy="451.9" r="3.6"/>
<circle cx="963.9" cy="459.8" r="3.6"/>
<circle cx="962.9" cy="454.4" r="3.6"/>
<circle cx="967.6" cy="458.7" r="3.6"/>
<circle cx="964.0" cy="459.9" r="3.6"/>
<circle cx="957.3" cy="455.8" r="3.6"/>
<circle cx="886.0" cy="372.0" r="3.6"/>
<circle cx="882.0" cy="376.0" r="3.6"/>
<circle cx="968.0" cy="443.0" r="3.6"/>
<circle cx="967.0" cy="482.0" r="3.6"/>
<circle cx="862.0" cy="499.0" r="3.6"/>
<circle cx="912.0" cy="493.0" r="3.6"/>
<circle cx="1004.0" cy="438.0" r="3.6"/>
<circle cx="1022.0" cy="448.0" r="3.6"/>
<circle cx="605.0" cy="320.0" r="3.6"/>
<circle cx="533.0" cy="540.0" r="3.6"/>
<circle cx="543.0" cy="540.0" r="3.6"/>
<circle cx="670.0" cy="706.0" r="3.6"/>
<circle cx="810.0" cy="797.0" r="3.6"/>
<circle cx="1038.0" cy="609.0" r="3.6"/>
<circle cx="923.2" cy="351.5" r="3.6"/>
<circle cx="967.9" cy="355.9" r="3.6"/>
<circle cx="952.6" cy="367.3" r="3.6"/>
<circle cx="959.3" cy="351.9" r="3.6"/>
<circle cx="959.3" cy="365.5" r="3.6"/>
<circle cx="931.2" cy="361.7" r="3.6"/>
<circle cx="938.3" cy="366.2" r="3.6"/>
<circle cx="924.5" cy="358.9" r="3.6"/>
<circle cx="935.8" cy="365.7" r="3.6"/>
<circle cx="936.3" cy="366.3" r="3.6"/>
<circle cx="958.7" cy="362.2" r="3.6"/>
<circle cx="953.5" cy="347.2" r="3.6"/>
<circle cx="965.7" cy="359.1" r="3.6"/>
<circle cx="942.5" cy="354.1" r="3.6"/>
<circle cx="999.1" cy="556.9" r="3.6"/>
<circle cx="1003.5" cy="522.8" r="3.6"/>
<circle cx="977.0" cy="525.0" r="3.6"/>
<circle cx="965.0" cy="529.6" r="3.6"/>
<circle cx="963.4" cy="554.5" r="3.6"/>
<circle cx="969.9" cy="537.7" r="3.6"/>
<circle cx="980.1" cy="558.1" r="3.6"/>
<circle cx="1007.7" cy="528.6" r="3.6"/>
<circle cx="991.6" cy="563.7" r="3.6"/>
<circle cx="983.5" cy="564.0" r="3.6"/>
<circle cx="996.7" cy="528.7" r="3.6"/>
<circle cx="1003.7" cy="544.4" r="3.6"/>
<circle cx="965.3" cy="545.2" r="3.6"/>
<circle cx="1001.5" cy="541.1" r="3.6"/>
<circle cx="984.2" cy="535.0" r="3.6"/>
<circle cx="1004.0" cy="549.9" r="3.6"/>
<circle cx="970.4" cy="531.7" r="3.6"/>
<circle cx="978.2" cy="567.5" r="3.6"/>
<circle cx="994.8" cy="517.5" r="3.6"/>
<circle cx="989.5" cy="535.9" r="3.6"/>
<circle cx="995.9" cy="535.8" r="3.6"/>
<circle cx="964.6" cy="541.4" r="3.6"/>
<circle cx="1001.0" cy="557.3" r="3.6"/>
<circle cx="977.8" cy="523.3" r="3.6"/>
<circle cx="997.2" cy="558.1" r="3.6"/>
<circle cx="971.0" cy="563.0" r="3.6"/>
<circle cx="1009.6" cy="536.0" r="3.6"/>
<circle cx="979.0" cy="552.6" r="3.6"/>
<circle cx="975.1" cy="529.7" r="3.6"/>
<circle cx="996.6" cy="521.2" r="3.6"/>
<circle cx="987.3" cy="540.0" r="3.6"/>
<circle cx="993.4" cy="518.6" r="3.6"/>
<circle cx="988.1" cy="557.7" r="3.6"/>
<circle cx="987.6" cy="555.6" r="3.6"/>
<circle cx="1003.4" cy="531.7" r="3.6"/>
<circle cx="961.2" cy="540.1" r="3.6"/>
<circle cx="1007.7" cy="540.6" r="3.6"/>
<circle cx="1006.6" cy="543.6" r="3.6"/>
<circle cx="967.2" cy="547.9" r="3.6"/>
<circle cx="1000.2" cy="535.4" r="3.6"/>
<circle cx="990.1" cy="525.5" r="3.6"/>
<circle cx="973.8" cy="535.2" r="3.6"/>
<circle cx="985.7" cy="538.1" r="3.6"/>
<circle cx="977.0" cy="553.0" r="3.6"/>
<circle cx="997.4" cy="524.2" r="3.6"/>
<circle cx="972.8" cy="541.0" r="3.6"/>
<circle cx="968.8" cy="546.2" r="3.6"/>
<circle cx="989.3" cy="553.2" r="3.6"/>
<circle cx="997.5" cy="552.7" r="3.6"/>
<circle cx="995.5" cy="526.4" r="3.6"/>
<circle cx="982.1" cy="515.2" r="3.6"/>
<circle cx="993.9" cy="518.5" r="3.6"/>
<circle cx="983.0" cy="548.3" r="3.6"/>
<circle cx="998.3" cy="524.7" r="3.6"/>
<circle cx="969.9" cy="519.7" r="3.6"/>
<circle cx="980.5" cy="547.1" r="3.6"/>
<circle cx="975.2" cy="519.7" r="3.6"/>
<circle cx="969.7" cy="528.9" r="3.6"/>
<circle cx="985.2" cy="521.0" r="3.6"/>
<circle cx="984.0" cy="536.4" r="3.6"/>
<circle cx="1008.6" cy="539.2" r="3.6"/>
<circle cx="1007.2" cy="538.3" r="3.6"/>
<circle cx="969.9" cy="545.5" r="3.6"/>
<circle cx="967.2" cy="520.2" r="3.6"/>
<circle cx="963.7" cy="552.1" r="3.6"/>
<circle cx="1008.3" cy="534.2" r="3.6"/>
<circle cx="977.7" cy="535.5" r="3.6"/>
<circle cx="977.6" cy="551.4" r="3.6"/>
<circle cx="979.6" cy="519.1" r="3.6"/>
<circle cx="1003.2" cy="544.4" r="3.6"/>
<circle cx="996.4" cy="531.3" r="3.6"/>
<circle cx="991.5" cy="565.2" r="3.6"/>
<circle cx="980.1" cy="536.0" r="3.6"/>
<circle cx="974.9" cy="543.3" r="3.6"/>
<circle cx="993.1" cy="554.1" r="3.6"/>
<circle cx="978.3" cy="561.1" r="3.6"/>
<circle cx="999.6" cy="545.4" r="3.6"/>
<circle cx="993.9" cy="530.4" r="3.6"/>
<circle cx="1007.2" cy="543.0" r="3.6"/>
<circle cx="980.1" cy="520.9" r="3.6"/>
<circle cx="976.2" cy="538.8" r="3.6"/>
<circle cx="984.8" cy="531.8" r="3.6"/>
<circle cx="1004.8" cy="531.0" r="3.6"/>
<circle cx="986.6" cy="565.8" r="3.6"/>
<circle cx="992.0" cy="538.6" r="3.6"/>
<circle cx="976.6" cy="533.2" r="3.6"/>
<circle cx="990.5" cy="557.2" r="3.6"/>
<circle cx="973.0" cy="532.2" r="3.6"/>
<circle cx="979.4" cy="531.8" r="3.6"/>
<circle cx="1005.6" cy="542.3" r="3.6"/>
<circle cx="973.8" cy="529.9" r="3.6"/>
<circle cx="1001.1" cy="519.6" r="3.6"/>
<circle cx="1000.3" cy="518.8" r="3.6"/>
<circle cx="973.2" cy="554.0" r="3.6"/>
<circle cx="996.0" cy="564.6" r="3.6"/>
<circle cx="1007.3" cy="543.1" r="3.6"/>
<circle cx="1006.3" cy="536.0" r="3.6"/>
<circle cx="969.6" cy="554.9" r="3.6"/>
<circle cx="1002.9" cy="533.1" r="3.6"/>
<circle cx="997.7" cy="545.8" r="3.6"/>
<circle cx="991.5" cy="516.7" r="3.6"/>
<circle cx="968.1" cy="520.9" r="3.6"/>
<circle cx="990.5" cy="550.3" r="3.6"/>
<circle cx="1008.5" cy="531.6" r="3.6"/>
<circle cx="1009.0" cy="536.1" r="3.6"/>
<circle cx="979.5" cy="525.2" r="3.6"/>
<circle cx="968.8" cy="520.8" r="3.6"/>
<circle cx="967.6" cy="531.1" r="3.6"/>
<circle cx="986.5" cy="550.8" r="3.6"/>
<circle cx="961.7" cy="536.4" r="3.6"/>
<circle cx="999.5" cy="544.5" r="3.6"/>
<circle cx="982.6" cy="562.9" r="3.6"/>
<circle cx="990.1" cy="530.2" r="3.6"/>
<circle cx="979.8" cy="566.6" r="3.6"/>
<circle cx="988.0" cy="518.5" r="3.6"/>
<circle cx="968.8" cy="533.0" r="3.6"/>
<circle cx="1000.1" cy="557.2" r="3.6"/>
<circle cx="985.7" cy="510.3" r="3.6"/>
<circle cx="999.9" cy="534.8" r="3.6"/>
<circle cx="993.5" cy="544.2" r="3.6"/>
<circle cx="996.4" cy="534.5" r="3.6"/>
<circle cx="1006.4" cy="546.9" r="3.6"/>
<circle cx="975.8" cy="532.6" r="3.6"/>
<circle cx="973.4" cy="564.2" r="3.6"/>
<circle cx="999.6" cy="557.3" r="3.6"/>
<circle cx="994.4" cy="529.1" r="3.6"/>
<circle cx="997.9" cy="525.7" r="3.6"/>
<circle cx="990.5" cy="519.5" r="3.6"/>
<circle cx="1002.9" cy="539.3" r="3.6"/>
<circle cx="973.8" cy="565.4" r="3.6"/>
<circle cx="997.8" cy="518.9" r="3.6"/>
<circle cx="998.1" cy="544.4" r="3.6"/>
<circle cx="1005.4" cy="545.2" r="3.6"/>
<circle cx="981.4" cy="566.0" r="3.6"/>
<circle cx="964.4" cy="556.6" r="3.6"/>
<circle cx="965.1" cy="526.6" r="3.6"/>
<circle cx="982.1" cy="553.6" r="3.6"/>
<circle cx="972.8" cy="553.8" r="3.6"/>
<circle cx="992.4" cy="515.9" r="3.6"/>
<circle cx="984.7" cy="553.3" r="3.6"/>
<circle cx="970.7" cy="549.3" r="3.6"/>
<circle cx="973.9" cy="532.2" r="3.6"/>
<circle cx="988.6" cy="558.5" r="3.6"/>
<circle cx="997.9" cy="537.4" r="3.6"/>
<circle cx="1003.2" cy="534.1" r="3.6"/>
<circle cx="1007.5" cy="538.4" r="3.6"/>
<circle cx="965.9" cy="554.9" r="3.6"/>
<circle cx="967.2" cy="550.8" r="3.6"/>
<circle cx="987.0" cy="554.4" r="3.6"/>
<circle cx="966.6" cy="548.2" r="3.6"/>
<circle cx="978.8" cy="524.9" r="3.6"/>
<circle cx="983.9" cy="515.2" r="3.6"/>
<circle cx="961.7" cy="537.9" r="3.6"/>
<circle cx="983.5" cy="553.1" r="3.6"/>
<circle cx="996.5" cy="530.6" r="3.6"/>
<circle cx="966.8" cy="558.9" r="3.6"/>
<circle cx="966.0" cy="521.2" r="3.6"/>
<circle cx="985.0" cy="530.2" r="3.6"/>
<circle cx="983.7" cy="557.2" r="3.6"/>
<circle cx="972.5" cy="564.8" r="3.6"/>
<circle cx="971.1" cy="564.4" r="3.6"/>
<circle cx="990.6" cy="568.3" r="3.6"/>
<circle cx="998.6" cy="547.8" r="3.6"/>
<circle cx="986.6" cy="561.3" r="3.6"/>
<circle cx="982.2" cy="515.9" r="3.6"/>
<circle cx="994.1" cy="554.7" r="3.6"/>
<circle cx="971.6" cy="537.8" r="3.6"/>
<circle cx="994.2" cy="543.2" r="3.6"/>
<circle cx="980.3" cy="520.1" r="3.6"/>
<circle cx="966.9" cy="538.2" r="3.6"/>
<circle cx="971.8" cy="515.4" r="3.6"/>
<circle cx="968.8" cy="521.1" r="3.6"/>
<circle cx="978.3" cy="521.8" r="3.6"/>
<circle cx="968.8" cy="529.2" r="3.6"/>
<circle cx="974.0" cy="529.3" r="3.6"/>
<circle cx="969.2" cy="520.9" r="3.6"/>
<circle cx="964.9" cy="512.5" r="3.6"/>
<circle cx="966.8" cy="522.6" r="3.6"/>
<circle cx="973.5" cy="529.0" r="3.6"/>
<circle cx="976.5" cy="517.2" r="3.6"/>
<circle cx="982.8" cy="522.7" r="3.6"/>
<circle cx="973.0" cy="527.3" r="3.6"/>
<circle cx="976.1" cy="517.2" r="3.6"/>
<circle cx="974.5" cy="516.0" r="3.6"/>
<circle cx="960.2" cy="521.1" r="3.6"/>
<circle cx="964.9" cy="520.1" r="3.6"/>
<circle cx="976.1" cy="523.7" r="3.6"/>
<circle cx="976.3" cy="524.3" r="3.6"/>
<circle cx="970.2" cy="529.4" r="3.6"/>
<circle cx="967.5" cy="521.4" r="3.6"/>
<circle cx="960.2" cy="518.3" r="3.6"/>
<circle cx="981.7" cy="521.8" r="3.6"/>
<circle cx="953.5" cy="512.9" r="3.6"/>
<circle cx="934.8" cy="514.8" r="3.6"/>
<circle cx="957.8" cy="509.3" r="3.6"/>
<circle cx="945.9" cy="508.6" r="3.6"/>
<circle cx="941.0" cy="512.7" r="3.6"/>
<circle cx="953.5" cy="512.3" r="3.6"/>
<circle cx="951.4" cy="511.0" r="3.6"/>
<circle cx="937.6" cy="509.7" r="3.6"/>
<circle cx="958.5" cy="514.2" r="3.6"/>
<circle cx="950.0" cy="514.0" r="3.6"/>
<circle cx="934.3" cy="535.0" r="3.6"/>
<circle cx="925.0" cy="545.9" r="3.6"/>
<circle cx="917.0" cy="540.7" r="3.6"/>
<circle cx="918.8" cy="541.0" r="3.6"/>
<circle cx="933.9" cy="536.4" r="3.6"/>
<circle cx="917.3" cy="551.3" r="3.6"/>
<circle cx="922.5" cy="545.4" r="3.6"/>
<circle cx="944.4" cy="537.2" r="3.6"/>
<circle cx="931.4" cy="539.0" r="3.6"/>
<circle cx="943.8" cy="538.4" r="3.6"/>
<circle cx="943.0" cy="532.8" r="3.6"/>
<circle cx="946.2" cy="534.3" r="3.6"/>
<circle cx="982.3" cy="550.5" r="3.6"/>
<circle cx="995.5" cy="559.2" r="3.6"/>
<circle cx="999.2" cy="582.2" r="3.6"/>
<circle cx="977.6" cy="559.9" r="3.6"/>
<circle cx="971.7" cy="552.8" r="3.6"/>
<circle cx="974.3" cy="568.3" r="3.6"/>
<circle cx="983.8" cy="548.3" r="3.6"/>
<circle cx="988.7" cy="560.1" r="3.6"/>
<circle cx="974.2" cy="574.5" r="3.6"/>
<circle cx="969.2" cy="579.7" r="3.6"/>
<circle cx="992.0" cy="561.1" r="3.6"/>
<circle cx="950.7" cy="566.1" r="3.6"/>
<circle cx="988.2" cy="554.1" r="3.6"/>
<circle cx="972.7" cy="552.1" r="3.6"/>
<circle cx="956.8" cy="594.5" r="3.6"/>
<circle cx="963.5" cy="578.8" r="3.6"/>
<circle cx="970.1" cy="583.1" r="3.6"/>
<circle cx="1014.2" cy="576.6" r="3.6"/>
<circle cx="948.9" cy="581.2" r="3.6"/>
<circle cx="966.7" cy="570.3" r="3.6"/>
<circle cx="973.1" cy="567.2" r="3.6"/>
<circle cx="956.4" cy="581.6" r="3.6"/>
<circle cx="990.7" cy="562.4" r="3.6"/>
<circle cx="972.8" cy="578.8" r="3.6"/>
<circle cx="943.0" cy="578.3" r="3.6"/>
<circle cx="955.8" cy="578.8" r="3.6"/>
<circle cx="1002.7" cy="563.9" r="3.6"/>
<circle cx="983.7" cy="566.3" r="3.6"/>
<circle cx="962.9" cy="589.3" r="3.6"/>
<circle cx="972.4" cy="565.8" r="3.6"/>
<circle cx="960.3" cy="570.1" r="3.6"/>
<circle cx="980.3" cy="547.5" r="3.6"/>
<circle cx="993.9" cy="568.1" r="3.6"/>
<circle cx="984.3" cy="546.7" r="3.6"/>
<circle cx="952.9" cy="578.5" r="3.6"/>
<circle cx="959.4" cy="578.6" r="3.6"/>
<circle cx="959.9" cy="563.1" r="3.6"/>
<circle cx="962.3" cy="592.2" r="3.6"/>
<circle cx="979.6" cy="579.4" r="3.6"/>
<circle cx="988.7" cy="577.0" r="3.6"/>
<circle cx="982.6" cy="565.5" r="3.6"/>
<circle cx="981.7" cy="583.4" r="3.6"/>
<circle cx="991.6" cy="565.6" r="3.6"/>
<circle cx="971.3" cy="581.5" r="3.6"/>
<circle cx="967.4" cy="577.3" r="3.6"/>
<circle cx="976.3" cy="577.8" r="3.6"/>
<circle cx="985.0" cy="567.4" r="3.6"/>
<circle cx="976.4" cy="569.9" r="3.6"/>
<circle cx="977.9" cy="575.5" r="3.6"/>
<circle cx="982.1" cy="562.1" r="3.6"/>
<circle cx="978.9" cy="563.4" r="3.6"/>
<circle cx="975.7" cy="579.2" r="3.6"/>
<circle cx="965.9" cy="579.9" r="3.6"/>
<circle cx="958.0" cy="548.1" r="3.6"/>
<circle cx="987.7" cy="576.8" r="3.6"/>
<circle cx="959.2" cy="583.9" r="3.6"/>
<circle cx="988.0" cy="549.8" r="3.6"/>
<circle cx="976.8" cy="576.6" r="3.6"/>
<circle cx="982.7" cy="570.1" r="3.6"/>
<circle cx="956.8" cy="576.9" r="3.6"/>
<circle cx="978.8" cy="582.6" r="3.6"/>
<circle cx="980.2" cy="557.9" r="3.6"/>
<circle cx="955.4" cy="581.2" r="3.6"/>
<circle cx="955.7" cy="576.6" r="3.6"/>
<circle cx="986.0" cy="556.8" r="3.6"/>
<circle cx="982.2" cy="549.1" r="3.6"/>
<circle cx="983.2" cy="571.6" r="3.6"/>
<circle cx="995.7" cy="561.1" r="3.6"/>
<circle cx="997.9" cy="565.4" r="3.6"/>
<circle cx="987.3" cy="567.0" r="3.6"/>
<circle cx="973.0" cy="548.9" r="3.6"/>
<circle cx="969.3" cy="578.5" r="3.6"/>
<circle cx="956.5" cy="579.0" r="3.6"/>
<circle cx="977.4" cy="579.9" r="3.6"/>
<circle cx="992.8" cy="562.4" r="3.6"/>
<circle cx="973.8" cy="579.2" r="3.6"/>
<circle cx="984.9" cy="566.2" r="3.6"/>
<circle cx="976.1" cy="562.6" r="3.6"/>
<circle cx="950.0" cy="593.2" r="3.6"/>
<circle cx="990.6" cy="567.3" r="3.6"/>
<circle cx="990.6" cy="546.3" r="3.6"/>
<circle cx="983.2" cy="558.9" r="3.6"/>
<circle cx="947.5" cy="583.1" r="3.6"/>
<circle cx="996.0" cy="568.1" r="3.6"/>
<circle cx="968.9" cy="590.8" r="3.6"/>
<circle cx="956.5" cy="578.9" r="3.6"/>
<circle cx="984.3" cy="606.3" r="3.6"/>
<circle cx="993.5" cy="562.0" r="3.6"/>
<circle cx="988.5" cy="550.8" r="3.6"/>
<circle cx="985.7" cy="576.2" r="3.6"/>
<circle cx="986.8" cy="563.8" r="3.6"/>
<circle cx="948.7" cy="587.2" r="3.6"/>
<circle cx="981.1" cy="585.3" r="3.6"/>
<circle cx="980.5" cy="554.0" r="3.6"/>
<circle cx="989.1" cy="570.9" r="3.6"/>
<circle cx="961.8" cy="549.7" r="3.6"/>
<circle cx="967.5" cy="560.4" r="3.6"/>
<circle cx="973.7" cy="577.8" r="3.6"/>
<circle cx="962.9" cy="590.6" r="3.6"/>
<circle cx="959.8" cy="595.3" r="3.6"/>
<circle cx="995.0" cy="562.1" r="3.6"/>
<circle cx="979.2" cy="575.2" r="3.6"/>
<circle cx="975.8" cy="597.6" r="3.6"/>
<circle cx="978.9" cy="566.5" r="3.6"/>
<circle cx="973.3" cy="548.8" r="3.6"/>
<circle cx="975.7" cy="586.8" r="3.6"/>
<circle cx="976.5" cy="558.1" r="3.6"/>
<circle cx="963.6" cy="582.6" r="3.6"/>
<circle cx="991.5" cy="560.7" r="3.6"/>
<circle cx="974.3" cy="578.4" r="3.6"/>
<circle cx="997.4" cy="569.0" r="3.6"/>
<circle cx="988.0" cy="565.5" r="3.6"/>
<circle cx="984.6" cy="580.5" r="3.6"/>
<circle cx="966.9" cy="575.2" r="3.6"/>
<circle cx="974.8" cy="594.0" r="3.6"/>
<circle cx="996.1" cy="587.9" r="3.6"/>
<circle cx="964.6" cy="584.6" r="3.6"/>
<circle cx="950.5" cy="559.0" r="3.6"/>
<circle cx="958.7" cy="588.0" r="3.6"/>
<circle cx="950.3" cy="581.8" r="3.6"/>
<circle cx="956.0" cy="556.5" r="3.6"/>
<circle cx="973.1" cy="560.4" r="3.6"/>
<circle cx="970.1" cy="568.1" r="3.6"/>
<circle cx="959.2" cy="587.6" r="3.6"/>
<circle cx="976.4" cy="563.1" r="3.6"/>
<circle cx="964.6" cy="573.7" r="3.6"/>
<circle cx="979.2" cy="572.1" r="3.6"/>
<circle cx="947.5" cy="565.2" r="3.6"/>
<circle cx="975.7" cy="565.7" r="3.6"/>
<circle cx="956.5" cy="579.1" r="3.6"/>
<circle cx="965.8" cy="549.5" r="3.6"/>
<circle cx="986.4" cy="582.2" r="3.6"/>
<circle cx="991.9" cy="558.6" r="3.6"/>
<circle cx="967.4" cy="587.5" r="3.6"/>
<circle cx="955.3" cy="594.7" r="3.6"/>
<circle cx="957.5" cy="587.2" r="3.6"/>
<circle cx="974.8" cy="568.4" r="3.6"/>
<circle cx="960.9" cy="596.6" r="3.6"/>
<circle cx="960.0" cy="559.4" r="3.6"/>
<circle cx="960.8" cy="573.8" r="3.6"/>
<circle cx="988.4" cy="571.1" r="3.6"/>
<circle cx="974.0" cy="586.8" r="3.6"/>
<circle cx="979.9" cy="549.7" r="3.6"/>
<circle cx="973.6" cy="569.1" r="3.6"/>
<circle cx="970.5" cy="591.7" r="3.6"/>
<circle cx="987.0" cy="561.6" r="3.6"/>
<circle cx="979.3" cy="580.3" r="3.6"/>
<circle cx="984.3" cy="561.6" r="3.6"/>
<circle cx="958.4" cy="587.3" r="3.6"/>
<circle cx="982.3" cy="580.2" r="3.6"/>
<circle cx="988.2" cy="554.6" r="3.6"/>
<circle cx="960.8" cy="578.8" r="3.6"/>
<circle cx="971.2" cy="595.2" r="3.6"/>
<circle cx="954.4" cy="587.9" r="3.6"/>
<circle cx="981.2" cy="572.6" r="3.6"/>
<circle cx="980.4" cy="554.3" r="3.6"/>
<circle cx="979.5" cy="557.1" r="3.6"/>
<circle cx="994.1" cy="570.0" r="3.6"/>
<circle cx="990.6" cy="584.0" r="3.6"/>
<circle cx="987.4" cy="548.3" r="3.6"/>
<circle cx="992.5" cy="550.3" r="3.6"/>
<circle cx="965.4" cy="574.1" r="3.6"/>
<circle cx="983.1" cy="563.5" r="3.6"/>
<circle cx="977.1" cy="576.9" r="3.6"/>
<circle cx="962.7" cy="561.8" r="3.6"/>
<circle cx="958.4" cy="575.4" r="3.6"/>
<circle cx="950.3" cy="570.8" r="3.6"/>
<circle cx="953.7" cy="580.2" r="3.6"/>
<circle cx="988.0" cy="557.2" r="3.6"/>
<circle cx="971.9" cy="573.1" r="3.6"/>
<circle cx="943.6" cy="622.0" r="3.6"/>
<circle cx="920.4" cy="615.5" r="3.6"/>
<circle cx="955.5" cy="593.3" r="3.6"/>
<circle cx="930.1" cy="604.3" r="3.6"/>
<circle cx="931.8" cy="585.4" r="3.6"/>
<circle cx="931.9" cy="597.7" r="3.6"/>
<circle cx="921.3" cy="586.7" r="3.6"/>
<circle cx="942.0" cy="620.0" r="3.6"/>
<circle cx="922.1" cy="613.5" r="3.6"/>
<circle cx="959.8" cy="615.0" r="3.6"/>
<circle cx="947.2" cy="609.3" r="3.6"/>
<circle cx="943.1" cy="613.3" r="3.6"/>
<circle cx="931.2" cy="609.2" r="3.6"/>
<circle cx="927.9" cy="582.8" r="3.6"/>
<circle cx="965.4" cy="596.3" r="3.6"/>
<circle cx="925.4" cy="628.4" r="3.6"/>
<circle cx="950.2" cy="601.2" r="3.6"/>
<circle cx="957.5" cy="603.0" r="3.6"/>
<circle cx="919.2" cy="607.6" r="3.6"/>
<circle cx="949.6" cy="608.0" r="3.6"/>
<circle cx="955.1" cy="596.6" r="3.6"/>
<circle cx="924.0" cy="628.3" r="3.6"/>
<circle cx="909.7" cy="614.8" r="3.6"/>
<circle cx="950.7" cy="590.7" r="3.6"/>
<circle cx="928.5" cy="623.8" r="3.6"/>
<circle cx="948.0" cy="614.6" r="3.6"/>
<circle cx="957.5" cy="601.7" r="3.6"/>
<circle cx="921.2" cy="637.2" r="3.6"/>
<circle cx="939.0" cy="591.4" r="3.6"/>
<circle cx="927.2" cy="609.4" r="3.6"/>
<circle cx="924.3" cy="622.2" r="3.6"/>
<circle cx="968.1" cy="609.7" r="3.6"/>
<circle cx="958.7" cy="613.1" r="3.6"/>
<circle cx="935.5" cy="597.7" r="3.6"/>
<circle cx="923.3" cy="588.2" r="3.6"/>
<circle cx="954.6" cy="606.7" r="3.6"/>
<circle cx="969.4" cy="611.0" r="3.6"/>
<circle cx="956.4" cy="611.5" r="3.6"/>
<circle cx="949.4" cy="588.3" r="3.6"/>
<circle cx="943.8" cy="601.9" r="3.6"/>
<circle cx="931.2" cy="600.4" r="3.6"/>
<circle cx="949.4" cy="588.6" r="3.6"/>
<circle cx="946.1" cy="589.5" r="3.6"/>
<circle cx="920.4" cy="604.0" r="3.6"/>
<circle cx="936.5" cy="608.6" r="3.6"/>
<circle cx="906.8" cy="611.4" r="3.6"/>
<circle cx="943.8" cy="584.8" r="3.6"/>
<circle cx="929.4" cy="610.5" r="3.6"/>
<circle cx="959.5" cy="593.3" r="3.6"/>
<circle cx="925.0" cy="623.5" r="3.6"/>
<circle cx="953.1" cy="604.6" r="3.6"/>
<circle cx="931.7" cy="617.4" r="3.6"/>
<circle cx="913.9" cy="604.9" r="3.6"/>
<circle cx="933.4" cy="610.5" r="3.6"/>
<circle cx="948.3" cy="623.8" r="3.6"/>
<circle cx="952.5" cy="623.0" r="3.6"/>
<circle cx="926.9" cy="582.5" r="3.6"/>
<circle cx="909.9" cy="622.8" r="3.6"/>
<circle cx="927.9" cy="625.8" r="3.6"/>
<circle cx="928.1" cy="635.5" r="3.6"/>
<circle cx="915.4" cy="599.9" r="3.6"/>
<circle cx="945.1" cy="601.2" r="3.6"/>
<circle cx="959.4" cy="611.7" r="3.6"/>
<circle cx="954.3" cy="594.9" r="3.6"/>
<circle cx="946.7" cy="613.5" r="3.6"/>
<circle cx="939.5" cy="590.0" r="3.6"/>
<circle cx="945.6" cy="614.1" r="3.6"/>
<circle cx="931.6" cy="614.9" r="3.6"/>
<circle cx="949.5" cy="614.1" r="3.6"/>
<circle cx="928.7" cy="574.6" r="3.6"/>
<circle cx="914.5" cy="611.5" r="3.6"/>
<circle cx="916.4" cy="626.9" r="3.6"/>
<circle cx="913.3" cy="601.9" r="3.6"/>
<circle cx="917.0" cy="631.3" r="3.6"/>
<circle cx="936.8" cy="614.4" r="3.6"/>
<circle cx="918.1" cy="608.8" r="3.6"/>
<circle cx="924.6" cy="615.7" r="3.6"/>
<circle cx="928.2" cy="613.1" r="3.6"/>
<circle cx="940.0" cy="589.8" r="3.6"/>
<circle cx="943.5" cy="592.7" r="3.6"/>
<circle cx="921.3" cy="628.0" r="3.6"/>
<circle cx="930.0" cy="597.0" r="3.6"/>
<circle cx="922.6" cy="588.8" r="3.6"/>
<circle cx="918.4" cy="583.5" r="3.6"/>
<circle cx="945.3" cy="599.7" r="3.6"/>
<circle cx="957.1" cy="593.5" r="3.6"/>
<circle cx="932.6" cy="612.1" r="3.6"/>
<circle cx="928.5" cy="652.1" r="3.6"/>
<circle cx="904.4" cy="617.3" r="3.6"/>
<circle cx="962.4" cy="590.1" r="3.6"/>
<circle cx="943.4" cy="631.2" r="3.6"/>
<circle cx="955.8" cy="602.1" r="3.6"/>
<circle cx="930.5" cy="604.9" r="3.6"/>
<circle cx="933.4" cy="607.2" r="3.6"/>
<circle cx="919.5" cy="598.1" r="3.6"/>
<circle cx="936.1" cy="626.8" r="3.6"/>
<circle cx="932.7" cy="600.1" r="3.6"/>
<circle cx="917.2" cy="605.6" r="3.6"/>
<circle cx="916.6" cy="601.2" r="3.6"/>
<circle cx="950.1" cy="622.8" r="3.6"/>
<circle cx="930.9" cy="595.9" r="3.6"/>
<circle cx="918.6" cy="626.1" r="3.6"/>
<circle cx="915.1" cy="623.5" r="3.6"/>
<circle cx="940.4" cy="625.6" r="3.6"/>
<circle cx="927.8" cy="645.6" r="3.6"/>
<circle cx="913.2" cy="610.8" r="3.6"/>
<circle cx="938.5" cy="590.0" r="3.6"/>
<circle cx="962.7" cy="599.7" r="3.6"/>
<circle cx="928.4" cy="644.9" r="3.6"/>
<circle cx="930.1" cy="625.6" r="3.6"/>
<circle cx="951.2" cy="610.8" r="3.6"/>
<circle cx="936.7" cy="623.2" r="3.6"/>
<circle cx="925.1" cy="608.5" r="3.6"/>
<circle cx="937.7" cy="599.8" r="3.6"/>
<circle cx="964.8" cy="608.8" r="3.6"/>
<circle cx="912.3" cy="601.1" r="3.6"/>
<circle cx="932.9" cy="614.4" r="3.6"/>
<circle cx="937.0" cy="609.7" r="3.6"/>
<circle cx="961.0" cy="599.9" r="3.6"/>
<circle cx="937.9" cy="613.6" r="3.6"/>
<circle cx="925.4" cy="612.4" r="3.6"/>
<circle cx="967.3" cy="605.6" r="3.6"/>
<circle cx="916.2" cy="628.5" r="3.6"/>
<circle cx="925.1" cy="626.9" r="3.6"/>
<circle cx="914.7" cy="613.7" r="3.6"/>
<circle cx="953.6" cy="606.1" r="3.6"/>
<circle cx="945.8" cy="597.5" r="3.6"/>
<circle cx="962.1" cy="620.5" r="3.6"/>
<circle cx="924.6" cy="601.6" r="3.6"/>
<circle cx="905.5" cy="620.9" r="3.6"/>
<circle cx="942.8" cy="608.7" r="3.6"/>
<circle cx="941.5" cy="627.3" r="3.6"/>
<circle cx="945.3" cy="611.2" r="3.6"/>
<circle cx="957.2" cy="602.7" r="3.6"/>
<circle cx="952.7" cy="591.2" r="3.6"/>
<circle cx="928.9" cy="612.2" r="3.6"/>
<circle cx="933.9" cy="607.2" r="3.6"/>
<circle cx="941.2" cy="615.7" r="3.6"/>
<circle cx="918.6" cy="598.1" r="3.6"/>
<circle cx="913.7" cy="631.0" r="3.6"/>
<circle cx="944.5" cy="617.9" r="3.6"/>
<circle cx="963.2" cy="609.1" r="3.6"/>
<circle cx="910.6" cy="621.0" r="3.6"/>
<circle cx="931.2" cy="604.5" r="3.6"/>
<circle cx="928.0" cy="634.1" r="3.6"/>
<circle cx="910.0" cy="621.0" r="3.6"/>
<circle cx="942.3" cy="593.0" r="3.6"/>
<circle cx="931.4" cy="621.2" r="3.6"/>
<circle cx="927.7" cy="626.7" r="3.6"/>
<circle cx="921.2" cy="618.7" r="3.6"/>
<circle cx="916.9" cy="623.6" r="3.6"/>
<circle cx="947.8" cy="575.8" r="3.6"/>
<circle cx="954.0" cy="588.0" r="3.6"/>
<circle cx="923.9" cy="596.8" r="3.6"/>
<circle cx="937.2" cy="588.5" r="3.6"/>
<circle cx="951.2" cy="604.2" r="3.6"/>
<circle cx="928.1" cy="629.3" r="3.6"/>
<circle cx="949.7" cy="604.1" r="3.6"/>
<circle cx="917.0" cy="618.3" r="3.6"/>
<circle cx="930.3" cy="618.7" r="3.6"/>
<circle cx="925.3" cy="618.2" r="3.6"/>
<circle cx="949.7" cy="601.1" r="3.6"/>
<circle cx="935.7" cy="605.3" r="3.6"/>
<circle cx="956.7" cy="608.7" r="3.6"/>
<circle cx="933.9" cy="585.7" r="3.6"/>
<circle cx="954.0" cy="594.5" r="3.6"/>
<circle cx="958.5" cy="604.4" r="3.6"/>
<circle cx="940.5" cy="608.6" r="3.6"/>
<circle cx="936.1" cy="607.4" r="3.6"/>
<circle cx="927.3" cy="613.3" r="3.6"/>
<circle cx="919.4" cy="613.9" r="3.6"/>
<circle cx="942.0" cy="608.6" r="3.6"/>
<circle cx="947.7" cy="603.6" r="3.6"/>
<circle cx="928.9" cy="628.6" r="3.6"/>
<circle cx="925.0" cy="584.6" r="3.6"/>
<circle cx="954.5" cy="621.4" r="3.6"/>
<circle cx="943.8" cy="601.7" r="3.6"/>
<circle cx="935.8" cy="608.0" r="3.6"/>
<circle cx="928.2" cy="597.4" r="3.6"/>
<circle cx="934.7" cy="591.2" r="3.6"/>
<circle cx="928.8" cy="599.0" r="3.6"/>
<circle cx="916.1" cy="606.8" r="3.6"/>
<circle cx="949.8" cy="609.1" r="3.6"/>
<circle cx="954.4" cy="627.3" r="3.6"/>
<circle cx="911.4" cy="616.3" r="3.6"/>
<circle cx="899.7" cy="620.7" r="3.6"/>
<circle cx="925.2" cy="607.6" r="3.6"/>
<circle cx="898.3" cy="614.1" r="3.6"/>
<circle cx="930.0" cy="637.4" r="3.6"/>
<circle cx="949.2" cy="595.5" r="3.6"/>
<circle cx="877.4" cy="624.5" r="3.6"/>
<circle cx="919.4" cy="664.1" r="3.6"/>
<circle cx="856.9" cy="637.8" r="3.6"/>
<circle cx="877.8" cy="652.7" r="3.6"/>
<circle cx="901.4" cy="637.1" r="3.6"/>
<circle cx="889.0" cy="653.2" r="3.6"/>
<circle cx="881.3" cy="682.7" r="3.6"/>
<circle cx="877.7" cy="636.0" r="3.6"/>
<circle cx="878.2" cy="622.7" r="3.6"/>
<circle cx="934.4" cy="653.7" r="3.6"/>
<circle cx="891.6" cy="641.5" r="3.6"/>
<circle cx="860.0" cy="633.3" r="3.6"/>
<circle cx="886.3" cy="643.0" r="3.6"/>
<circle cx="938.8" cy="651.7" r="3.6"/>
<circle cx="850.2" cy="635.6" r="3.6"/>
<circle cx="917.5" cy="675.8" r="3.6"/>
<circle cx="858.5" cy="667.7" r="3.6"/>
<circle cx="880.7" cy="649.8" r="3.6"/>
<circle cx="890.6" cy="613.1" r="3.6"/>
<circle cx="840.1" cy="659.4" r="3.6"/>
<circle cx="907.4" cy="638.1" r="3.6"/>
<circle cx="865.6" cy="615.0" r="3.6"/>
<circle cx="892.8" cy="658.4" r="3.6"/>
<circle cx="885.6" cy="612.5" r="3.6"/>
<circle cx="912.6" cy="656.3" r="3.6"/>
<circle cx="863.2" cy="643.0" r="3.6"/>
<circle cx="858.2" cy="623.8" r="3.6"/>
<circle cx="852.6" cy="670.4" r="3.6"/>
<circle cx="882.0" cy="662.9" r="3.6"/>
<circle cx="870.5" cy="669.7" r="3.6"/>
<circle cx="897.4" cy="658.4" r="3.6"/>
<circle cx="875.4" cy="651.6" r="3.6"/>
<circle cx="905.6" cy="649.4" r="3.6"/>
<circle cx="902.0" cy="617.4" r="3.6"/>
<circle cx="869.1" cy="627.1" r="3.6"/>
<circle cx="881.0" cy="674.3" r="3.6"/>
<circle cx="917.5" cy="663.2" r="3.6"/>
<circle cx="865.6" cy="627.2" r="3.6"/>
<circle cx="909.1" cy="632.1" r="3.6"/>
<circle cx="911.1" cy="635.9" r="3.6"/>
<circle cx="915.1" cy="652.4" r="3.6"/>
<circle cx="836.2" cy="650.4" r="3.6"/>
<circle cx="874.9" cy="667.0" r="3.6"/>
<circle cx="867.0" cy="625.4" r="3.6"/>
<circle cx="917.7" cy="650.7" r="3.6"/>
<circle cx="914.6" cy="646.2" r="3.6"/>
<circle cx="856.6" cy="644.9" r="3.6"/>
<circle cx="904.9" cy="666.5" r="3.6"/>
<circle cx="901.7" cy="642.8" r="3.6"/>
<circle cx="912.1" cy="659.5" r="3.6"/>
<circle cx="855.2" cy="649.6" r="3.6"/>
<circle cx="897.6" cy="663.9" r="3.6"/>
<circle cx="854.4" cy="633.0" r="3.6"/>
<circle cx="870.0" cy="617.1" r="3.6"/>
<circle cx="870.6" cy="664.0" r="3.6"/>
<circle cx="895.4" cy="622.8" r="3.6"/>
<circle cx="912.0" cy="618.6" r="3.6"/>
<circle cx="914.1" cy="620.9" r="3.6"/>
<circle cx="843.4" cy="628.6" r="3.6"/>
<circle cx="888.6" cy="630.0" r="3.6"/>
<circle cx="863.6" cy="665.5" r="3.6"/>
<circle cx="908.1" cy="651.5" r="3.6"/>
<circle cx="868.7" cy="633.8" r="3.6"/>
<circle cx="854.4" cy="641.8" r="3.6"/>
<circle cx="923.3" cy="632.9" r="3.6"/>
<circle cx="862.4" cy="625.7" r="3.6"/>
<circle cx="845.6" cy="637.2" r="3.6"/>
<circle cx="845.9" cy="623.3" r="3.6"/>
<circle cx="860.0" cy="652.8" r="3.6"/>
<circle cx="881.2" cy="632.6" r="3.6"/>
<circle cx="889.8" cy="667.3" r="3.6"/>
<circle cx="911.2" cy="635.4" r="3.6"/>
<circle cx="893.7" cy="645.2" r="3.6"/>
<circle cx="868.6" cy="619.9" r="3.6"/>
<circle cx="928.6" cy="655.0" r="3.6"/>
<circle cx="908.7" cy="627.6" r="3.6"/>
<circle cx="890.8" cy="671.7" r="3.6"/>
<circle cx="870.9" cy="646.9" r="3.6"/>
<circle cx="904.9" cy="624.2" r="3.6"/>
<circle cx="900.7" cy="641.5" r="3.6"/>
<circle cx="862.6" cy="618.7" r="3.6"/>
<circle cx="849.1" cy="649.1" r="3.6"/>
<circle cx="851.8" cy="668.8" r="3.6"/>
<circle cx="843.4" cy="656.1" r="3.6"/>
<circle cx="856.5" cy="666.6" r="3.6"/>
<circle cx="883.8" cy="679.0" r="3.6"/>
<circle cx="869.5" cy="639.5" r="3.6"/>
<circle cx="936.4" cy="635.4" r="3.6"/>
<circle cx="854.6" cy="650.4" r="3.6"/>
<circle cx="924.7" cy="667.3" r="3.6"/>
<circle cx="913.9" cy="654.5" r="3.6"/>
<circle cx="844.1" cy="668.0" r="3.6"/>
<circle cx="911.1" cy="633.5" r="3.6"/>
<circle cx="906.9" cy="640.4" r="3.6"/>
<circle cx="933.8" cy="638.4" r="3.6"/>
<circle cx="919.7" cy="644.9" r="3.6"/>
<circle cx="920.7" cy="632.3" r="3.6"/>
<circle cx="891.9" cy="611.9" r="3.6"/>
<circle cx="885.8" cy="615.9" r="3.6"/>
<circle cx="925.8" cy="660.1" r="3.6"/>
<circle cx="878.9" cy="682.1" r="3.6"/>
<circle cx="841.9" cy="662.1" r="3.6"/>
<circle cx="911.6" cy="654.8" r="3.6"/>
<circle cx="880.4" cy="654.0" r="3.6"/>
<circle cx="921.0" cy="630.4" r="3.6"/>
<circle cx="912.9" cy="625.5" r="3.6"/>
<circle cx="904.8" cy="653.1" r="3.6"/>
<circle cx="847.2" cy="640.6" r="3.6"/>
<circle cx="878.3" cy="614.2" r="3.6"/>
<circle cx="908.1" cy="646.5" r="3.6"/>
<circle cx="886.1" cy="620.7" r="3.6"/>
<circle cx="888.3" cy="669.4" r="3.6"/>
<circle cx="878.4" cy="629.7" r="3.6"/>
<circle cx="858.8" cy="644.0" r="3.6"/>
<circle cx="902.9" cy="652.2" r="3.6"/>
<circle cx="929.1" cy="647.8" r="3.6"/>
<circle cx="888.4" cy="683.2" r="3.6"/>
<circle cx="868.5" cy="633.2" r="3.6"/>
<circle cx="846.4" cy="640.9" r="3.6"/>
<circle cx="885.3" cy="675.0" r="3.6"/>
<circle cx="908.3" cy="664.0" r="3.6"/>
<circle cx="914.9" cy="632.3" r="3.6"/>
<circle cx="911.7" cy="625.2" r="3.6"/>
<circle cx="892.9" cy="654.1" r="3.6"/>
<circle cx="916.8" cy="622.4" r="3.6"/>
<circle cx="870.2" cy="671.0" r="3.6"/>
<circle cx="845.8" cy="625.6" r="3.6"/>
<circle cx="844.5" cy="663.6" r="3.6"/>
<circle cx="913.5" cy="658.0" r="3.6"/>
<circle cx="917.2" cy="648.2" r="3.6"/>
<circle cx="893.7" cy="678.2" r="3.6"/>
<circle cx="903.0" cy="658.5" r="3.6"/>
<circle cx="896.6" cy="646.5" r="3.6"/>
<circle cx="914.7" cy="652.4" r="3.6"/>
<circle cx="846.9" cy="641.5" r="3.6"/>
<circle cx="878.5" cy="642.0" r="3.6"/>
<circle cx="893.6" cy="636.8" r="3.6"/>
<circle cx="875.2" cy="641.6" r="3.6"/>
<circle cx="873.1" cy="681.9" r="3.6"/>
<circle cx="910.9" cy="639.2" r="3.6"/>
<circle cx="881.5" cy="653.8" r="3.6"/>
<circle cx="872.6" cy="627.7" r="3.6"/>
<circle cx="934.4" cy="631.2" r="3.6"/>
<circle cx="883.2" cy="634.0" r="3.6"/>
<circle cx="923.3" cy="627.8" r="3.6"/>
<circle cx="860.5" cy="661.7" r="3.6"/>
<circle cx="919.0" cy="644.8" r="3.6"/>
<circle cx="874.8" cy="627.3" r="3.6"/>
<circle cx="919.2" cy="673.9" r="3.6"/>
<circle cx="897.1" cy="682.9" r="3.6"/>
<circle cx="910.2" cy="644.0" r="3.6"/>
<circle cx="912.0" cy="615.1" r="3.6"/>
<circle cx="920.4" cy="659.3" r="3.6"/>
<circle cx="884.1" cy="676.0" r="3.6"/>
<circle cx="933.7" cy="655.6" r="3.6"/>
<circle cx="843.8" cy="653.6" r="3.6"/>
<circle cx="878.5" cy="628.5" r="3.6"/>
<circle cx="933.3" cy="664.0" r="3.6"/>
<circle cx="846.1" cy="626.9" r="3.6"/>
<circle cx="870.0" cy="652.4" r="3.6"/>
<circle cx="868.1" cy="642.5" r="3.6"/>
<circle cx="920.8" cy="623.5" r="3.6"/>
<circle cx="910.8" cy="634.5" r="3.6"/>
<circle cx="868.4" cy="654.8" r="3.6"/>
<circle cx="845.0" cy="640.4" r="3.6"/>
<circle cx="900.3" cy="657.2" r="3.6"/>
<circle cx="870.0" cy="612.5" r="3.6"/>
<circle cx="846.4" cy="651.5" r="3.6"/>
<circle cx="851.5" cy="632.7" r="3.6"/>
<circle cx="899.8" cy="676.7" r="3.6"/>
<circle cx="888.6" cy="628.8" r="3.6"/>
<circle cx="896.3" cy="630.4" r="3.6"/>
<circle cx="917.5" cy="621.5" r="3.6"/>
<circle cx="861.3" cy="642.5" r="3.6"/>
<circle cx="853.8" cy="619.7" r="3.6"/>
<circle cx="856.1" cy="634.6" r="3.6"/>
<circle cx="875.7" cy="666.2" r="3.6"/>
<circle cx="876.6" cy="645.2" r="3.6"/>
<circle cx="875.8" cy="667.3" r="3.6"/>
<circle cx="930.5" cy="641.5" r="3.6"/>
<circle cx="932.5" cy="628.5" r="3.6"/>
<circle cx="938.6" cy="648.9" r="3.6"/>
<circle cx="906.7" cy="638.2" r="3.6"/>
<circle cx="862.3" cy="620.0" r="3.6"/>
<circle cx="928.6" cy="636.6" r="3.6"/>
<circle cx="908.5" cy="644.1" r="3.6"/>
<circle cx="889.9" cy="625.3" r="3.6"/>
<circle cx="852.1" cy="634.9" r="3.6"/>
<circle cx="906.6" cy="650.2" r="3.6"/>
<circle cx="879.8" cy="615.1" r="3.6"/>
<circle cx="861.1" cy="625.7" r="3.6"/>
<circle cx="921.9" cy="650.7" r="3.6"/>
<circle cx="868.3" cy="628.4" r="3.6"/>
<circle cx="864.4" cy="630.7" r="3.6"/>
<circle cx="870.4" cy="668.5" r="3.6"/>
<circle cx="918.2" cy="661.7" r="3.6"/>
<circle cx="928.6" cy="658.4" r="3.6"/>
<circle cx="850.7" cy="629.1" r="3.6"/>
<circle cx="890.1" cy="670.8" r="3.6"/>
<circle cx="896.3" cy="641.8" r="3.6"/>
<circle cx="914.4" cy="635.3" r="3.6"/>
<circle cx="860.7" cy="672.7" r="3.6"/>
<circle cx="845.7" cy="658.3" r="3.6"/>
<circle cx="871.5" cy="675.8" r="3.6"/>
<circle cx="865.1" cy="617.5" r="3.6"/>
<circle cx="854.5" cy="669.6" r="3.6"/>
<circle cx="938.7" cy="657.6" r="3.6"/>
<circle cx="906.6" cy="630.9" r="3.6"/>
<circle cx="862.4" cy="616.4" r="3.6"/>
<circle cx="899.1" cy="635.9" r="3.6"/>
<circle cx="853.2" cy="642.3" r="3.6"/>
<circle cx="933.5" cy="628.3" r="3.6"/>
<circle cx="850.8" cy="656.6" r="3.6"/>
<circle cx="904.0" cy="647.8" r="3.6"/>
<circle cx="852.4" cy="674.7" r="3.6"/>
<circle cx="859.1" cy="648.0" r="3.6"/>
<circle cx="884.4" cy="651.0" r="3.6"/>
<circle cx="911.5" cy="676.2" r="3.6"/>
<circle cx="883.6" cy="613.1" r="3.6"/>
<circle cx="867.3" cy="620.6" r="3.6"/>
<circle cx="898.0" cy="667.9" r="3.6"/>
<circle cx="846.9" cy="631.8" r="3.6"/>
<circle cx="924.9" cy="661.0" r="3.6"/>
<circle cx="844.7" cy="660.8" r="3.6"/>
<circle cx="918.8" cy="640.2" r="3.6"/>
<circle cx="849.8" cy="658.8" r="3.6"/>
<circle cx="867.5" cy="619.9" r="3.6"/>
<circle cx="850.8" cy="639.8" r="3.6"/>
<circle cx="846.7" cy="638.5" r="3.6"/>
<circle cx="892.6" cy="650.9" r="3.6"/>
<circle cx="876.6" cy="669.2" r="3.6"/>
<circle cx="842.5" cy="634.4" r="3.6"/>
<circle cx="932.4" cy="666.6" r="3.6"/>
<circle cx="890.9" cy="668.3" r="3.6"/>
<circle cx="894.8" cy="618.7" r="3.6"/>
<circle cx="860.6" cy="617.2" r="3.6"/>
<circle cx="927.5" cy="633.8" r="3.6"/>
<circle cx="877.0" cy="649.8" r="3.6"/>
<circle cx="843.9" cy="662.2" r="3.6"/>
<circle cx="918.9" cy="668.9" r="3.6"/>
<circle cx="928.2" cy="633.5" r="3.6"/>
<circle cx="848.7" cy="666.4" r="3.6"/>
<circle cx="907.9" cy="637.5" r="3.6"/>
<circle cx="870.1" cy="621.4" r="3.6"/>
<circle cx="922.8" cy="644.1" r="3.6"/>
<circle cx="920.7" cy="635.1" r="3.6"/>
<circle cx="867.7" cy="648.0" r="3.6"/>
<circle cx="913.5" cy="675.3" r="3.6"/>
<circle cx="871.2" cy="661.3" r="3.6"/>
<circle cx="876.6" cy="673.7" r="3.6"/>
<circle cx="915.1" cy="651.1" r="3.6"/>
<circle cx="872.2" cy="630.3" r="3.6"/>
<circle cx="928.6" cy="669.3" r="3.6"/>
<circle cx="866.0" cy="616.3" r="3.6"/>
<circle cx="890.1" cy="651.0" r="3.6"/>
<circle cx="891.3" cy="640.4" r="3.6"/>
<circle cx="893.2" cy="616.7" r="3.6"/>
<circle cx="848.0" cy="659.8" r="3.6"/>
<circle cx="902.2" cy="669.7" r="3.6"/>
<circle cx="907.8" cy="678.9" r="3.6"/>
<circle cx="858.6" cy="667.6" r="3.6"/>
<circle cx="849.5" cy="649.3" r="3.6"/>
<circle cx="916.2" cy="621.6" r="3.6"/>
<circle cx="890.0" cy="676.7" r="3.6"/>
<circle cx="913.7" cy="639.4" r="3.6"/>
<circle cx="884.7" cy="630.6" r="3.6"/>
<circle cx="906.5" cy="632.5" r="3.6"/>
<circle cx="912.0" cy="646.0" r="3.6"/>
<circle cx="919.2" cy="636.9" r="3.6"/>
<circle cx="928.2" cy="660.7" r="3.6"/>
<circle cx="881.7" cy="651.6" r="3.6"/>
<circle cx="919.9" cy="649.2" r="3.6"/>
<circle cx="929.9" cy="662.8" r="3.6"/>
<circle cx="885.9" cy="672.9" r="3.6"/>
<circle cx="849.1" cy="635.0" r="3.6"/>
<circle cx="910.1" cy="670.9" r="3.6"/>
<circle cx="903.1" cy="613.4" r="3.6"/>
<circle cx="894.6" cy="633.8" r="3.6"/>
<circle cx="861.2" cy="643.1" r="3.6"/>
<circle cx="923.5" cy="651.3" r="3.6"/>
<circle cx="881.0" cy="632.8" r="3.6"/>
<circle cx="898.1" cy="635.7" r="3.6"/>
<circle cx="911.5" cy="671.1" r="3.6"/>
<circle cx="870.3" cy="619.3" r="3.6"/>
<circle cx="878.6" cy="683.0" r="3.6"/>
<circle cx="856.9" cy="626.4" r="3.6"/>
<circle cx="839.1" cy="649.1" r="3.6"/>
<circle cx="865.5" cy="659.9" r="3.6"/>
<circle cx="893.6" cy="654.2" r="3.6"/>
<circle cx="865.4" cy="664.4" r="3.6"/>
<circle cx="907.4" cy="662.9" r="3.6"/>
<circle cx="883.9" cy="644.3" r="3.6"/>
<circle cx="883.3" cy="655.6" r="3.6"/>
<circle cx="853.1" cy="673.6" r="3.6"/>
<circle cx="921.1" cy="646.1" r="3.6"/>
<circle cx="852.0" cy="630.1" r="3.6"/>
<circle cx="871.2" cy="635.8" r="3.6"/>
<circle cx="897.5" cy="618.3" r="3.6"/>
<circle cx="924.1" cy="635.0" r="3.6"/>
<circle cx="931.1" cy="634.4" r="3.6"/>
<circle cx="866.0" cy="623.0" r="3.6"/>
<circle cx="937.3" cy="653.6" r="3.6"/>
<circle cx="891.6" cy="664.2" r="3.6"/>
<circle cx="844.2" cy="637.6" r="3.6"/>
<circle cx="940.9" cy="649.6" r="3.6"/>
<circle cx="861.5" cy="651.5" r="3.6"/>
<circle cx="871.9" cy="652.7" r="3.6"/>
<circle cx="927.7" cy="629.0" r="3.6"/>
<circle cx="878.0" cy="679.9" r="3.6"/>
<circle cx="860.5" cy="637.2" r="3.6"/>
<circle cx="895.8" cy="627.5" r="3.6"/>
<circle cx="909.5" cy="658.3" r="3.6"/>
<circle cx="840.7" cy="661.5" r="3.6"/>
<circle cx="870.6" cy="620.6" r="3.6"/>
<circle cx="919.4" cy="644.0" r="3.6"/>
<circle cx="933.1" cy="649.4" r="3.6"/>
<circle cx="862.7" cy="648.4" r="3.6"/>
<circle cx="905.3" cy="672.4" r="3.6"/>
<circle cx="877.2" cy="651.4" r="3.6"/>
<circle cx="924.7" cy="624.7" r="3.6"/>
<circle cx="891.0" cy="652.5" r="3.6"/>
<circle cx="880.5" cy="623.7" r="3.6"/>
<circle cx="877.5" cy="653.8" r="3.6"/>
<circle cx="843.0" cy="662.8" r="3.6"/>
<circle cx="847.2" cy="628.9" r="3.6"/>
<circle cx="920.2" cy="673.8" r="3.6"/>
<circle cx="897.7" cy="637.0" r="3.6"/>
<circle cx="835.0" cy="641.9" r="3.6"/>
<circle cx="858.6" cy="653.5" r="3.6"/>
<circle cx="841.1" cy="661.4" r="3.6"/>
<circle cx="844.6" cy="626.5" r="3.6"/>
<circle cx="880.4" cy="683.0" r="3.6"/>
<circle cx="868.0" cy="633.4" r="3.6"/>
<circle cx="884.3" cy="622.0" r="3.6"/>
<circle cx="876.4" cy="661.8" r="3.6"/>
<circle cx="868.0" cy="668.9" r="3.6"/>
<circle cx="900.7" cy="643.5" r="3.6"/>
<circle cx="913.6" cy="659.6" r="3.6"/>
<circle cx="873.0" cy="619.5" r="3.6"/>
<circle cx="899.1" cy="666.1" r="3.6"/>
<circle cx="884.0" cy="645.0" r="3.6"/>
<circle cx="907.1" cy="655.1" r="3.6"/>
<circle cx="878.7" cy="623.8" r="3.6"/>
<circle cx="883.1" cy="650.7" r="3.6"/>
<circle cx="893.1" cy="634.3" r="3.6"/>
<circle cx="857.1" cy="656.7" r="3.6"/>
<circle cx="912.8" cy="628.3" r="3.6"/>
<circle cx="875.3" cy="679.5" r="3.6"/>
<circle cx="880.2" cy="658.3" r="3.6"/>
<circle cx="926.6" cy="625.0" r="3.6"/>
<circle cx="840.0" cy="632.7" r="3.6"/>
<circle cx="884.5" cy="665.1" r="3.6"/>
<circle cx="901.1" cy="678.8" r="3.6"/>
<circle cx="879.6" cy="612.0" r="3.6"/>
<circle cx="889.8" cy="656.8" r="3.6"/>
<circle cx="854.8" cy="673.4" r="3.6"/>
<circle cx="877.7" cy="681.0" r="3.6"/>
<circle cx="871.6" cy="655.9" r="3.6"/>
<circle cx="891.5" cy="629.5" r="3.6"/>
<circle cx="860.0" cy="633.7" r="3.6"/>
<circle cx="928.3" cy="647.0" r="3.6"/>
<circle cx="898.8" cy="669.9" r="3.6"/>
<circle cx="844.8" cy="667.7" r="3.6"/>
<circle cx="875.2" cy="648.8" r="3.6"/>
<circle cx="878.5" cy="642.4" r="3.6"/>
<circle cx="932.1" cy="664.4" r="3.6"/>
<circle cx="908.6" cy="620.5" r="3.6"/>
<circle cx="905.7" cy="656.7" r="3.6"/>
<circle cx="866.8" cy="629.8" r="3.6"/>
<circle cx="932.5" cy="649.4" r="3.6"/>
<circle cx="870.7" cy="615.0" r="3.6"/>
<circle cx="878.1" cy="618.3" r="3.6"/>
<circle cx="911.4" cy="669.9" r="3.6"/>
<circle cx="918.3" cy="668.6" r="3.6"/>
<circle cx="922.6" cy="648.2" r="3.6"/>
<circle cx="858.3" cy="673.4" r="3.6"/>
<circle cx="846.0" cy="634.0" r="3.6"/>
<circle cx="877.8" cy="667.1" r="3.6"/>
<circle cx="919.6" cy="653.0" r="3.6"/>
<circle cx="841.9" cy="665.5" r="3.6"/>
<circle cx="857.4" cy="634.0" r="3.6"/>
<circle cx="839.5" cy="642.2" r="3.6"/>
<circle cx="886.6" cy="661.9" r="3.6"/>
<circle cx="889.2" cy="666.8" r="3.6"/>
<circle cx="869.3" cy="640.6" r="3.6"/>
<circle cx="913.4" cy="662.0" r="3.6"/>
<circle cx="928.9" cy="632.9" r="3.6"/>
<circle cx="924.6" cy="664.6" r="3.6"/>
<circle cx="894.9" cy="640.2" r="3.6"/>
<circle cx="894.2" cy="615.7" r="3.6"/>
<circle cx="843.5" cy="633.0" r="3.6"/>
<circle cx="910.4" cy="664.1" r="3.6"/>
<circle cx="899.5" cy="625.2" r="3.6"/>
<circle cx="911.0" cy="671.1" r="3.6"/>
<circle cx="899.9" cy="626.8" r="3.6"/>
<circle cx="894.0" cy="639.2" r="3.6"/>
<circle cx="862.0" cy="621.0" r="3.6"/>
<circle cx="926.4" cy="656.8" r="3.6"/>
<circle cx="861.5" cy="647.7" r="3.6"/>
<circle cx="839.4" cy="632.4" r="3.6"/>
<circle cx="891.3" cy="645.7" r="3.6"/>
<circle cx="931.2" cy="652.7" r="3.6"/>
<circle cx="901.9" cy="653.3" r="3.6"/>
<circle cx="917.8" cy="637.1" r="3.6"/>
<circle cx="918.6" cy="619.4" r="3.6"/>
<circle cx="845.1" cy="626.4" r="3.6"/>
<circle cx="904.1" cy="619.7" r="3.6"/>
<circle cx="835.2" cy="646.6" r="3.6"/>
<circle cx="874.3" cy="625.2" r="3.6"/>
<circle cx="859.3" cy="634.0" r="3.6"/>
<circle cx="877.8" cy="636.6" r="3.6"/>
<circle cx="923.4" cy="664.6" r="3.6"/>
<circle cx="886.2" cy="610.2" r="3.6"/>
<circle cx="858.2" cy="676.6" r="3.6"/>
<circle cx="882.4" cy="625.2" r="3.6"/>
<circle cx="846.2" cy="647.1" r="3.6"/>
<circle cx="893.6" cy="618.7" r="3.6"/>
<circle cx="867.5" cy="655.7" r="3.6"/>
<circle cx="905.7" cy="656.5" r="3.6"/>
<circle cx="900.0" cy="638.0" r="3.6"/>
<circle cx="923.5" cy="674.0" r="3.6"/>
<circle cx="916.1" cy="622.7" r="3.6"/>
<circle cx="870.4" cy="624.8" r="3.6"/>
<circle cx="925.9" cy="670.6" r="3.6"/>
<circle cx="922.9" cy="638.2" r="3.6"/>
<circle cx="934.1" cy="629.2" r="3.6"/>
<circle cx="895.0" cy="659.8" r="3.6"/>
<circle cx="858.2" cy="638.2" r="3.6"/>
<circle cx="843.8" cy="669.0" r="3.6"/>
<circle cx="852.9" cy="620.1" r="3.6"/>
<circle cx="863.0" cy="657.4" r="3.6"/>
<circle cx="901.8" cy="648.8" r="3.6"/>
<circle cx="925.2" cy="665.7" r="3.6"/>
<circle cx="855.7" cy="649.6" r="3.6"/>
<circle cx="851.3" cy="627.9" r="3.6"/>
<circle cx="870.8" cy="675.6" r="3.6"/>
<circle cx="903.9" cy="616.5" r="3.6"/>
<circle cx="856.7" cy="653.8" r="3.6"/>
<circle cx="890.2" cy="612.0" r="3.6"/>
<circle cx="843.1" cy="651.9" r="3.6"/>
<circle cx="897.9" cy="615.9" r="3.6"/>
<circle cx="916.5" cy="627.8" r="3.6"/>
<circle cx="896.6" cy="649.2" r="3.6"/>
<circle cx="869.7" cy="680.0" r="3.6"/>
<circle cx="875.7" cy="641.3" r="3.6"/>
<circle cx="891.3" cy="672.1" r="3.6"/>
<circle cx="891.2" cy="663.0" r="3.6"/>
<circle cx="901.9" cy="681.0" r="3.6"/>
<circle cx="856.4" cy="652.1" r="3.6"/>
<circle cx="880.5" cy="627.1" r="3.6"/>
<circle cx="917.4" cy="626.4" r="3.6"/>
<circle cx="909.7" cy="646.2" r="3.6"/>
<circle cx="879.1" cy="662.3" r="3.6"/>
<circle cx="861.5" cy="659.5" r="3.6"/>
<circle cx="886.5" cy="679.6" r="3.6"/>
<circle cx="881.3" cy="636.5" r="3.6"/>
<circle cx="835.8" cy="644.8" r="3.6"/>
<circle cx="890.5" cy="632.8" r="3.6"/>
<circle cx="844.4" cy="645.8" r="3.6"/>
<circle cx="880.9" cy="635.8" r="3.6"/>
<circle cx="887.0" cy="649.2" r="3.6"/>
<circle cx="875.0" cy="619.9" r="3.6"/>
<circle cx="835.0" cy="651.4" r="3.6"/>
<circle cx="871.0" cy="633.6" r="3.6"/>
<circle cx="913.2" cy="646.5" r="3.6"/>
<circle cx="847.3" cy="625.3" r="3.6"/>
<circle cx="872.8" cy="639.6" r="3.6"/>
<circle cx="874.6" cy="681.5" r="3.6"/>
<circle cx="880.4" cy="652.6" r="3.6"/>
<circle cx="937.1" cy="657.5" r="3.6"/>
<circle cx="897.2" cy="671.3" r="3.6"/>
<circle cx="869.1" cy="612.7" r="3.6"/>
<circle cx="936.4" cy="649.5" r="3.6"/>
<circle cx="895.9" cy="614.9" r="3.6"/>
<circle cx="913.5" cy="637.7" r="3.6"/>
<circle cx="902.4" cy="631.0" r="3.6"/>
<circle cx="932.2" cy="637.3" r="3.6"/>
<circle cx="862.8" cy="676.1" r="3.6"/>
<circle cx="857.0" cy="630.0" r="3.6"/>
<circle cx="885.6" cy="682.6" r="3.6"/>
<circle cx="845.5" cy="625.6" r="3.6"/>
<circle cx="877.7" cy="667.9" r="3.6"/>
<circle cx="910.0" cy="668.7" r="3.6"/>
<circle cx="871.6" cy="670.3" r="3.6"/>
<circle cx="883.9" cy="676.0" r="3.6"/>
<circle cx="884.6" cy="629.1" r="3.6"/>
<circle cx="849.3" cy="646.7" r="3.6"/>
<circle cx="927.5" cy="652.5" r="3.6"/>
<circle cx="884.9" cy="644.7" r="3.6"/>
<circle cx="844.6" cy="629.5" r="3.6"/>
<circle cx="932.6" cy="663.5" r="3.6"/>
<circle cx="888.0" cy="655.1" r="3.6"/>
<circle cx="897.2" cy="613.7" r="3.6"/>
<circle cx="858.9" cy="620.1" r="3.6"/>
<circle cx="888.3" cy="653.1" r="3.6"/>
<circle cx="882.7" cy="644.8" r="3.6"/>
<circle cx="848.2" cy="663.1" r="3.6"/>
<circle cx="891.1" cy="632.9" r="3.6"/>
<circle cx="840.4" cy="638.8" r="3.6"/>
<circle cx="881.6" cy="629.0" r="3.6"/>
<circle cx="913.3" cy="677.0" r="3.6"/>
<circle cx="848.0" cy="647.5" r="3.6"/>
<circle cx="881.7" cy="617.7" r="3.6"/>
<circle cx="882.3" cy="648.3" r="3.6"/>
<circle cx="917.9" cy="623.8" r="3.6"/>
<circle cx="843.3" cy="665.5" r="3.6"/>
<circle cx="878.7" cy="678.5" r="3.6"/>
<circle cx="857.1" cy="674.9" r="3.6"/>
<circle cx="875.0" cy="681.9" r="3.6"/>
<circle cx="871.3" cy="663.0" r="3.6"/>
<circle cx="836.7" cy="648.2" r="3.6"/>
<circle cx="891.3" cy="617.3" r="3.6"/>
<circle cx="895.6" cy="643.0" r="3.6"/>
<circle cx="868.4" cy="671.5" r="3.6"/>
<circle cx="907.7" cy="618.9" r="3.6"/>
<circle cx="861.4" cy="657.1" r="3.6"/>
<circle cx="918.5" cy="666.4" r="3.6"/>
<circle cx="884.1" cy="683.7" r="3.6"/>
<circle cx="897.7" cy="618.8" r="3.6"/>
<circle cx="856.3" cy="619.6" r="3.6"/>
<circle cx="898.9" cy="656.2" r="3.6"/>
<circle cx="861.3" cy="629.6" r="3.6"/>
<circle cx="918.6" cy="676.4" r="3.6"/>
<circle cx="893.7" cy="655.0" r="3.6"/>
<circle cx="899.3" cy="667.1" r="3.6"/>
<circle cx="888.9" cy="618.4" r="3.6"/>
<circle cx="857.0" cy="658.3" r="3.6"/>
<circle cx="860.1" cy="668.9" r="3.6"/>
<circle cx="892.0" cy="636.4" r="3.6"/>
<circle cx="937.1" cy="653.0" r="3.6"/>
<circle cx="858.8" cy="651.8" r="3.6"/>
<circle cx="925.4" cy="637.3" r="3.6"/>
<circle cx="879.9" cy="652.7" r="3.6"/>
<circle cx="852.6" cy="653.1" r="3.6"/>
<circle cx="867.7" cy="645.0" r="3.6"/>
<circle cx="887.8" cy="633.2" r="3.6"/>
<circle cx="897.7" cy="670.7" r="3.6"/>
<circle cx="883.5" cy="656.6" r="3.6"/>
<circle cx="864.2" cy="628.9" r="3.6"/>
<circle cx="888.1" cy="649.4" r="3.6"/>
<circle cx="857.1" cy="666.6" r="3.6"/>
<circle cx="887.0" cy="636.3" r="3.6"/>
<circle cx="860.4" cy="671.9" r="3.6"/>
<circle cx="859.8" cy="615.3" r="3.6"/>
<circle cx="901.2" cy="611.8" r="3.6"/>
<circle cx="925.5" cy="660.3" r="3.6"/>
<circle cx="869.4" cy="642.7" r="3.6"/>
<circle cx="906.8" cy="621.9" r="3.6"/>
<circle cx="872.4" cy="668.2" r="3.6"/>
<circle cx="906.5" cy="653.3" r="3.6"/>
<circle cx="844.1" cy="626.1" r="3.6"/>
<circle cx="902.1" cy="652.4" r="3.6"/>
<circle cx="932.8" cy="651.0" r="3.6"/>
<circle cx="932.2" cy="644.7" r="3.6"/>
<circle cx="888.9" cy="630.8" r="3.6"/>
<circle cx="883.1" cy="679.3" r="3.6"/>
<circle cx="885.7" cy="610.2" r="3.6"/>
<circle cx="871.2" cy="624.6" r="3.6"/>
<circle cx="900.3" cy="647.7" r="3.6"/>
<circle cx="884.4" cy="678.6" r="3.6"/>
<circle cx="857.7" cy="615.1" r="3.6"/>
<circle cx="847.8" cy="635.5" r="3.6"/>
<circle cx="842.0" cy="613.3" r="3.6"/>
<circle cx="839.1" cy="642.1" r="3.6"/>
<circle cx="848.1" cy="613.6" r="3.6"/>
<circle cx="844.7" cy="617.9" r="3.6"/>
<circle cx="854.4" cy="645.3" r="3.6"/>
<circle cx="863.9" cy="635.2" r="3.6"/>
<circle cx="839.8" cy="641.2" r="3.6"/>
<circle cx="832.5" cy="617.2" r="3.6"/>
<circle cx="863.9" cy="637.4" r="3.6"/>
<circle cx="845.4" cy="646.3" r="3.6"/>
<circle cx="849.1" cy="643.5" r="3.6"/>
<circle cx="818.3" cy="632.7" r="3.6"/>
<circle cx="822.9" cy="623.9" r="3.6"/>
<circle cx="821.0" cy="628.7" r="3.6"/>
<circle cx="814.8" cy="635.6" r="3.6"/>
<circle cx="850.8" cy="644.6" r="3.6"/>
<circle cx="864.1" cy="631.5" r="3.6"/>
<circle cx="868.2" cy="629.7" r="3.6"/>
<circle cx="816.9" cy="637.3" r="3.6"/>
<circle cx="844.4" cy="644.5" r="3.6"/>
<circle cx="841.6" cy="623.8" r="3.6"/>
<circle cx="851.7" cy="637.6" r="3.6"/>
<circle cx="839.6" cy="621.9" r="3.6"/>
<circle cx="837.2" cy="637.7" r="3.6"/>
<circle cx="825.7" cy="617.7" r="3.6"/>
<circle cx="841.0" cy="635.7" r="3.6"/>
<circle cx="816.0" cy="621.8" r="3.6"/>
<circle cx="858.3" cy="623.0" r="3.6"/>
<circle cx="817.1" cy="629.5" r="3.6"/>
<circle cx="864.2" cy="640.0" r="3.6"/>
<circle cx="814.9" cy="637.3" r="3.6"/>
<circle cx="849.3" cy="629.4" r="3.6"/>
<circle cx="851.9" cy="630.8" r="3.6"/>
<circle cx="823.0" cy="637.0" r="3.6"/>
<circle cx="819.7" cy="623.2" r="3.6"/>
<circle cx="863.1" cy="632.5" r="3.6"/>
<circle cx="842.7" cy="637.6" r="3.6"/>
<circle cx="841.5" cy="625.8" r="3.6"/>
<circle cx="845.1" cy="612.8" r="3.6"/>
<circle cx="833.1" cy="613.4" r="3.6"/>
<circle cx="851.2" cy="617.7" r="3.6"/>
<circle cx="863.3" cy="622.2" r="3.6"/>
<circle cx="860.3" cy="635.4" r="3.6"/>
<circle cx="848.3" cy="638.7" r="3.6"/>
<circle cx="828.0" cy="642.0" r="3.6"/>
<circle cx="844.6" cy="639.3" r="3.6"/>
<circle cx="862.4" cy="621.2" r="3.6"/>
<circle cx="836.6" cy="625.0" r="3.6"/>
<circle cx="853.1" cy="629.6" r="3.6"/>
<circle cx="844.7" cy="643.7" r="3.6"/>
<circle cx="816.2" cy="624.9" r="3.6"/>
<circle cx="853.2" cy="631.2" r="3.6"/>
<circle cx="841.8" cy="621.3" r="3.6"/>
<circle cx="825.4" cy="636.1" r="3.6"/>
<circle cx="832.5" cy="645.7" r="3.6"/>
<circle cx="828.6" cy="630.5" r="3.6"/>
<circle cx="818.3" cy="624.9" r="3.6"/>
<circle cx="816.5" cy="630.1" r="3.6"/>
<circle cx="833.8" cy="621.9" r="3.6"/>
<circle cx="862.7" cy="642.8" r="3.6"/>
<circle cx="850.8" cy="626.0" r="3.6"/>
<circle cx="837.5" cy="633.9" r="3.6"/>
<circle cx="843.6" cy="643.2" r="3.6"/>
<circle cx="865.7" cy="623.8" r="3.6"/>
<circle cx="850.9" cy="635.6" r="3.6"/>
<circle cx="865.9" cy="625.1" r="3.6"/>
<circle cx="840.4" cy="647.0" r="3.6"/>
<circle cx="823.7" cy="634.9" r="3.6"/>
<circle cx="815.7" cy="632.2" r="3.6"/>
<circle cx="856.3" cy="617.7" r="3.6"/>
<circle cx="861.6" cy="640.5" r="3.6"/>
<circle cx="868.8" cy="637.8" r="3.6"/>
<circle cx="844.9" cy="641.7" r="3.6"/>
<circle cx="860.4" cy="634.6" r="3.6"/>
<circle cx="852.1" cy="618.4" r="3.6"/>
<circle cx="832.3" cy="623.7" r="3.6"/>
<circle cx="863.5" cy="640.1" r="3.6"/>
<circle cx="831.7" cy="614.8" r="3.6"/>
<circle cx="845.7" cy="640.3" r="3.6"/>
<circle cx="841.1" cy="631.1" r="3.6"/>
<circle cx="822.1" cy="610.5" r="3.6"/>
<circle cx="806.2" cy="611.4" r="3.6"/>
<circle cx="793.3" cy="618.6" r="3.6"/>
<circle cx="834.6" cy="635.8" r="3.6"/>
<circle cx="839.0" cy="652.4" r="3.6"/>
<circle cx="789.1" cy="607.2" r="3.6"/>
<circle cx="808.3" cy="609.8" r="3.6"/>
<circle cx="815.8" cy="619.4" r="3.6"/>
<circle cx="822.8" cy="627.2" r="3.6"/>
<circle cx="795.7" cy="621.1" r="3.6"/>
<circle cx="806.4" cy="620.4" r="3.6"/>
<circle cx="834.6" cy="626.0" r="3.6"/>
<circle cx="807.3" cy="614.8" r="3.6"/>
<circle cx="821.1" cy="627.7" r="3.6"/>
<circle cx="809.7" cy="621.1" r="3.6"/>
<circle cx="817.5" cy="615.4" r="3.6"/>
<circle cx="826.2" cy="630.1" r="3.6"/>
<circle cx="792.1" cy="615.0" r="3.6"/>
<circle cx="797.2" cy="611.1" r="3.6"/>
<circle cx="840.6" cy="642.9" r="3.6"/>
<circle cx="795.4" cy="621.6" r="3.6"/>
<circle cx="823.4" cy="631.3" r="3.6"/>
<circle cx="831.5" cy="626.3" r="3.6"/>
<circle cx="826.5" cy="630.0" r="3.6"/>
<circle cx="803.5" cy="626.5" r="3.6"/>
<circle cx="819.9" cy="641.3" r="3.6"/>
<circle cx="840.7" cy="636.7" r="3.6"/>
<circle cx="817.5" cy="627.7" r="3.6"/>
<circle cx="793.3" cy="608.8" r="3.6"/>
<circle cx="834.2" cy="654.6" r="3.6"/>
<circle cx="841.0" cy="643.4" r="3.6"/>
<circle cx="785.6" cy="624.4" r="3.6"/>
<circle cx="823.9" cy="625.3" r="3.6"/>
<circle cx="810.0" cy="629.4" r="3.6"/>
<circle cx="799.3" cy="628.4" r="3.6"/>
<circle cx="816.7" cy="632.1" r="3.6"/>
<circle cx="824.5" cy="629.5" r="3.6"/>
<circle cx="799.4" cy="610.1" r="3.6"/>
<circle cx="802.4" cy="626.7" r="3.6"/>
<circle cx="814.7" cy="628.3" r="3.6"/>
<circle cx="802.2" cy="613.1" r="3.6"/>
<circle cx="800.0" cy="615.4" r="3.6"/>
<circle cx="790.0" cy="608.0" r="3.6"/>
<circle cx="802.1" cy="598.7" r="3.6"/>
<circle cx="812.1" cy="616.3" r="3.6"/>
<circle cx="809.4" cy="639.2" r="3.6"/>
<circle cx="823.1" cy="627.4" r="3.6"/>
<circle cx="789.1" cy="624.5" r="3.6"/>
<circle cx="810.7" cy="615.2" r="3.6"/>
<circle cx="792.5" cy="625.2" r="3.6"/>
<circle cx="796.1" cy="612.9" r="3.6"/>
<circle cx="786.7" cy="614.6" r="3.6"/>
<circle cx="816.6" cy="639.3" r="3.6"/>
<circle cx="807.8" cy="642.4" r="3.6"/>
<circle cx="813.8" cy="626.9" r="3.6"/>
<circle cx="838.0" cy="634.9" r="3.6"/>
<circle cx="806.7" cy="630.7" r="3.6"/>
<circle cx="798.6" cy="614.4" r="3.6"/>
<circle cx="829.1" cy="625.4" r="3.6"/>
<circle cx="846.3" cy="642.3" r="3.6"/>
<circle cx="801.9" cy="630.1" r="3.6"/>
<circle cx="832.6" cy="632.0" r="3.6"/>
<circle cx="829.8" cy="655.3" r="3.6"/>
<circle cx="801.1" cy="622.9" r="3.6"/>
<circle cx="832.4" cy="640.0" r="3.6"/>
<circle cx="805.3" cy="623.5" r="3.6"/>
<circle cx="816.8" cy="628.8" r="3.6"/>
<circle cx="788.6" cy="606.0" r="3.6"/>
<circle cx="862.7" cy="593.0" r="3.6"/>
<circle cx="840.5" cy="596.6" r="3.6"/>
<circle cx="853.3" cy="583.6" r="3.6"/>
<circle cx="850.2" cy="593.9" r="3.6"/>
<circle cx="848.1" cy="585.7" r="3.6"/>
<circle cx="856.6" cy="592.3" r="3.6"/>
<circle cx="861.2" cy="586.5" r="3.6"/>
<circle cx="843.1" cy="592.8" r="3.6"/>
<circle cx="848.9" cy="595.7" r="3.6"/>
<circle cx="834.3" cy="593.7" r="3.6"/>
<circle cx="846.7" cy="591.9" r="3.6"/>
<circle cx="839.8" cy="585.5" r="3.6"/>
<circle cx="847.2" cy="587.4" r="3.6"/>
<circle cx="843.4" cy="588.6" r="3.6"/>
<circle cx="845.6" cy="589.5" r="3.6"/>
<circle cx="853.0" cy="587.8" r="3.6"/>
<circle cx="864.8" cy="583.8" r="3.6"/>
<circle cx="864.1" cy="585.7" r="3.6"/>
<circle cx="840.3" cy="596.7" r="3.6"/>
<circle cx="849.2" cy="592.7" r="3.6"/>
<circle cx="849.2" cy="591.1" r="3.6"/>
<circle cx="861.2" cy="583.2" r="3.6"/>
<circle cx="861.2" cy="608.2" r="3.6"/>
<circle cx="863.2" cy="608.5" r="3.6"/>
<circle cx="845.3" cy="607.2" r="3.6"/>
<circle cx="870.2" cy="598.6" r="3.6"/>
<circle cx="839.2" cy="606.2" r="3.6"/>
<circle cx="837.2" cy="605.8" r="3.6"/>
<circle cx="853.4" cy="610.0" r="3.6"/>
<circle cx="863.7" cy="603.2" r="3.6"/>
<circle cx="859.9" cy="599.6" r="3.6"/>
<circle cx="855.1" cy="603.4" r="3.6"/>
<circle cx="870.2" cy="603.6" r="3.6"/>
<circle cx="870.0" cy="606.2" r="3.6"/>
<circle cx="876.9" cy="612.0" r="3.6"/>
<circle cx="845.6" cy="615.9" r="3.6"/>
<circle cx="841.3" cy="608.4" r="3.6"/>
<circle cx="840.1" cy="607.4" r="3.6"/>
<circle cx="854.7" cy="600.3" r="3.6"/>
<circle cx="856.4" cy="614.3" r="3.6"/>
<circle cx="842.5" cy="617.6" r="3.6"/>
<circle cx="856.7" cy="601.5" r="3.6"/>
<circle cx="848.9" cy="607.2" r="3.6"/>
<circle cx="860.8" cy="599.6" r="3.6"/>
<circle cx="901.4" cy="735.6" r="3.6"/>
<circle cx="895.7" cy="721.5" r="3.6"/>
<circle cx="872.0" cy="726.1" r="3.6"/>
<circle cx="886.7" cy="727.9" r="3.6"/>
<circle cx="902.4" cy="686.1" r="3.6"/>
<circle cx="877.5" cy="730.1" r="3.6"/>
<circle cx="899.0" cy="727.5" r="3.6"/>
<circle cx="879.9" cy="710.3" r="3.6"/>
<circle cx="893.0" cy="729.9" r="3.6"/>
<circle cx="857.4" cy="712.7" r="3.6"/>
<circle cx="873.8" cy="718.4" r="3.6"/>
<circle cx="873.8" cy="690.8" r="3.6"/>
<circle cx="871.4" cy="740.4" r="3.6"/>
<circle cx="883.0" cy="739.4" r="3.6"/>
<circle cx="915.7" cy="695.4" r="3.6"/>
<circle cx="899.8" cy="676.6" r="3.6"/>
<circle cx="933.1" cy="721.4" r="3.6"/>
<circle cx="860.9" cy="713.4" r="3.6"/>
<circle cx="894.6" cy="724.3" r="3.6"/>
<circle cx="876.5" cy="741.5" r="3.6"/>
<circle cx="905.8" cy="681.2" r="3.6"/>
<circle cx="923.0" cy="739.7" r="3.6"/>
<circle cx="877.8" cy="727.2" r="3.6"/>
<circle cx="872.9" cy="733.7" r="3.6"/>
<circle cx="911.4" cy="709.5" r="3.6"/>
<circle cx="901.4" cy="728.9" r="3.6"/>
<circle cx="910.0" cy="704.8" r="3.6"/>
<circle cx="894.9" cy="712.6" r="3.6"/>
<circle cx="870.0" cy="694.8" r="3.6"/>
<circle cx="925.3" cy="736.9" r="3.6"/>
<circle cx="912.4" cy="725.6" r="3.6"/>
<circle cx="895.9" cy="717.3" r="3.6"/>
<circle cx="890.0" cy="745.8" r="3.6"/>
<circle cx="869.1" cy="709.7" r="3.6"/>
<circle cx="857.8" cy="694.4" r="3.6"/>
<circle cx="921.3" cy="733.5" r="3.6"/>
<circle cx="927.4" cy="694.5" r="3.6"/>
<circle cx="933.0" cy="702.8" r="3.6"/>
<circle cx="890.6" cy="744.5" r="3.6"/>
<circle cx="898.9" cy="725.0" r="3.6"/>
<circle cx="874.3" cy="683.6" r="3.6"/>
<circle cx="923.5" cy="694.0" r="3.6"/>
<circle cx="935.3" cy="724.8" r="3.6"/>
<circle cx="867.9" cy="727.2" r="3.6"/>
<circle cx="879.0" cy="713.9" r="3.6"/>
<circle cx="920.3" cy="717.8" r="3.6"/>
<circle cx="911.8" cy="700.5" r="3.6"/>
<circle cx="862.2" cy="699.4" r="3.6"/>
<circle cx="916.1" cy="716.5" r="3.6"/>
<circle cx="862.9" cy="693.3" r="3.6"/>
<circle cx="892.8" cy="677.0" r="3.6"/>
<circle cx="854.9" cy="708.4" r="3.6"/>
<circle cx="862.3" cy="729.9" r="3.6"/>
<circle cx="920.9" cy="698.7" r="3.6"/>
<circle cx="898.7" cy="747.4" r="3.6"/>
<circle cx="905.3" cy="703.9" r="3.6"/>
<circle cx="935.1" cy="698.3" r="3.6"/>
<circle cx="888.1" cy="698.7" r="3.6"/>
<circle cx="908.4" cy="739.5" r="3.6"/>
<circle cx="911.6" cy="689.1" r="3.6"/>
<circle cx="895.6" cy="737.2" r="3.6"/>
<circle cx="860.4" cy="719.1" r="3.6"/>
<circle cx="920.2" cy="731.9" r="3.6"/>
<circle cx="910.2" cy="680.5" r="3.6"/>
<circle cx="893.1" cy="695.4" r="3.6"/>
<circle cx="904.5" cy="704.6" r="3.6"/>
<circle cx="891.1" cy="714.7" r="3.6"/>
<circle cx="902.8" cy="740.1" r="3.6"/>
<circle cx="875.8" cy="695.8" r="3.6"/>
<circle cx="867.2" cy="684.1" r="3.6"/>
<circle cx="862.1" cy="701.9" r="3.6"/>
<circle cx="877.7" cy="680.8" r="3.6"/>
<circle cx="873.0" cy="712.2" r="3.6"/>
<circle cx="892.6" cy="725.1" r="3.6"/>
<circle cx="880.1" cy="682.5" r="3.6"/>
<circle cx="921.4" cy="739.3" r="3.6"/>
<circle cx="925.2" cy="722.9" r="3.6"/>
<circle cx="877.4" cy="735.0" r="3.6"/>
<circle cx="931.5" cy="730.3" r="3.6"/>
<circle cx="907.9" cy="686.5" r="3.6"/>
<circle cx="909.6" cy="724.4" r="3.6"/>
<circle cx="871.4" cy="710.3" r="3.6"/>
<circle cx="869.7" cy="738.7" r="3.6"/>
<circle cx="906.5" cy="725.8" r="3.6"/>
<circle cx="905.7" cy="680.4" r="3.6"/>
<circle cx="929.0" cy="732.1" r="3.6"/>
<circle cx="896.3" cy="718.5" r="3.6"/>
<circle cx="894.3" cy="730.4" r="3.6"/>
<circle cx="897.9" cy="696.0" r="3.6"/>
<circle cx="896.4" cy="691.4" r="3.6"/>
<circle cx="851.4" cy="713.5" r="3.6"/>
<circle cx="927.6" cy="727.8" r="3.6"/>
<circle cx="869.4" cy="712.6" r="3.6"/>
<circle cx="902.3" cy="717.7" r="3.6"/>
<circle cx="891.5" cy="712.7" r="3.6"/>
<circle cx="911.6" cy="739.4" r="3.6"/>
<circle cx="896.4" cy="732.5" r="3.6"/>
<circle cx="910.8" cy="684.6" r="3.6"/>
<circle cx="873.8" cy="698.6" r="3.6"/>
<circle cx="882.2" cy="711.4" r="3.6"/>
<circle cx="915.6" cy="702.7" r="3.6"/>
<circle cx="912.6" cy="742.6" r="3.6"/>
<circle cx="865.0" cy="721.3" r="3.6"/>
<circle cx="935.4" cy="703.0" r="3.6"/>
<circle cx="928.2" cy="733.9" r="3.6"/>
<circle cx="879.2" cy="686.4" r="3.6"/>
<circle cx="922.0" cy="705.9" r="3.6"/>
<circle cx="881.8" cy="709.4" r="3.6"/>
<circle cx="915.1" cy="740.4" r="3.6"/>
<circle cx="931.7" cy="731.2" r="3.6"/>
<circle cx="866.5" cy="702.6" r="3.6"/>
<circle cx="880.9" cy="688.8" r="3.6"/>
<circle cx="892.9" cy="685.5" r="3.6"/>
<circle cx="908.5" cy="705.6" r="3.6"/>
<circle cx="872.7" cy="725.4" r="3.6"/>
<circle cx="924.8" cy="730.3" r="3.6"/>
<circle cx="928.3" cy="697.2" r="3.6"/>
<circle cx="874.2" cy="726.1" r="3.6"/>
<circle cx="908.5" cy="715.5" r="3.6"/>
<circle cx="855.5" cy="696.4" r="3.6"/>
<circle cx="888.3" cy="746.6" r="3.6"/>
<circle cx="863.7" cy="718.6" r="3.6"/>
<circle cx="916.8" cy="734.5" r="3.6"/>
<circle cx="916.9" cy="688.9" r="3.6"/>
<circle cx="899.5" cy="681.8" r="3.6"/>
<circle cx="867.6" cy="688.5" r="3.6"/>
<circle cx="865.0" cy="686.1" r="3.6"/>
<circle cx="884.6" cy="734.0" r="3.6"/>
<circle cx="859.7" cy="732.8" r="3.6"/>
<circle cx="898.9" cy="733.5" r="3.6"/>
<circle cx="880.6" cy="679.0" r="3.6"/>
<circle cx="859.7" cy="728.1" r="3.6"/>
<circle cx="895.6" cy="731.0" r="3.6"/>
<circle cx="868.5" cy="696.1" r="3.6"/>
<circle cx="869.6" cy="737.3" r="3.6"/>
<circle cx="912.9" cy="687.2" r="3.6"/>
<circle cx="892.0" cy="694.5" r="3.6"/>
<circle cx="918.3" cy="727.7" r="3.6"/>
<circle cx="911.2" cy="690.2" r="3.6"/>
<circle cx="854.8" cy="722.1" r="3.6"/>
<circle cx="882.8" cy="713.4" r="3.6"/>
<circle cx="908.3" cy="742.7" r="3.6"/>
<circle cx="908.2" cy="713.1" r="3.6"/>
<circle cx="918.7" cy="711.3" r="3.6"/>
<circle cx="853.9" cy="715.4" r="3.6"/>
<circle cx="887.4" cy="700.1" r="3.6"/>
<circle cx="885.7" cy="691.9" r="3.6"/>
<circle cx="878.4" cy="729.8" r="3.6"/>
<circle cx="928.9" cy="708.9" r="3.6"/>
<circle cx="896.4" cy="729.6" r="3.6"/>
<circle cx="919.7" cy="703.9" r="3.6"/>
<circle cx="904.6" cy="723.0" r="3.6"/>
<circle cx="881.4" cy="684.1" r="3.6"/>
<circle cx="901.2" cy="705.1" r="3.6"/>
<circle cx="929.3" cy="723.8" r="3.6"/>
<circle cx="917.5" cy="717.0" r="3.6"/>
<circle cx="917.3" cy="685.6" r="3.6"/>
<circle cx="903.6" cy="689.7" r="3.6"/>
<circle cx="859.0" cy="726.8" r="3.6"/>
<circle cx="914.9" cy="724.0" r="3.6"/>
<circle cx="873.4" cy="711.1" r="3.6"/>
<circle cx="918.6" cy="722.1" r="3.6"/>
<circle cx="906.0" cy="714.5" r="3.6"/>
<circle cx="857.5" cy="706.2" r="3.6"/>
<circle cx="909.8" cy="738.4" r="3.6"/>
<circle cx="857.8" cy="712.7" r="3.6"/>
<circle cx="921.0" cy="684.4" r="3.6"/>
<circle cx="881.1" cy="691.0" r="3.6"/>
<circle cx="863.8" cy="691.8" r="3.6"/>
<circle cx="887.9" cy="726.9" r="3.6"/>
<circle cx="933.4" cy="716.2" r="3.6"/>
<circle cx="934.9" cy="706.7" r="3.6"/>
<circle cx="887.8" cy="677.6" r="3.6"/>
<circle cx="862.6" cy="734.2" r="3.6"/>
<circle cx="861.1" cy="697.6" r="3.6"/>
<circle cx="897.3" cy="713.8" r="3.6"/>
<circle cx="910.5" cy="705.1" r="3.6"/>
<circle cx="859.1" cy="710.5" r="3.6"/>
<circle cx="857.6" cy="715.7" r="3.6"/>
<circle cx="860.9" cy="714.8" r="3.6"/>
<circle cx="882.5" cy="746.4" r="3.6"/>
<circle cx="913.2" cy="719.5" r="3.6"/>
<circle cx="873.6" cy="707.4" r="3.6"/>
<circle cx="897.3" cy="703.3" r="3.6"/>
<circle cx="900.6" cy="682.5" r="3.6"/>
<circle cx="888.0" cy="747.1" r="3.6"/>
<circle cx="886.1" cy="712.4" r="3.6"/>
<circle cx="917.3" cy="734.5" r="3.6"/>
<circle cx="915.8" cy="703.4" r="3.6"/>
<circle cx="913.6" cy="690.4" r="3.6"/>
<circle cx="905.3" cy="677.1" r="3.6"/>
<circle cx="867.9" cy="688.6" r="3.6"/>
<circle cx="882.0" cy="729.1" r="3.6"/>
<circle cx="934.5" cy="720.2" r="3.6"/>
<circle cx="890.4" cy="737.6" r="3.6"/>
<circle cx="908.0" cy="731.9" r="3.6"/>
<circle cx="897.0" cy="719.7" r="3.6"/>
<circle cx="911.5" cy="688.9" r="3.6"/>
<circle cx="901.0" cy="745.8" r="3.6"/>
<circle cx="873.3" cy="735.0" r="3.6"/>
<circle cx="935.6" cy="724.4" r="3.6"/>
<circle cx="889.7" cy="706.1" r="3.6"/>
<circle cx="892.1" cy="685.0" r="3.6"/>
<circle cx="857.6" cy="696.1" r="3.6"/>
<circle cx="882.9" cy="739.0" r="3.6"/>
<circle cx="900.6" cy="740.7" r="3.6"/>
<circle cx="929.9" cy="727.2" r="3.6"/>
<circle cx="890.5" cy="693.5" r="3.6"/>
<circle cx="900.6" cy="698.4" r="3.6"/>
<circle cx="907.0" cy="700.4" r="3.6"/>
<circle cx="888.0" cy="715.1" r="3.6"/>
<circle cx="882.4" cy="744.9" r="3.6"/>
<circle cx="935.1" cy="713.9" r="3.6"/>
<circle cx="900.6" cy="690.2" r="3.6"/>
<circle cx="920.5" cy="711.0" r="3.6"/>
<circle cx="918.1" cy="742.4" r="3.6"/>
<circle cx="905.9" cy="726.0" r="3.6"/>
<circle cx="899.3" cy="685.4" r="3.6"/>
<circle cx="891.4" cy="680.5" r="3.6"/>
<circle cx="884.5" cy="685.7" r="3.6"/>
<circle cx="889.3" cy="680.3" r="3.6"/>
<circle cx="904.4" cy="692.4" r="3.6"/>
<circle cx="870.1" cy="721.9" r="3.6"/>
<circle cx="913.9" cy="717.9" r="3.6"/>
<circle cx="893.9" cy="706.3" r="3.6"/>
<circle cx="897.1" cy="700.2" r="3.6"/>
<circle cx="925.4" cy="734.4" r="3.6"/>
<circle cx="920.9" cy="711.4" r="3.6"/>
<circle cx="894.9" cy="736.7" r="3.6"/>
<circle cx="861.3" cy="692.2" r="3.6"/>
<circle cx="852.1" cy="711.4" r="3.6"/>
<circle cx="890.9" cy="744.8" r="3.6"/>
<circle cx="932.9" cy="705.2" r="3.6"/>
<circle cx="894.6" cy="683.6" r="3.6"/>
<circle cx="917.3" cy="713.4" r="3.6"/>
<circle cx="893.0" cy="747.8" r="3.6"/>
<circle cx="863.2" cy="695.2" r="3.6"/>
<circle cx="920.6" cy="700.2" r="3.6"/>
<circle cx="871.9" cy="698.3" r="3.6"/>
<circle cx="910.3" cy="739.8" r="3.6"/>
<circle cx="855.5" cy="710.8" r="3.6"/>
<circle cx="870.2" cy="684.8" r="3.6"/>
<circle cx="872.4" cy="728.9" r="3.6"/>
<circle cx="901.6" cy="685.4" r="3.6"/>
<circle cx="876.1" cy="680.8" r="3.6"/>
<circle cx="932.5" cy="730.3" r="3.6"/>
<circle cx="892.6" cy="745.2" r="3.6"/>
<circle cx="873.4" cy="689.8" r="3.6"/>
<circle cx="906.3" cy="718.8" r="3.6"/>
<circle cx="896.6" cy="731.7" r="3.6"/>
<circle cx="897.6" cy="698.7" r="3.6"/>
<circle cx="909.8" cy="744.3" r="3.6"/>
<circle cx="855.4" cy="711.0" r="3.6"/>
<circle cx="863.3" cy="729.8" r="3.6"/>
<circle cx="889.0" cy="736.4" r="3.6"/>
<circle cx="909.9" cy="745.1" r="3.6"/>
<circle cx="902.0" cy="718.9" r="3.6"/>
<circle cx="880.7" cy="683.5" r="3.6"/>
<circle cx="909.2" cy="744.3" r="3.6"/>
<circle cx="904.4" cy="729.7" r="3.6"/>
<circle cx="903.4" cy="692.0" r="3.6"/>
<circle cx="857.9" cy="729.5" r="3.6"/>
<circle cx="890.7" cy="685.0" r="3.6"/>
<circle cx="900.2" cy="695.1" r="3.6"/>
<circle cx="874.1" cy="739.1" r="3.6"/>
<circle cx="905.4" cy="729.9" r="3.6"/>
<circle cx="922.9" cy="707.4" r="3.6"/>
<circle cx="890.7" cy="707.1" r="3.6"/>
<circle cx="882.5" cy="732.1" r="3.6"/>
<circle cx="928.8" cy="697.5" r="3.6"/>
<circle cx="913.6" cy="691.5" r="3.6"/>
<circle cx="919.3" cy="699.7" r="3.6"/>
<circle cx="879.2" cy="730.7" r="3.6"/>
<circle cx="925.3" cy="686.1" r="3.6"/>
<circle cx="931.2" cy="707.3" r="3.6"/>
<circle cx="875.1" cy="703.2" r="3.6"/>
<circle cx="897.5" cy="714.0" r="3.6"/>
<circle cx="876.9" cy="680.3" r="3.6"/>
<circle cx="906.5" cy="727.7" r="3.6"/>
<circle cx="912.2" cy="704.5" r="3.6"/>
<circle cx="899.8" cy="713.7" r="3.6"/>
<circle cx="871.0" cy="713.8" r="3.6"/>
<circle cx="857.1" cy="723.2" r="3.6"/>
<circle cx="895.7" cy="714.8" r="3.6"/>
<circle cx="925.0" cy="722.2" r="3.6"/>
<circle cx="933.8" cy="725.1" r="3.6"/>
<circle cx="923.4" cy="699.0" r="3.6"/>
<circle cx="885.4" cy="713.7" r="3.6"/>
<circle cx="898.5" cy="716.9" r="3.6"/>
<circle cx="914.2" cy="700.6" r="3.6"/>
<circle cx="904.3" cy="729.0" r="3.6"/>
<circle cx="884.6" cy="725.1" r="3.6"/>
<circle cx="930.5" cy="702.6" r="3.6"/>
<circle cx="897.3" cy="710.8" r="3.6"/>
<circle cx="924.8" cy="695.4" r="3.6"/>
<circle cx="876.2" cy="704.3" r="3.6"/>
<circle cx="908.4" cy="687.1" r="3.6"/>
<circle cx="937.1" cy="712.2" r="3.6"/>
<circle cx="915.3" cy="705.7" r="3.6"/>
<circle cx="853.4" cy="703.8" r="3.6"/>
<circle cx="875.9" cy="665.4" r="3.6"/>
<circle cx="897.9" cy="695.2" r="3.6"/>
<circle cx="869.8" cy="661.7" r="3.6"/>
<circle cx="858.3" cy="680.2" r="3.6"/>
<circle cx="880.1" cy="670.4" r="3.6"/>
<circle cx="871.2" cy="676.2" r="3.6"/>
<circle cx="875.5" cy="701.3" r="3.6"/>
<circle cx="873.0" cy="705.0" r="3.6"/>
<circle cx="878.6" cy="665.0" r="3.6"/>
<circle cx="880.5" cy="689.0" r="3.6"/>
<circle cx="864.0" cy="711.0" r="3.6"/>
<circle cx="857.4" cy="699.0" r="3.6"/>
<circle cx="869.1" cy="687.3" r="3.6"/>
<circle cx="871.9" cy="682.3" r="3.6"/>
<circle cx="857.4" cy="701.5" r="3.6"/>
<circle cx="878.9" cy="663.3" r="3.6"/>
<circle cx="859.6" cy="715.9" r="3.6"/>
<circle cx="860.3" cy="677.6" r="3.6"/>
<circle cx="876.2" cy="682.4" r="3.6"/>
<circle cx="852.0" cy="673.5" r="3.6"/>
<circle cx="854.2" cy="686.7" r="3.6"/>
<circle cx="860.3" cy="700.5" r="3.6"/>
<circle cx="861.7" cy="668.0" r="3.6"/>
<circle cx="868.3" cy="681.8" r="3.6"/>
<circle cx="897.8" cy="685.2" r="3.6"/>
<circle cx="879.7" cy="667.9" r="3.6"/>
<circle cx="878.0" cy="713.0" r="3.6"/>
<circle cx="882.7" cy="705.7" r="3.6"/>
<circle cx="848.6" cy="697.1" r="3.6"/>
<circle cx="887.9" cy="679.3" r="3.6"/>
<circle cx="864.8" cy="679.7" r="3.6"/>
<circle cx="864.7" cy="673.3" r="3.6"/>
<circle cx="868.9" cy="678.6" r="3.6"/>
<circle cx="870.3" cy="711.3" r="3.6"/>
<circle cx="866.6" cy="685.3" r="3.6"/>
<circle cx="885.8" cy="702.3" r="3.6"/>
<circle cx="896.5" cy="691.9" r="3.6"/>
<circle cx="873.5" cy="681.3" r="3.6"/>
<circle cx="861.6" cy="715.9" r="3.6"/>
<circle cx="887.3" cy="700.4" r="3.6"/>
<circle cx="881.3" cy="689.3" r="3.6"/>
<circle cx="886.1" cy="688.7" r="3.6"/>
<circle cx="875.3" cy="708.2" r="3.6"/>
<circle cx="871.7" cy="688.5" r="3.6"/>
<circle cx="871.2" cy="704.2" r="3.6"/>
<circle cx="884.7" cy="680.1" r="3.6"/>
<circle cx="886.9" cy="682.5" r="3.6"/>
<circle cx="881.4" cy="682.6" r="3.6"/>
<circle cx="887.0" cy="682.9" r="3.6"/>
<circle cx="864.0" cy="686.0" r="3.6"/>
<circle cx="877.7" cy="662.0" r="3.6"/>
<circle cx="874.4" cy="715.7" r="3.6"/>
<circle cx="884.0" cy="703.1" r="3.6"/>
<circle cx="885.7" cy="685.3" r="3.6"/>
<circle cx="892.4" cy="703.3" r="3.6"/>
<circle cx="856.8" cy="690.0" r="3.6"/>
<circle cx="872.8" cy="681.8" r="3.6"/>
<circle cx="871.4" cy="687.5" r="3.6"/>
<circle cx="897.9" cy="697.6" r="3.6"/>
<circle cx="854.6" cy="706.3" r="3.6"/>
<circle cx="865.6" cy="695.8" r="3.6"/>
<circle cx="875.4" cy="704.4" r="3.6"/>
<circle cx="861.2" cy="700.7" r="3.6"/>
<circle cx="865.0" cy="706.9" r="3.6"/>
<circle cx="871.7" cy="698.6" r="3.6"/>
<circle cx="873.3" cy="698.8" r="3.6"/>
<circle cx="866.1" cy="703.6" r="3.6"/>
<circle cx="889.9" cy="681.8" r="3.6"/>
<circle cx="867.7" cy="682.0" r="3.6"/>
<circle cx="863.5" cy="684.7" r="3.6"/>
<circle cx="875.2" cy="698.5" r="3.6"/>
<circle cx="861.2" cy="705.9" r="3.6"/>
<circle cx="892.2" cy="682.9" r="3.6"/>
<circle cx="872.0" cy="673.1" r="3.6"/>
<circle cx="858.5" cy="711.1" r="3.6"/>
<circle cx="879.7" cy="686.8" r="3.6"/>
<circle cx="879.6" cy="671.1" r="3.6"/>
<circle cx="876.1" cy="671.1" r="3.6"/>
<circle cx="874.3" cy="679.5" r="3.6"/>
<circle cx="859.2" cy="704.4" r="3.6"/>
<circle cx="864.5" cy="704.5" r="3.6"/>
<circle cx="885.5" cy="682.5" r="3.6"/>
<circle cx="874.8" cy="694.8" r="3.6"/>
<circle cx="882.0" cy="692.9" r="3.6"/>
<circle cx="897.3" cy="697.0" r="3.6"/>
<circle cx="867.0" cy="714.4" r="3.6"/>
<circle cx="893.4" cy="695.8" r="3.6"/>
<circle cx="867.3" cy="694.4" r="3.6"/>
<circle cx="889.8" cy="667.9" r="3.6"/>
<circle cx="890.6" cy="678.6" r="3.6"/>
<circle cx="850.8" cy="676.1" r="3.6"/>
<circle cx="873.6" cy="716.4" r="3.6"/>
<circle cx="854.3" cy="677.3" r="3.6"/>
<circle cx="865.1" cy="698.4" r="3.6"/>
<circle cx="864.1" cy="700.2" r="3.6"/>
<circle cx="876.3" cy="703.4" r="3.6"/>
<circle cx="881.1" cy="663.9" r="3.6"/>
<circle cx="895.0" cy="701.4" r="3.6"/>
<circle cx="853.7" cy="684.6" r="3.6"/>
<circle cx="864.0" cy="712.7" r="3.6"/>
<circle cx="894.1" cy="705.2" r="3.6"/>
<circle cx="879.4" cy="695.1" r="3.6"/>
<circle cx="872.6" cy="699.4" r="3.6"/>
<circle cx="871.8" cy="683.9" r="3.6"/>
<circle cx="890.2" cy="678.1" r="3.6"/>
<circle cx="866.9" cy="700.8" r="3.6"/>
<circle cx="897.1" cy="680.7" r="3.6"/>
<circle cx="868.4" cy="684.1" r="3.6"/>
<circle cx="856.3" cy="681.3" r="3.6"/>
<circle cx="887.6" cy="671.3" r="3.6"/>
<circle cx="870.8" cy="677.0" r="3.6"/>
<circle cx="876.2" cy="706.4" r="3.6"/>
<circle cx="851.2" cy="689.2" r="3.6"/>
<circle cx="855.1" cy="698.8" r="3.6"/>
<circle cx="881.6" cy="673.3" r="3.6"/>
<circle cx="857.5" cy="678.2" r="3.6"/>
<circle cx="862.7" cy="713.6" r="3.6"/>
<circle cx="892.2" cy="707.5" r="3.6"/>
<circle cx="866.3" cy="687.4" r="3.6"/>
<circle cx="855.9" cy="687.6" r="3.6"/>
<circle cx="896.6" cy="772.6" r="3.6"/>
<circle cx="881.5" cy="754.8" r="3.6"/>
<circle cx="885.1" cy="765.4" r="3.6"/>
<circle cx="886.9" cy="760.4" r="3.6"/>
<circle cx="895.9" cy="765.5" r="3.6"/>
<circle cx="884.8" cy="770.6" r="3.6"/>
<circle cx="897.8" cy="761.1" r="3.6"/>
<circle cx="886.7" cy="745.2" r="3.6"/>
<circle cx="878.9" cy="757.7" r="3.6"/>
<circle cx="887.4" cy="759.3" r="3.6"/>
<circle cx="896.8" cy="771.1" r="3.6"/>
<circle cx="893.4" cy="756.8" r="3.6"/>
<circle cx="896.3" cy="762.7" r="3.6"/>
<circle cx="889.4" cy="750.6" r="3.6"/>
<circle cx="955.7" cy="737.1" r="3.6"/>
<circle cx="971.2" cy="766.5" r="3.6"/>
<circle cx="926.8" cy="794.1" r="3.6"/>
<circle cx="953.8" cy="786.3" r="3.6"/>
<circle cx="966.3" cy="778.3" r="3.6"/>
<circle cx="938.7" cy="747.1" r="3.6"/>
<circle cx="959.3" cy="750.9" r="3.6"/>
<circle cx="927.9" cy="772.7" r="3.6"/>
<circle cx="947.0" cy="767.6" r="3.6"/>
<circle cx="916.8" cy="771.9" r="3.6"/>
<circle cx="933.2" cy="742.2" r="3.6"/>
<circle cx="943.3" cy="747.3" r="3.6"/>
<circle cx="947.5" cy="747.1" r="3.6"/>
<circle cx="966.0" cy="795.6" r="3.6"/>
<circle cx="938.0" cy="740.9" r="3.6"/>
<circle cx="960.2" cy="787.4" r="3.6"/>
<circle cx="948.8" cy="796.6" r="3.6"/>
<circle cx="926.0" cy="785.0" r="3.6"/>
<circle cx="973.7" cy="765.7" r="3.6"/>
<circle cx="950.8" cy="793.7" r="3.6"/>
<circle cx="941.8" cy="753.4" r="3.6"/>
<circle cx="937.0" cy="760.0" r="3.6"/>
<circle cx="945.5" cy="743.2" r="3.6"/>
<circle cx="940.8" cy="755.8" r="3.6"/>
<circle cx="980.5" cy="764.6" r="3.6"/>
<circle cx="956.5" cy="755.3" r="3.6"/>
<circle cx="972.7" cy="765.2" r="3.6"/>
<circle cx="982.9" cy="773.9" r="3.6"/>
<circle cx="941.6" cy="783.0" r="3.6"/>
<circle cx="965.5" cy="780.5" r="3.6"/>
<circle cx="967.8" cy="749.2" r="3.6"/>
<circle cx="953.0" cy="743.2" r="3.6"/>
<circle cx="973.7" cy="764.2" r="3.6"/>
<circle cx="945.1" cy="748.4" r="3.6"/>
<circle cx="945.0" cy="777.3" r="3.6"/>
<circle cx="961.2" cy="782.7" r="3.6"/>
<circle cx="960.0" cy="790.6" r="3.6"/>
<circle cx="971.2" cy="778.5" r="3.6"/>
<circle cx="971.9" cy="744.5" r="3.6"/>
<circle cx="980.3" cy="781.3" r="3.6"/>
<circle cx="959.6" cy="756.8" r="3.6"/>
<circle cx="979.7" cy="755.0" r="3.6"/>
<circle cx="949.0" cy="770.2" r="3.6"/>
<circle cx="979.9" cy="756.7" r="3.6"/>
<circle cx="976.7" cy="785.2" r="3.6"/>
<circle cx="954.7" cy="800.3" r="3.6"/>
<circle cx="976.1" cy="787.0" r="3.6"/>
<circle cx="953.1" cy="739.0" r="3.6"/>
<circle cx="931.0" cy="780.2" r="3.6"/>
<circle cx="923.9" cy="779.7" r="3.6"/>
<circle cx="939.6" cy="762.3" r="3.6"/>
<circle cx="971.9" cy="793.2" r="3.6"/>
<circle cx="966.8" cy="766.4" r="3.6"/>
<circle cx="952.5" cy="803.0" r="3.6"/>
<circle cx="979.0" cy="777.3" r="3.6"/>
<circle cx="960.8" cy="749.4" r="3.6"/>
<circle cx="967.2" cy="782.7" r="3.6"/>
<circle cx="948.2" cy="792.1" r="3.6"/>
<circle cx="979.8" cy="783.3" r="3.6"/>
<circle cx="921.7" cy="761.3" r="3.6"/>
<circle cx="963.9" cy="760.9" r="3.6"/>
<circle cx="927.3" cy="767.0" r="3.6"/>
<circle cx="925.6" cy="768.3" r="3.6"/>
<circle cx="922.7" cy="785.4" r="3.6"/>
<circle cx="923.3" cy="778.9" r="3.6"/>
<circle cx="959.8" cy="749.5" r="3.6"/>
<circle cx="958.6" cy="773.3" r="3.6"/>
<circle cx="957.9" cy="748.6" r="3.6"/>
<circle cx="948.4" cy="792.8" r="3.6"/>
<circle cx="958.0" cy="752.6" r="3.6"/>
<circle cx="938.7" cy="795.8" r="3.6"/>
<circle cx="919.6" cy="768.5" r="3.6"/>
<circle cx="950.9" cy="765.2" r="3.6"/>
<circle cx="973.3" cy="766.9" r="3.6"/>
<circle cx="935.8" cy="766.7" r="3.6"/>
<circle cx="972.4" cy="787.7" r="3.6"/>
<circle cx="929.4" cy="757.6" r="3.6"/>
<circle cx="921.2" cy="757.6" r="3.6"/>
<circle cx="951.4" cy="787.2" r="3.6"/>
<circle cx="950.4" cy="793.6" r="3.6"/>
<circle cx="961.7" cy="744.9" r="3.6"/>
<circle cx="943.7" cy="773.7" r="3.6"/>
<circle cx="956.5" cy="744.1" r="3.6"/>
<circle cx="938.8" cy="761.1" r="3.6"/>
<circle cx="966.2" cy="789.2" r="3.6"/>
<circle cx="963.2" cy="748.3" r="3.6"/>
<circle cx="947.4" cy="798.3" r="3.6"/>
<circle cx="927.9" cy="759.7" r="3.6"/>
<circle cx="947.4" cy="772.0" r="3.6"/>
<circle cx="956.7" cy="757.6" r="3.6"/>
<circle cx="967.4" cy="784.6" r="3.6"/>
<circle cx="944.3" cy="746.3" r="3.6"/>
<circle cx="968.0" cy="783.7" r="3.6"/>
<circle cx="954.3" cy="786.7" r="3.6"/>
<circle cx="962.9" cy="790.9" r="3.6"/>
<circle cx="919.0" cy="785.3" r="3.6"/>
<circle cx="954.2" cy="764.4" r="3.6"/>
<circle cx="952.0" cy="779.7" r="3.6"/>
<circle cx="927.8" cy="771.1" r="3.6"/>
<circle cx="927.4" cy="783.8" r="3.6"/>
<circle cx="934.7" cy="782.1" r="3.6"/>
<circle cx="922.2" cy="788.2" r="3.6"/>
<circle cx="940.4" cy="770.9" r="3.6"/>
<circle cx="934.3" cy="778.8" r="3.6"/>
<circle cx="923.5" cy="784.2" r="3.6"/>
<circle cx="953.9" cy="783.8" r="3.6"/>
<circle cx="922.1" cy="775.1" r="3.6"/>
<circle cx="950.7" cy="793.9" r="3.6"/>
<circle cx="927.4" cy="790.5" r="3.6"/>
<circle cx="922.0" cy="777.3" r="3.6"/>
<circle cx="954.4" cy="788.7" r="3.6"/>
<circle cx="940.5" cy="774.3" r="3.6"/>
<circle cx="927.0" cy="772.5" r="3.6"/>
<circle cx="925.6" cy="777.7" r="3.6"/>
<circle cx="911.3" cy="795.8" r="3.6"/>
<circle cx="914.1" cy="783.7" r="3.6"/>
<circle cx="918.0" cy="787.4" r="3.6"/>
<circle cx="938.1" cy="780.4" r="3.6"/>
<circle cx="919.3" cy="788.3" r="3.6"/>
<circle cx="919.8" cy="775.8" r="3.6"/>
<circle cx="945.5" cy="777.8" r="3.6"/>
<circle cx="934.6" cy="780.4" r="3.6"/>
<circle cx="946.0" cy="777.0" r="3.6"/>
<circle cx="923.4" cy="776.7" r="3.6"/>
<circle cx="925.3" cy="775.2" r="3.6"/>
<circle cx="914.7" cy="782.9" r="3.6"/>
<circle cx="956.6" cy="784.6" r="3.6"/>
<circle cx="935.8" cy="772.7" r="3.6"/>
<circle cx="954.1" cy="777.5" r="3.6"/>
<circle cx="914.7" cy="787.2" r="3.6"/>
<circle cx="963.8" cy="796.6" r="3.6"/>
<circle cx="954.5" cy="789.9" r="3.6"/>
<circle cx="899.6" cy="795.8" r="3.6"/>
<circle cx="980.3" cy="791.4" r="3.6"/>
<circle cx="891.0" cy="797.1" r="3.6"/>
<circle cx="957.2" cy="799.1" r="3.6"/>
<circle cx="907.3" cy="798.7" r="3.6"/>
<circle cx="980.7" cy="798.4" r="3.6"/>
<circle cx="971.3" cy="799.7" r="3.6"/>
<circle cx="933.9" cy="798.8" r="3.6"/>
<circle cx="903.3" cy="799.9" r="3.6"/>
<circle cx="975.3" cy="802.2" r="3.6"/>
<circle cx="988.2" cy="805.1" r="3.6"/>
<circle cx="939.7" cy="809.5" r="3.6"/>
<circle cx="895.9" cy="796.5" r="3.6"/>
<circle cx="922.3" cy="796.0" r="3.6"/>
<circle cx="897.0" cy="796.5" r="3.6"/>
<circle cx="888.8" cy="802.3" r="3.6"/>
<circle cx="905.9" cy="799.1" r="3.6"/>
<circle cx="933.5" cy="801.9" r="3.6"/>
<circle cx="942.3" cy="797.3" r="3.6"/>
<circle cx="920.1" cy="790.2" r="3.6"/>
<circle cx="965.5" cy="798.1" r="3.6"/>
<circle cx="917.9" cy="802.2" r="3.6"/>
<circle cx="922.7" cy="799.1" r="3.6"/>
<circle cx="950.6" cy="799.0" r="3.6"/>
<circle cx="925.0" cy="802.4" r="3.6"/>
<circle cx="939.9" cy="796.4" r="3.6"/>
<circle cx="925.8" cy="793.7" r="3.6"/>
<circle cx="956.2" cy="804.5" r="3.6"/>
<circle cx="933.6" cy="793.3" r="3.6"/>
<circle cx="919.5" cy="798.7" r="3.6"/>
<circle cx="943.0" cy="798.6" r="3.6"/>
<circle cx="919.7" cy="806.2" r="3.6"/>
<circle cx="916.4" cy="789.0" r="3.6"/>
<circle cx="954.6" cy="802.9" r="3.6"/>
<circle cx="950.2" cy="806.0" r="3.6"/>
<circle cx="949.4" cy="797.5" r="3.6"/>
<circle cx="963.7" cy="795.7" r="3.6"/>
<circle cx="986.9" cy="801.1" r="3.6"/>
<circle cx="971.0" cy="798.4" r="3.6"/>
<circle cx="983.8" cy="806.2" r="3.6"/>
<circle cx="927.8" cy="798.5" r="3.6"/>
<circle cx="976.0" cy="803.3" r="3.6"/>
<circle cx="931.0" cy="800.3" r="3.6"/>
<circle cx="926.1" cy="800.0" r="3.6"/>
<circle cx="917.0" cy="791.7" r="3.6"/>
<circle cx="925.3" cy="800.6" r="3.6"/>
<circle cx="972.2" cy="794.7" r="3.6"/>
<circle cx="883.3" cy="800.1" r="3.6"/>
<circle cx="978.9" cy="804.2" r="3.6"/>
<circle cx="931.6" cy="796.8" r="3.6"/>
<circle cx="947.7" cy="790.7" r="3.6"/>
<circle cx="891.0" cy="799.3" r="3.6"/>
<circle cx="912.2" cy="800.3" r="3.6"/>
<circle cx="971.2" cy="798.7" r="3.6"/>
<circle cx="969.2" cy="800.3" r="3.6"/>
<circle cx="942.8" cy="804.2" r="3.6"/>
<circle cx="947.7" cy="791.7" r="3.6"/>
<circle cx="940.1" cy="796.5" r="3.6"/>
<circle cx="964.7" cy="742.4" r="3.6"/>
<circle cx="972.9" cy="753.0" r="3.6"/>
<circle cx="965.4" cy="735.4" r="3.6"/>
<circle cx="969.7" cy="737.3" r="3.6"/>
<circle cx="956.3" cy="736.8" r="3.6"/>
<circle cx="967.5" cy="723.4" r="3.6"/>
<circle cx="960.4" cy="756.2" r="3.6"/>
<circle cx="968.4" cy="750.1" r="3.6"/>
<circle cx="977.8" cy="748.3" r="3.6"/>
<circle cx="982.8" cy="745.9" r="3.6"/>
<circle cx="975.5" cy="734.8" r="3.6"/>
<circle cx="957.9" cy="726.6" r="3.6"/>
<circle cx="971.8" cy="756.8" r="3.6"/>
<circle cx="969.2" cy="745.6" r="3.6"/>
<circle cx="963.5" cy="724.7" r="3.6"/>
<circle cx="969.3" cy="748.3" r="3.6"/>
<circle cx="961.5" cy="747.5" r="3.6"/>
<circle cx="958.3" cy="744.1" r="3.6"/>
<circle cx="966.0" cy="745.6" r="3.6"/>
<circle cx="956.6" cy="735.7" r="3.6"/>
<circle cx="974.0" cy="743.4" r="3.6"/>
<circle cx="961.8" cy="739.2" r="3.6"/>
<circle cx="952.7" cy="728.1" r="3.6"/>
<circle cx="967.4" cy="757.9" r="3.6"/>
<circle cx="968.9" cy="723.9" r="3.6"/>
<circle cx="1018.0" cy="578.0" r="3.6"/>
<circle cx="1008.0" cy="582.0" r="3.6"/>
<circle cx="1022.0" cy="590.0" r="3.6"/>
<circle cx="981.0" cy="632.0" r="3.6"/>
<circle cx="975.0" cy="655.0" r="3.6"/>
<circle cx="965.0" cy="680.0" r="3.6"/>
<circle cx="862.0" cy="780.0" r="3.6"/>
<circle cx="1000.0" cy="806.0" r="3.6"/>
<circle cx="994.0" cy="800.0" r="3.6"/>
<circle cx="1005.0" cy="560.0" r="3.6"/>
<circle cx="1010.0" cy="570.0" r="3.6"/>
<circle cx="996.6" cy="584.3" r="3.6"/>
<circle cx="991.4" cy="559.2" r="3.6"/>
<circle cx="1009.9" cy="556.7" r="3.6"/>
<circle cx="1006.7" cy="558.7" r="3.6"/>
<circle cx="997.3" cy="568.5" r="3.6"/>
<circle cx="992.4" cy="586.2" r="3.6"/>
<circle cx="998.2" cy="582.0" r="3.6"/>
<circle cx="1001.4" cy="593.0" r="3.6"/>
<circle cx="992.8" cy="565.1" r="3.6"/>
<circle cx="987.0" cy="564.7" r="3.6"/>
<circle cx="1007.5" cy="560.8" r="3.6"/>
<circle cx="990.6" cy="571.9" r="3.6"/>
<circle cx="1011.9" cy="577.3" r="3.6"/>
<circle cx="988.3" cy="566.6" r="3.6"/>
<circle cx="991.9" cy="585.6" r="3.6"/>
<circle cx="997.5" cy="567.2" r="3.6"/>
<circle cx="1011.3" cy="559.8" r="3.6"/>
<circle cx="998.5" cy="594.0" r="3.6"/>
<circle cx="793.0" cy="648.0" r="3.6"/>
<circle cx="801.0" cy="654.0" r="3.6"/>
<circle cx="822.0" cy="673.0" r="3.6"/>
<circle cx="826.0" cy="686.0" r="3.6"/>
<circle cx="1021.0" cy="578.0" r="3.6"/>
<circle cx="1025.0" cy="582.0" r="3.6"/>
<circle cx="1038.0" cy="609.0" r="3.6"/>
<circle cx="976.0" cy="654.0" r="3.6"/>
<circle cx="955.0" cy="669.0" r="3.6"/>
<circle cx="963.0" cy="681.0" r="3.6"/>
</g>

<g font-family="'Liberation Sans',sans-serif" font-size="7.7" fill="#b0706a">
<text x="586" y="66">Itezhi-Tezhi District</text>
<text x="1691" y="332.500" fill="#9a6660">Chilanga District</text>
<text transform="translate(1649,139) rotate(76)" >Central Province</text>
<text transform="translate(652,92) rotate(88)" fill="#b58a84">Southern Province</text>
<text transform="translate(1146,150) rotate(33)">Mumbwa District</text>
<text transform="translate(176,396) rotate(-28)" fill="#b89088">Itezhi-Tezhi District</text>
<text transform="translate(1619,773) rotate(37)" font-size="7.5">Mazabuka District</text>
<text transform="translate(1167,720) rotate(52)" font-size="7.5">Mazabuka District</text>
</g>
<g font-family="'Liberation Sans',sans-serif" font-size="8.600" fill="#5a4a3e">
<text x="1451" y="640">Mazabuka</text>
<text x="1575" y="750" font-size="6" font-weight="bold" fill="#7a4a30">T1</text>
<text x="1372" y="677">Kaleya</text>
<text x="1294" y="796">Magoye</text>
<text x="1893" y="516">Kafue</text>
</g>

</svg><div id="nav">
<span class="brand">KAFUE</span>
<span class="bar"></span>
<span class="lnk" style="left:503px;transform:scaleX(.967)">Explore</span>
<span class="lnk" style="left:575px;transform:scaleX(.94)">Data</span><div class="caret" style="left:614px"></div>
<span class="lnk" style="left:639px;">About</span><div class="caret" style="left:689px"></div>
<span class="lnk" style="left:1391px;transform:scaleX(.954)">Sign Up</span>
<span class="lnk" style="left:1466px;transform:scaleX(.97)">Login</span>
</div>
<div id="tools">
<div id="zoom">
<svg width="54" height="30" viewBox="0 -1 54 30"><path d="M7.5,16.500h12M13.500,10.500v12" stroke="#fff" stroke-width="3" fill="none"/><path d="M35,16.5h11" stroke="#fff" stroke-width="2.6" fill="none"/></svg>
</div>
<div id="panel">
<!-- search -->
<svg style="left:14px;top:11px" width="28" height="28" viewBox="0 0 28 28"><circle cx="11.5" cy="11.5" r="7.8" fill="none" stroke="#444" stroke-width="3"/><path d="M17.5,17.5L23.5,23.5" stroke="#444" stroke-width="3.4" stroke-linecap="round"/></svg>
<!-- extent -->
<svg style="left:13px;top:57px" width="28" height="24" viewBox="0 0 28 24"><rect x="2.200" y="2.200" width="23.600" height="19.600" fill="none" stroke="#444" stroke-width="1.700"/><g fill="#fff" stroke="#444" stroke-width="1.200"><rect x=".6" y=".6" width="3.600" height="3.600"/><rect x="23.800" y=".6" width="3.600" height="3.600"/><rect x=".6" y="19.800" width="3.600" height="3.600"/><rect x="23.800" y="19.800" width="3.600" height="3.600"/></g><rect x="11.500" y="10" width="10.500" height="8" fill="#fff" stroke="#444" stroke-width="1.500"/><rect x="6.500" y="6" width="10.500" height="8" fill="#fff" stroke="#444" stroke-width="1.500"/></svg>
<!-- map -->
<svg style="left:14px;top:102px" width="26" height="26" viewBox="0 0 26 26"><path d="M1,4.500L8,1v20.500L1,25zM9.300,1L16.700,4.500V25L9.300,21.500zM18,4.500L25,1V21.500L18,25z" fill="#444"/></svg>
<!-- location -->
<svg style="left:17px;top:152px" width="21" height="21" viewBox="0 0 21 21"><path d="M20,0.500L11.500,20.500V10H0.800z" fill="#444"/></svg>
<!-- print -->
<svg style="left:16px;top:197px" width="23" height="22" viewBox="0 0 23 22"><path d="M5,0.500h9.500l3.500,3.500v5.500h-2v-4.500h-3v-3h-6.500v7.500h-1.500z" fill="#444"/><path d="M2.500,9.500h18a2,2 0 0 1 2,2v6.500h-4v-4h-14v4h-4v-6.500a2,2 0 0 1 2,-2z" fill="#444"/><rect x="5.500" y="15.500" width="12" height="5" fill="none" stroke="#444" stroke-width="1.600"/><circle cx="19.500" cy="12.200" r="1" fill="#fff"/></svg>
<!-- link -->
<svg style="left:16px;top:241px" width="23" height="23" viewBox="0 0 23 23"><g fill="none" stroke="#cfcfcf" stroke-width="2.6"><rect x="1.500" y="3.200" width="11" height="7" rx="3.500" transform="rotate(40 7 6.700)"/><rect x="10.500" y="12.800" width="11" height="7" rx="3.500" transform="rotate(40 16 16.300)"/></g><path d="M9.500,9L13.500,14" stroke="#cfcfcf" stroke-width="2.600"/></svg>
<!-- layers -->
<svg style="left:12px;top:284px" width="30" height="32" viewBox="0 0 30 32"><defs><linearGradient id="lg" x1="0" y1="0" x2="1" y2="1"><stop offset="0" stop-color="#b4b4b4"/><stop offset="1" stop-color="#9c9c9c"/></linearGradient></defs><g transform="translate(14.600,17.600) scale(1,.78) rotate(45)"><rect x="-11" y="-11" width="22" height="22" rx="6.500" fill="#444"/></g><g transform="translate(14.600,12.800) scale(1,.78) rotate(45)"><rect x="-11" y="-11" width="22" height="22" rx="6.500" fill="url(#lg)" stroke="#fff" stroke-width="1.200"/></g></svg>
</div>
</div>
<div id="scale"><div></div><span>10 km</span></div>
<div id="legend">
<span class="h" style="left:10px;top:14px;transform:scaleX(.837)">Sites</span>
<svg style="position:absolute;left:0;top:30px" width="60" height="170" viewBox="0 0 60 170">
<circle cx="30" cy="24" r="3" fill="#d9cf45"/>
<circle cx="30.300" cy="64.500" r="5.200" fill="#dad23e" stroke="#5a5520" stroke-width="1"/>
<circle cx="30" cy="104.300" r="7.800" fill="#dad23e" stroke="#4e4912" stroke-width="1.600"/>
<circle cx="30.500" cy="144" r="10.500" fill="#dad23e" stroke="#433e0c" stroke-width="3"/>
</svg>
<span class="d" style="left:53px;top:47px;letter-spacing:.2px">Sites</span>
<span class="d" style="left:53px;top:87px;letter-spacing:.14px">Sites medium</span>
<span class="d" style="left:53px;top:127px;letter-spacing:.28px">Sites large</span>
<span class="d" style="left:53px;top:167px;letter-spacing:.35px">Sites huge</span>
<span class="h" style="left:10px;top:217.5px;transform:scaleX(.82)">Wetlands</span>
<i style="top:238px"></i>
<i style="top:265px"></i><span class="t" style="left:35px;top:270.5px">Zambezi River + Tributaries</span>
<i style="top:291px"></i><span class="t" style="left:35px;top:297px;transform:scaleX(.863)">Zambezi River</span>
<i style="top:318px"></i><span class="t" style="left:35px;top:323.5px;transform:scaleX(.856)">Upper Chambeshi River</span>
<i style="top:344px"></i><span class="t" style="left:35px;top:350px;transform:scaleX(.891)">Trib/Luanginga</span>
<svg style="position:absolute;right:3px;bottom:3px" width="9" height="9" viewBox="0 0 9 9"><path d="M8.500,1L1,8.500M8.500,4L4,8.500M8.500,6.500L6.500,8.500" stroke="#777" stroke-width="1"/></svg>
</div>
<div id="globe"><svg width="16" height="16" viewBox="0 0 16 16"><circle cx="8" cy="8" r="5" fill="#555"/><path d="M6,5.500q2,-2 3.500,0q.5,2 -1.500,2.500q-2.500,0 -2,-2.500zM9,11q1.500,-1.500 3,-1q-1,2 -3,2z" fill="#fff"/></svg></div>
<div id="attr"><span><b>© OpenStreetMap</b> contributors.</span></div>
<div class="fab" style="top:699.5px"><svg width="50" height="50" viewBox="0 -2 50 50"><g fill="none" stroke="#fbefd6" stroke-width="1.500" stroke-linejoin="round"><path d="M13,17.500l7.500,-2.500l8,2.500v16l-8,-2.500l-7.500,2.500z"/><path d="M20.500,15v16M28.500,17.500v16"/><path d="M28.500,33.500l8,-2.500v-8"/></g><path d="M32.500,9.500a5,5 0 0 1 5,5c0,3.500 -5,10 -5,10c0,0 -5,-6.500 -5,-10a5,5 0 0 1 5,-5z" fill="#fbefd6"/><circle cx="32.500" cy="14.500" r="2" fill="#e1b431"/></svg></div>
<div class="fab" style="top:764.5px"><svg width="50" height="50" viewBox="0 0 50 50"><path d="M25,16c7,0 12.500,4 12.500,9s-5.500,9 -12.500,9c-1.500,0 -3,-.2 -4.300,-.5c-2,1.800 -4.500,2.800 -7,3c1.500,-1.500 2.500,-3.200 2.800,-5c-2.500,-1.600 -4,-4 -4,-6.500c0,-5 5.500,-9 12.500,-9z" fill="#fbefd6"/></svg></div>
</body>
</html>
